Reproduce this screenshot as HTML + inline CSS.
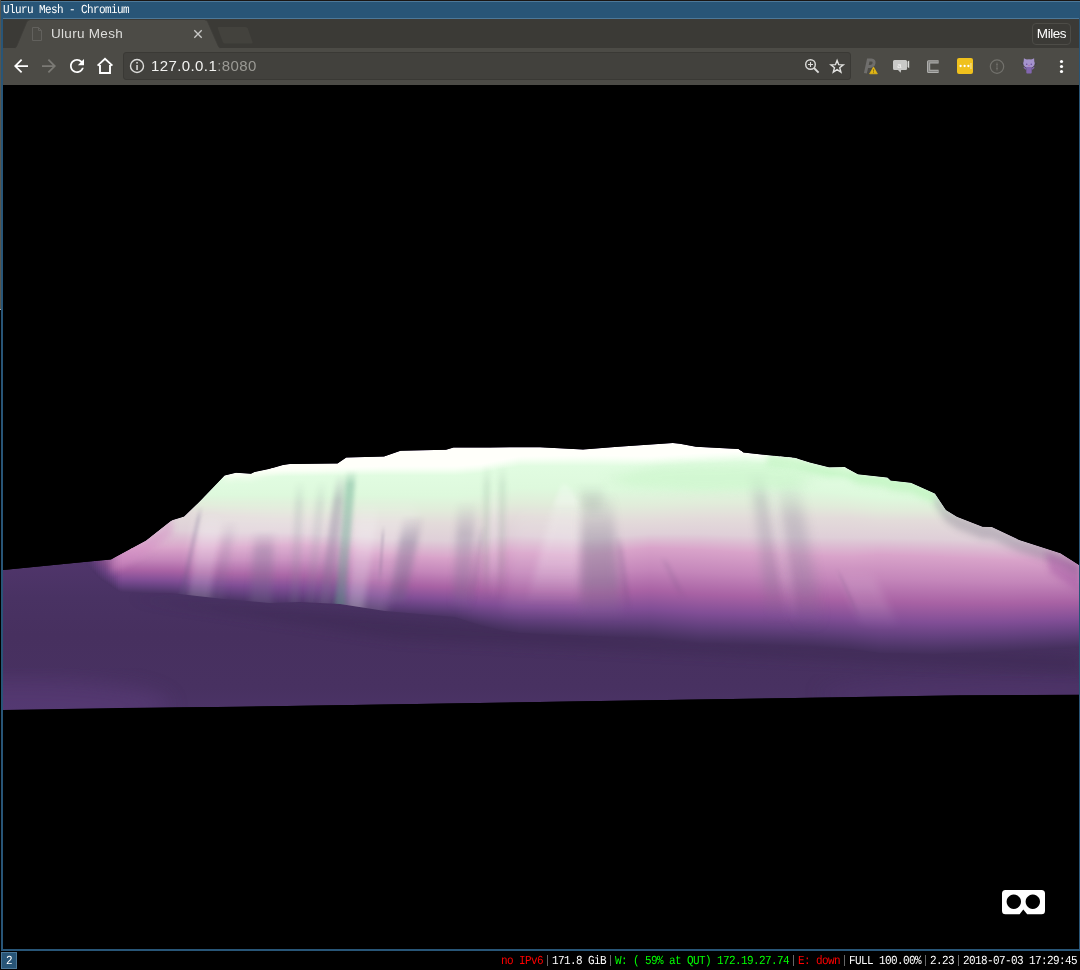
<!DOCTYPE html>
<html>
<head>
<meta charset="utf-8">
<title>Uluru Mesh - Chromium</title>
<style>
html,body{margin:0;padding:0;background:#000;}
body{width:1080px;height:970px;position:relative;overflow:hidden;font-family:"Liberation Sans",sans-serif;}
.abs{position:absolute;}
#tabtitle,#url,#miles{will-change:transform;}
.mono{font-family:"Liberation Mono",monospace;font-size:11px;letter-spacing:-0.601px;line-height:12px;white-space:pre;transform:scaleY(1.12) skewX(0.05deg);transform-origin:0 0;filter:brightness(1);}
#titlebar{left:1px;top:1px;width:1079px;height:18px;background:#285577;box-sizing:border-box;border-top:1px solid #4c7899;}
#titleline{left:3px;top:18px;width:1076px;height:1px;background:#4c7899;}
#titletext{left:3px;top:3px;color:#fff;}
#col0{left:0;top:0;width:1px;height:309px;background:#55554f;}
#col0b{left:0;top:309px;width:1px;height:1px;background:#a8a8a8;}
#row0{left:0;top:0;width:1080px;height:1px;background:#1a1614;}
#bl{left:1px;top:19px;width:2px;height:932px;background:#285577;}
#br{left:1079px;top:19px;width:1px;height:932px;background:#285577;}
#bb{left:1px;top:949px;width:1079px;height:2px;background:#285577;}
#tabstrip{left:3px;top:19px;width:1076px;height:29px;background:#3b3a36;}
#toolbar{left:3px;top:48px;width:1076px;height:37px;background:#4c4b46;}
#urlbox{left:123px;top:52px;width:728px;height:28px;background:#42413d;border-radius:3px;box-sizing:border-box;border:1px solid #3a3935;}
#tabtitle{left:51px;top:25px;font-size:13.5px;line-height:18px;color:#dededc;white-space:pre;letter-spacing:0.3px;}
#url{left:151px;top:56px;font-size:15px;line-height:20px;color:#f2f2f0;white-space:pre;letter-spacing:0.4px;}
#url span{color:#9a9994;}
#miles{left:1032px;top:23px;width:39px;height:22px;box-sizing:border-box;border:1px solid #4d4c47;border-radius:4px;color:#fff;font-size:13.5px;line-height:20px;text-align:center;letter-spacing:-0.45px;}
#content{left:3px;top:85px;width:1076px;height:864px;background:#000;overflow:hidden;}
#ws{left:1px;top:952px;width:16px;height:17px;box-sizing:border-box;background:#285577;border:1px solid #4c7899;}
#wstext{left:6px;top:954px;color:#fff;}
.st{top:954px;}
.sep{top:955px;width:1px;height:11px;background:#666;}
</style>
</head>
<body>
<div class="abs" id="row0"></div>
<div class="abs" id="col0"></div>
<div class="abs" id="col0b"></div>
<div class="abs" id="titlebar"></div>
<div class="abs" id="titleline"></div>
<div class="abs mono" id="titletext">Uluru Mesh - Chromium</div>
<div class="abs" id="bl"></div>
<div class="abs" id="br"></div>
<div class="abs" id="tabstrip"></div>
<div class="abs" id="toolbar"></div>
<svg class="abs" style="left:0;top:0" width="1080" height="86" viewBox="0 0 1080 86">
<path d="M218.5,27 L245.5,27 Q247.2,27 247.8,28.6 L252.6,42.2 Q253,43.6 251.4,43.6 L225,43.6 Q223.4,43.6 222.8,42 L217.8,28.4 Q217.4,27 218.5,27 Z" fill="#43423d"/>
<path d="M12,49 L15.0,48 Q16.2,47.4 16.8,46 L26.8,22 Q27.6,20 29.6,20 L204.9,20 Q206.9,20 207.7,22 L218.2,46 Q218.8,47.4 220,48 L223,49 Z" fill="#4c4b46"/>
<path d="M15.0,48 Q16.2,47.4 16.8,46 L26.8,22 Q27.6,20 29.6,20" fill="none" stroke="#3f3e3a" stroke-width="0.8"/>
<path d="M204.9,20 Q206.9,20 207.7,22 L218.2,46 Q218.8,47.4 220,48" fill="none" stroke="#3f3e3a" stroke-width="0.8"/>
<path d="M32.5,27.5 H38.5 L41.5,30.5 V40.5 H32.5 Z M38.5,27.5 V30.5 H41.5" fill="none" stroke="#62615d" stroke-width="1"/>
<path d="M194.3,30.3 L201.7,37.7 M201.7,30.3 L194.3,37.7" stroke="#c9c9c7" stroke-width="1.35" fill="none"/>
</svg>
<div class="abs" id="urlbox"></div>
<div class="abs" id="tabtitle">Uluru Mesh</div>
<div class="abs" id="url">127.0.0.1<span>:8080</span></div>
<div class="abs" id="miles">Miles</div>
<svg class="abs" style="left:0;top:0" width="1080" height="86" viewBox="0 0 1080 86">
<path transform="translate(10.5,55.5) scale(0.875)" d="M20 11H7.83l5.59-5.59L12 4l-8 8 8 8 1.41-1.41L7.83 13H20v-2z" fill="#ffffff"/>
<path transform="translate(38.5,55.5) scale(0.875)" d="M12 4l-1.41 1.41L16.17 11H4v2h12.17l-5.58 5.59L12 20l8-8z" fill="#7b7a75"/>
<path transform="translate(66.5,55.5) scale(0.875)" d="M17.65 6.35C16.2 4.9 14.21 4 12 4c-4.42 0-7.99 3.58-7.99 8s3.57 8 7.99 8c3.73 0 6.84-2.55 7.73-6h-2.08c-.82 2.33-3.04 4-5.65 4-3.31 0-6-2.69-6-6s2.69-6 6-6c1.66 0 3.14.69 4.22 1.78L13 11h7V4l-2.35 2.35z" fill="#ffffff"/>
<path d="M97.6,65.6 L105,58.9 L112.4,65.6 M100,65 V73 H110 V65" fill="none" stroke="#ffffff" stroke-width="1.9" stroke-linejoin="miter"/>
<circle cx="137" cy="66" r="6.5" fill="none" stroke="#dcdcda" stroke-width="1.4"/>
<rect x="136.3" y="65" width="1.5" height="5" fill="#dcdcda"/><rect x="136.3" y="62" width="1.5" height="1.6" fill="#dcdcda"/>
<circle cx="810.5" cy="64.5" r="4.8" fill="none" stroke="#dcdcda" stroke-width="1.4"/>
<path d="M814,68 L818.6,72.6" stroke="#dcdcda" stroke-width="1.9" fill="none"/>
<path d="M808,64.5 H813 M810.5,62 V67" stroke="#dcdcda" stroke-width="1.1" fill="none"/>
<polygon points="837.10,60.40 838.72,64.68 843.28,64.89 839.72,67.75 840.92,72.16 837.10,69.65 833.28,72.16 834.48,67.75 830.92,64.89 835.48,64.68" fill="none" stroke="#e2e2e0" stroke-width="1.4" stroke-linejoin="miter"/>
<path d="M865.4,73.3 L868.3,60.0 L871.4,60.0 Q874.5,60.2 874.0,63.3 Q873.3,66.5 870.2,66.5 L867.6,66.5" fill="none" stroke="#6f6e6c" stroke-width="3" stroke-linejoin="miter"/>
<polygon points="869.6,73.8 877.4,73.8 873.5,67.0" fill="#e2b714" stroke="#e2b714" stroke-width="0.7" stroke-linejoin="round"/>
<rect x="873.05" y="69.2" width="0.9" height="2.4" fill="#8a6d10"/><rect x="873.05" y="72.2" width="0.9" height="0.9" fill="#8a6d10"/>
<path d="M894.5,60 H905.6 Q907.1,60 907.1,61.5 V68.5 Q907.1,70 905.6,70 H901.2 L900.6,72.8 L898,70 H894.5 Q893,70 893,68.5 V61.5 Q893,60 894.5,60 Z" fill="#c9c9c7"/>
<path d="M907.6,61.6 L909.2,60.4 V68.2 L907.6,67 Z" fill="#dededc"/>
<text x="897.3" y="68.2" font-family="Liberation Sans" font-size="7.5" fill="#f4f4f2">a</text>
<path d="M938.6,61.8 H928.6 V71.4 H938.6" fill="none" stroke="#b0b0ae" stroke-width="3.2" stroke-linejoin="round"/>
<path d="M938.6,61.8 H928.6 V71.4 H938.6" fill="none" stroke="#858583" stroke-width="1.3"/>
<rect x="957" y="58" width="16" height="16" rx="2" fill="#f0c11d"/>
<circle cx="960.6" cy="66" r="1.15" fill="#fff"/>
<circle cx="964.6" cy="66" r="1.15" fill="#fff"/>
<circle cx="968.4" cy="66" r="1.15" fill="#fff"/>
<rect x="970.4" y="63" width="1.1" height="6" fill="#f8e39a"/>
<circle cx="997" cy="66.6" r="6.7" fill="none" stroke="#73726d" stroke-width="1.2"/>
<path d="M997,62.5 V70.5 M996,64.5 H998 M996,68.5 H998" stroke="#6a6964" stroke-width="1.1" fill="none"/>
<g>
<polygon points="1023.6,63 1023.9,58.2 1027.5,60" fill="#a593cd"/><polygon points="1034.4,63 1034.1,58.2 1030.5,60" fill="#a593cd"/>
<ellipse cx="1029" cy="63.6" rx="5.7" ry="4.3" fill="#a593cd"/>
<path d="M1026.3,67 H1031.7 V72.6 Q1031.7,73.6 1030.8,73.6 H1027.2 Q1026.3,73.6 1026.3,72.6 Z" fill="#8266b0"/>
<path d="M1023.8,67.2 L1026.2,69.2 M1034.2,67.2 L1031.8,69.2" stroke="#8266b0" stroke-width="1.3" fill="none"/>
<path d="M1021.4,63.5 L1023,64.5 M1036.6,63.5 L1035,64.5" stroke="#3d3a4a" stroke-width="1" fill="none"/>
<circle cx="1026.7" cy="64.2" r="0.8" fill="#6a4f9c"/><circle cx="1031.3" cy="64.2" r="0.8" fill="#6a4f9c"/>
<circle cx="1029" cy="65.6" r="0.7" fill="#b8689a"/>
</g>
<circle cx="1061.5" cy="61.5" r="1.6" fill="#ffffff"/>
<circle cx="1061.5" cy="66.5" r="1.6" fill="#ffffff"/>
<circle cx="1061.5" cy="71.5" r="1.6" fill="#ffffff"/>
</svg>
<div class="abs" id="content">
<svg class="abs" style="left:0;top:0" width="1076" height="864" viewBox="0 0 1076 864">
<defs>
<linearGradient id="pa" x1="0" y1="0" x2="0" y2="1"><stop offset="0.000" stop-color="#fffffb"/><stop offset="0.050" stop-color="#f8fff5"/><stop offset="0.170" stop-color="#e1fce1"/><stop offset="0.520" stop-color="#def9dd"/><stop offset="0.780" stop-color="#e1ecda"/><stop offset="1.000" stop-color="#e3dcda"/></linearGradient>
<linearGradient id="pb" x1="0" y1="0" x2="0" y2="1"><stop offset="0.000" stop-color="#e3dcda"/><stop offset="0.520" stop-color="#dfcfd8"/><stop offset="1.000" stop-color="#d9a4ca"/></linearGradient>
<linearGradient id="pc" x1="0" y1="0" x2="0" y2="1"><stop offset="0.000" stop-color="#d9a4ca"/><stop offset="0.250" stop-color="#c486ba"/><stop offset="0.480" stop-color="#a862a4"/><stop offset="0.680" stop-color="#814e96"/><stop offset="0.820" stop-color="#64417f"/><stop offset="0.930" stop-color="#4f3669"/><stop offset="1.000" stop-color="#442f5c"/></linearGradient>
<linearGradient id="gg" gradientUnits="userSpaceOnUse" x1="0" y1="475" x2="0" y2="625"><stop offset="0" stop-color="#50356b"/><stop offset="0.25" stop-color="#493263"/><stop offset="0.5" stop-color="#47305f"/><stop offset="0.85" stop-color="#483161"/><stop offset="1" stop-color="#4b3366"/></linearGradient>
<filter id="bl1_2" x="-50%" y="-20%" width="200%" height="140%"><feGaussianBlur stdDeviation="1.2 1.0"/></filter>
<filter id="bl1_5" x="-50%" y="-20%" width="200%" height="140%"><feGaussianBlur stdDeviation="1.5 1.0"/></filter>
<filter id="bl2_0" x="-50%" y="-20%" width="200%" height="140%"><feGaussianBlur stdDeviation="2.0 1.0"/></filter>
<filter id="bl2_5" x="-50%" y="-20%" width="200%" height="140%"><feGaussianBlur stdDeviation="2.5 1.0"/></filter>
<filter id="bl3_0" x="-50%" y="-20%" width="200%" height="140%"><feGaussianBlur stdDeviation="3.0 1.0"/></filter>
<filter id="bl3_5" x="-50%" y="-20%" width="200%" height="140%"><feGaussianBlur stdDeviation="3.5 1.0"/></filter>
<filter id="bl4_0" x="-50%" y="-20%" width="200%" height="140%"><feGaussianBlur stdDeviation="4.0 1.0"/></filter>
<filter id="bl5_0" x="-50%" y="-20%" width="200%" height="140%"><feGaussianBlur stdDeviation="5.0 1.0"/></filter>
<filter id="bl6_0" x="-50%" y="-20%" width="200%" height="140%"><feGaussianBlur stdDeviation="6.0 6.0"/></filter>
<filter id="bl10_0" x="-50%" y="-20%" width="200%" height="140%"><feGaussianBlur stdDeviation="10.0 10.0"/></filter>
<clipPath id="cs"><polygon points="0.0,485.0 81.0,477.0 108.0,474.5 112.0,472.2 143.0,455.4 167.4,436.3 169.6,435.0 181.0,431.5 194.0,419.0 199.0,414.0 221.5,390.5 233.0,387.8 248.0,388.8 251.5,387.0 267.0,383.7 280.0,380.0 287.0,379.0 334.5,378.6 343.2,372.4 381.0,371.6 397.5,365.7 443.0,364.7 450.5,362.6 487.0,362.4 537.0,362.2 580.0,364.6 615.0,361.7 669.8,358.0 677.0,358.7 693.0,361.7 735.5,364.0 740.5,367.6 763.6,370.0 791.7,372.7 807.0,377.6 826.0,382.3 841.6,382.0 855.0,389.3 884.5,392.5 887.6,395.6 908.0,397.7 932.0,408.4 943.0,425.0 954.0,431.8 979.6,441.7 989.0,442.0 1016.4,455.0 1057.5,468.3 1076.0,480.0 1076.0,609.8 957.0,610.3 807.0,612.8 597.0,616.0 397.0,619.2 237.0,621.7 117.0,622.9 0.0,625.0"/></clipPath>
<clipPath id="cr"><polygon points="81.0,477.0 108.0,474.5 112.0,472.2 143.0,455.4 167.4,436.3 169.6,435.0 181.0,431.5 194.0,419.0 199.0,414.0 221.5,390.5 233.0,387.8 248.0,388.8 251.5,387.0 267.0,383.7 280.0,380.0 287.0,379.0 334.5,378.6 343.2,372.4 381.0,371.6 397.5,365.7 443.0,364.7 450.5,362.6 487.0,362.4 537.0,362.2 580.0,364.6 615.0,361.7 669.8,358.0 677.0,358.7 693.0,361.7 735.5,364.0 740.5,367.6 763.6,370.0 791.7,372.7 807.0,377.6 826.0,382.3 841.6,382.0 855.0,389.3 884.5,392.5 887.6,395.6 908.0,397.7 932.0,408.4 943.0,425.0 954.0,431.8 979.6,441.7 989.0,442.0 1016.4,455.0 1057.5,468.3 1076.0,480.0 1076.0,563.0 997.0,567.0 932.0,569.0 877.0,568.0 847.0,564.0 807.0,561.0 742.0,559.0 697.0,558.0 647.0,553.0 587.0,551.0 517.0,548.0 497.0,545.0 477.0,540.0 452.0,532.0 382.0,526.0 337.0,519.0 297.0,517.0 267.0,518.0 221.0,514.0 167.0,508.0 141.0,508.0 117.0,507.0 97.0,494.0 81.0,478.0"/></clipPath>
</defs>
<g clip-path="url(#cs)">
<polygon points="0.0,485.0 81.0,477.0 108.0,474.5 112.0,472.2 143.0,455.4 167.4,436.3 169.6,435.0 181.0,431.5 194.0,419.0 199.0,414.0 221.5,390.5 233.0,387.8 248.0,388.8 251.5,387.0 267.0,383.7 280.0,380.0 287.0,379.0 334.5,378.6 343.2,372.4 381.0,371.6 397.5,365.7 443.0,364.7 450.5,362.6 487.0,362.4 537.0,362.2 580.0,364.6 615.0,361.7 669.8,358.0 677.0,358.7 693.0,361.7 735.5,364.0 740.5,367.6 763.6,370.0 791.7,372.7 807.0,377.6 826.0,382.3 841.6,382.0 855.0,389.3 884.5,392.5 887.6,395.6 908.0,397.7 932.0,408.4 943.0,425.0 954.0,431.8 979.6,441.7 989.0,442.0 1016.4,455.0 1057.5,468.3 1076.0,480.0 1076.0,609.8 957.0,610.3 807.0,612.8 597.0,616.0 397.0,619.2 237.0,621.7 117.0,622.9 0.0,625.0" fill="url(#gg)"/>
<path d="M127.0,513.0 L397.0,533.0 L697.0,557.0 L1076.0,570.0 L1076.0,587.0 L397.0,555.0 Z" fill="#37254d" opacity="0.38" filter="url(#bl6_0)"/>
<ellipse cx="17" cy="620" rx="150" ry="26" fill="#603f80" opacity="0.45" filter="url(#bl10_0)"/>
<ellipse cx="997" cy="609" rx="180" ry="14" fill="#5a3b78" opacity="0.35" filter="url(#bl10_0)"/>
</g>
<g clip-path="url(#cs)">
<g clip-path="url(#cr)"><g shape-rendering="crispEdges">
<g opacity="0.03">
<rect x="81" y="355.1" width="2" height="30.5" fill="#fffffa"/>
<rect x="81" y="385.1" width="2" height="38.4" fill="url(#pa)"/>
<rect x="81" y="423.0" width="2" height="32.8" fill="url(#pb)"/>
<rect x="81" y="455.3" width="2" height="23.8" fill="url(#pc)"/>
</g>
<g opacity="0.08">
<rect x="83" y="355.2" width="2" height="30.5" fill="#fffffa"/>
<rect x="83" y="385.2" width="2" height="38.3" fill="url(#pa)"/>
<rect x="83" y="423.0" width="2" height="33.4" fill="url(#pb)"/>
<rect x="83" y="455.9" width="2" height="25.2" fill="url(#pc)"/>
</g>
<g opacity="0.13">
<rect x="85" y="355.3" width="2" height="30.5" fill="#fffffa"/>
<rect x="85" y="385.3" width="2" height="38.2" fill="url(#pa)"/>
<rect x="85" y="423.0" width="2" height="34.1" fill="url(#pb)"/>
<rect x="85" y="456.6" width="2" height="26.8" fill="url(#pc)"/>
</g>
<g opacity="0.18">
<rect x="87" y="355.4" width="2" height="30.5" fill="#fffffa"/>
<rect x="87" y="385.4" width="2" height="38.1" fill="url(#pa)"/>
<rect x="87" y="423.0" width="2" height="34.7" fill="url(#pb)"/>
<rect x="87" y="457.2" width="2" height="28.2" fill="url(#pc)"/>
</g>
<g opacity="0.24">
<rect x="89" y="355.6" width="2" height="30.5" fill="#fffffa"/>
<rect x="89" y="385.6" width="2" height="37.9" fill="url(#pa)"/>
<rect x="89" y="423.0" width="2" height="35.3" fill="url(#pb)"/>
<rect x="89" y="457.8" width="2" height="29.8" fill="url(#pc)"/>
</g>
<g opacity="0.29">
<rect x="91" y="355.7" width="2" height="30.5" fill="#fffffa"/>
<rect x="91" y="385.7" width="2" height="37.8" fill="url(#pa)"/>
<rect x="91" y="423.0" width="2" height="35.9" fill="url(#pb)"/>
<rect x="91" y="458.4" width="2" height="31.2" fill="url(#pc)"/>
</g>
<g opacity="0.34">
<rect x="93" y="355.8" width="2" height="30.5" fill="#fffffa"/>
<rect x="93" y="385.8" width="2" height="37.7" fill="url(#pa)"/>
<rect x="93" y="423.0" width="2" height="36.6" fill="url(#pb)"/>
<rect x="93" y="459.1" width="2" height="32.8" fill="url(#pc)"/>
</g>
<g opacity="0.39">
<rect x="95" y="355.9" width="2" height="30.5" fill="#fffffa"/>
<rect x="95" y="385.9" width="2" height="37.6" fill="url(#pa)"/>
<rect x="95" y="423.0" width="2" height="37.2" fill="url(#pb)"/>
<rect x="95" y="459.7" width="2" height="34.2" fill="url(#pc)"/>
</g>
<g opacity="0.45">
<rect x="97" y="356.1" width="2" height="30.5" fill="#fffffa"/>
<rect x="97" y="386.1" width="2" height="37.5" fill="url(#pa)"/>
<rect x="97" y="423.1" width="2" height="37.6" fill="url(#pb)"/>
<rect x="97" y="460.1" width="2" height="35.6" fill="url(#pc)"/>
</g>
<g opacity="0.50">
<rect x="99" y="356.1" width="2" height="30.5" fill="#fffffa"/>
<rect x="99" y="386.1" width="2" height="37.5" fill="url(#pa)"/>
<rect x="99" y="423.1" width="2" height="37.8" fill="url(#pb)"/>
<rect x="99" y="460.5" width="2" height="36.6" fill="url(#pc)"/>
</g>
<g opacity="0.55">
<rect x="101" y="356.2" width="2" height="30.5" fill="#fffffa"/>
<rect x="101" y="386.2" width="2" height="37.5" fill="url(#pa)"/>
<rect x="101" y="423.2" width="2" height="38.0" fill="url(#pb)"/>
<rect x="101" y="460.8" width="2" height="37.8" fill="url(#pc)"/>
</g>
<g opacity="0.61">
<rect x="103" y="356.4" width="2" height="30.5" fill="#fffffa"/>
<rect x="103" y="386.4" width="2" height="37.5" fill="url(#pa)"/>
<rect x="103" y="423.4" width="2" height="38.2" fill="url(#pb)"/>
<rect x="103" y="461.0" width="2" height="38.9" fill="url(#pc)"/>
</g>
<g opacity="0.66">
<rect x="105" y="356.4" width="2" height="30.5" fill="#fffffa"/>
<rect x="105" y="386.4" width="2" height="37.5" fill="url(#pa)"/>
<rect x="105" y="423.4" width="2" height="38.4" fill="url(#pb)"/>
<rect x="105" y="461.4" width="2" height="39.9" fill="url(#pc)"/>
</g>
<g opacity="0.71">
<rect x="107" y="356.6" width="2" height="30.5" fill="#fffffa"/>
<rect x="107" y="386.6" width="2" height="37.5" fill="url(#pa)"/>
<rect x="107" y="423.6" width="2" height="38.6" fill="url(#pb)"/>
<rect x="107" y="461.6" width="2" height="41.1" fill="url(#pc)"/>
</g>
<g opacity="0.76">
<rect x="109" y="356.6" width="2" height="30.5" fill="#fffffa"/>
<rect x="109" y="386.6" width="2" height="37.5" fill="url(#pa)"/>
<rect x="109" y="423.6" width="2" height="38.8" fill="url(#pb)"/>
<rect x="109" y="462.0" width="2" height="42.1" fill="url(#pc)"/>
</g>
<g opacity="0.82">
<rect x="111" y="356.8" width="2" height="30.5" fill="#fffffa"/>
<rect x="111" y="386.8" width="2" height="37.5" fill="url(#pa)"/>
<rect x="111" y="423.8" width="2" height="39.0" fill="url(#pb)"/>
<rect x="111" y="462.2" width="2" height="43.2" fill="url(#pc)"/>
</g>
<g opacity="0.87">
<rect x="113" y="356.9" width="2" height="30.5" fill="#fffffa"/>
<rect x="113" y="386.9" width="2" height="37.5" fill="url(#pa)"/>
<rect x="113" y="423.9" width="2" height="39.2" fill="url(#pb)"/>
<rect x="113" y="462.5" width="2" height="44.4" fill="url(#pc)"/>
</g>
<g opacity="0.92">
<rect x="115" y="356.9" width="2" height="30.5" fill="#fffffa"/>
<rect x="115" y="386.9" width="2" height="37.5" fill="url(#pa)"/>
<rect x="115" y="423.9" width="2" height="39.4" fill="url(#pb)"/>
<rect x="115" y="462.9" width="2" height="45.4" fill="url(#pc)"/>
</g>
<g opacity="0.97">
<rect x="117" y="357.0" width="2" height="30.5" fill="#fffffa"/>
<rect x="117" y="387.0" width="2" height="37.5" fill="url(#pa)"/>
<rect x="117" y="424.0" width="2" height="39.5" fill="url(#pb)"/>
<rect x="117" y="463.0" width="2" height="46.0" fill="url(#pc)"/>
</g>
<g opacity="1.00">
<rect x="119" y="357.1" width="2" height="30.5" fill="#fffffa"/>
<rect x="119" y="387.1" width="2" height="37.5" fill="url(#pa)"/>
<rect x="119" y="424.1" width="2" height="39.4" fill="url(#pb)"/>
<rect x="119" y="463.0" width="2" height="46.1" fill="url(#pc)"/>
</g>
<g opacity="1.00">
<rect x="121" y="357.2" width="2" height="30.5" fill="#fffffa"/>
<rect x="121" y="387.2" width="2" height="37.5" fill="url(#pa)"/>
<rect x="121" y="424.2" width="2" height="39.3" fill="url(#pb)"/>
<rect x="121" y="463.0" width="2" height="46.2" fill="url(#pc)"/>
</g>
<g opacity="1.00">
<rect x="123" y="357.3" width="2" height="30.5" fill="#fffffa"/>
<rect x="123" y="387.3" width="2" height="37.5" fill="url(#pa)"/>
<rect x="123" y="424.3" width="2" height="39.2" fill="url(#pb)"/>
<rect x="123" y="463.0" width="2" height="46.3" fill="url(#pc)"/>
</g>
<rect x="125" y="357.4" width="2" height="30.5" fill="#fffffa"/>
<rect x="125" y="387.4" width="2" height="37.5" fill="url(#pa)"/>
<rect x="125" y="424.4" width="2" height="39.1" fill="url(#pb)"/>
<rect x="125" y="463.0" width="2" height="46.4" fill="url(#pc)"/>
<rect x="127" y="357.5" width="2" height="30.5" fill="#fffffa"/>
<rect x="127" y="387.5" width="2" height="37.5" fill="url(#pa)"/>
<rect x="127" y="424.5" width="2" height="39.0" fill="url(#pb)"/>
<rect x="127" y="463.0" width="2" height="46.5" fill="url(#pc)"/>
<rect x="129" y="357.5" width="2" height="30.5" fill="#fffffa"/>
<rect x="129" y="387.5" width="2" height="37.5" fill="url(#pa)"/>
<rect x="129" y="424.5" width="2" height="39.0" fill="url(#pb)"/>
<rect x="129" y="463.0" width="2" height="46.5" fill="url(#pc)"/>
<rect x="131" y="357.6" width="2" height="30.5" fill="#fffffa"/>
<rect x="131" y="387.6" width="2" height="37.5" fill="url(#pa)"/>
<rect x="131" y="424.6" width="2" height="38.9" fill="url(#pb)"/>
<rect x="131" y="463.0" width="2" height="46.6" fill="url(#pc)"/>
<rect x="133" y="357.7" width="2" height="30.5" fill="#fffffa"/>
<rect x="133" y="387.7" width="2" height="37.5" fill="url(#pa)"/>
<rect x="133" y="424.7" width="2" height="38.8" fill="url(#pb)"/>
<rect x="133" y="463.0" width="2" height="46.7" fill="url(#pc)"/>
<rect x="135" y="357.8" width="2" height="30.5" fill="#fffffa"/>
<rect x="135" y="387.8" width="2" height="37.5" fill="url(#pa)"/>
<rect x="135" y="424.8" width="2" height="38.7" fill="url(#pb)"/>
<rect x="135" y="463.0" width="2" height="46.8" fill="url(#pc)"/>
<rect x="137" y="357.9" width="2" height="30.5" fill="#fffffa"/>
<rect x="137" y="387.9" width="2" height="37.5" fill="url(#pa)"/>
<rect x="137" y="424.9" width="2" height="38.6" fill="url(#pb)"/>
<rect x="137" y="463.0" width="2" height="46.9" fill="url(#pc)"/>
<rect x="139" y="358.0" width="2" height="30.5" fill="#fffffa"/>
<rect x="139" y="388.0" width="2" height="37.5" fill="url(#pa)"/>
<rect x="139" y="425.0" width="2" height="38.5" fill="url(#pb)"/>
<rect x="139" y="463.0" width="2" height="47.0" fill="url(#pc)"/>
<rect x="141" y="358.0" width="2" height="30.5" fill="#fffffa"/>
<rect x="141" y="388.0" width="2" height="37.5" fill="url(#pa)"/>
<rect x="141" y="425.0" width="2" height="38.5" fill="url(#pb)"/>
<rect x="141" y="463.0" width="2" height="47.0" fill="url(#pc)"/>
<rect x="143" y="358.0" width="2" height="30.5" fill="#fffffa"/>
<rect x="143" y="388.0" width="2" height="37.5" fill="url(#pa)"/>
<rect x="143" y="425.0" width="2" height="38.5" fill="url(#pb)"/>
<rect x="143" y="463.0" width="2" height="47.1" fill="url(#pc)"/>
<rect x="145" y="358.0" width="2" height="30.5" fill="#fffffa"/>
<rect x="145" y="388.0" width="2" height="37.5" fill="url(#pa)"/>
<rect x="145" y="425.0" width="2" height="38.5" fill="url(#pb)"/>
<rect x="145" y="463.0" width="2" height="47.2" fill="url(#pc)"/>
<rect x="147" y="358.0" width="2" height="30.5" fill="#fffffa"/>
<rect x="147" y="388.0" width="2" height="37.5" fill="url(#pa)"/>
<rect x="147" y="425.0" width="2" height="38.5" fill="url(#pb)"/>
<rect x="147" y="463.0" width="2" height="47.3" fill="url(#pc)"/>
<rect x="149" y="358.0" width="2" height="30.5" fill="#fffffa"/>
<rect x="149" y="388.0" width="2" height="37.5" fill="url(#pa)"/>
<rect x="149" y="425.0" width="2" height="38.5" fill="url(#pb)"/>
<rect x="149" y="463.0" width="2" height="47.3" fill="url(#pc)"/>
<rect x="151" y="358.0" width="2" height="30.5" fill="#fffffa"/>
<rect x="151" y="388.0" width="2" height="37.5" fill="url(#pa)"/>
<rect x="151" y="425.0" width="2" height="38.5" fill="url(#pb)"/>
<rect x="151" y="463.0" width="2" height="47.4" fill="url(#pc)"/>
<rect x="153" y="358.0" width="2" height="30.5" fill="#fffffa"/>
<rect x="153" y="388.0" width="2" height="37.5" fill="url(#pa)"/>
<rect x="153" y="425.0" width="2" height="38.5" fill="url(#pb)"/>
<rect x="153" y="463.0" width="2" height="47.5" fill="url(#pc)"/>
<rect x="155" y="358.0" width="2" height="30.5" fill="#fffffa"/>
<rect x="155" y="388.0" width="2" height="37.5" fill="url(#pa)"/>
<rect x="155" y="425.0" width="2" height="38.5" fill="url(#pb)"/>
<rect x="155" y="463.0" width="2" height="47.6" fill="url(#pc)"/>
<rect x="157" y="358.0" width="2" height="30.5" fill="#fffffa"/>
<rect x="157" y="388.0" width="2" height="37.5" fill="url(#pa)"/>
<rect x="157" y="425.0" width="2" height="38.5" fill="url(#pb)"/>
<rect x="157" y="463.0" width="2" height="47.7" fill="url(#pc)"/>
<rect x="159" y="358.0" width="2" height="30.5" fill="#fffffa"/>
<rect x="159" y="388.0" width="2" height="37.5" fill="url(#pa)"/>
<rect x="159" y="425.0" width="2" height="38.5" fill="url(#pb)"/>
<rect x="159" y="463.0" width="2" height="47.7" fill="url(#pc)"/>
<rect x="161" y="358.0" width="2" height="30.5" fill="#fffffa"/>
<rect x="161" y="388.0" width="2" height="37.5" fill="url(#pa)"/>
<rect x="161" y="425.0" width="2" height="38.5" fill="url(#pb)"/>
<rect x="161" y="463.0" width="2" height="47.8" fill="url(#pc)"/>
<rect x="163" y="358.0" width="2" height="30.5" fill="#fffffa"/>
<rect x="163" y="388.0" width="2" height="37.5" fill="url(#pa)"/>
<rect x="163" y="425.0" width="2" height="38.5" fill="url(#pb)"/>
<rect x="163" y="463.0" width="2" height="47.9" fill="url(#pc)"/>
<rect x="165" y="358.0" width="2" height="30.5" fill="#fffffa"/>
<rect x="165" y="388.0" width="2" height="37.5" fill="url(#pa)"/>
<rect x="165" y="425.0" width="2" height="38.5" fill="url(#pb)"/>
<rect x="165" y="463.0" width="2" height="48.0" fill="url(#pc)"/>
<rect x="167" y="358.0" width="2" height="30.5" fill="#fffffa"/>
<rect x="167" y="388.0" width="2" height="37.6" fill="url(#pa)"/>
<rect x="167" y="425.1" width="2" height="38.4" fill="url(#pb)"/>
<rect x="167" y="463.0" width="2" height="48.1" fill="url(#pc)"/>
<rect x="169" y="357.9" width="2" height="30.5" fill="#fffffa"/>
<rect x="169" y="387.9" width="2" height="37.8" fill="url(#pa)"/>
<rect x="169" y="425.3" width="2" height="38.2" fill="url(#pb)"/>
<rect x="169" y="462.9" width="2" height="48.4" fill="url(#pc)"/>
<rect x="171" y="357.9" width="2" height="30.5" fill="#fffffa"/>
<rect x="171" y="387.9" width="2" height="38.1" fill="url(#pa)"/>
<rect x="171" y="425.5" width="2" height="37.9" fill="url(#pb)"/>
<rect x="171" y="462.9" width="2" height="48.6" fill="url(#pc)"/>
<rect x="173" y="357.9" width="2" height="30.5" fill="#fffffa"/>
<rect x="173" y="387.9" width="2" height="38.3" fill="url(#pa)"/>
<rect x="173" y="425.6" width="2" height="37.7" fill="url(#pb)"/>
<rect x="173" y="462.9" width="2" height="48.9" fill="url(#pc)"/>
<rect x="175" y="357.8" width="2" height="30.5" fill="#fffffa"/>
<rect x="175" y="387.8" width="2" height="38.5" fill="url(#pa)"/>
<rect x="175" y="425.8" width="2" height="37.5" fill="url(#pb)"/>
<rect x="175" y="462.8" width="2" height="49.2" fill="url(#pc)"/>
<rect x="177" y="357.8" width="2" height="30.5" fill="#fffffa"/>
<rect x="177" y="387.8" width="2" height="38.7" fill="url(#pa)"/>
<rect x="177" y="426.0" width="2" height="37.3" fill="url(#pb)"/>
<rect x="177" y="462.8" width="2" height="49.4" fill="url(#pc)"/>
<rect x="179" y="357.8" width="2" height="30.5" fill="#fffffa"/>
<rect x="179" y="387.8" width="2" height="38.9" fill="url(#pa)"/>
<rect x="179" y="426.2" width="2" height="37.1" fill="url(#pb)"/>
<rect x="179" y="462.8" width="2" height="49.7" fill="url(#pc)"/>
<rect x="181" y="357.7" width="2" height="30.5" fill="#fffffa"/>
<rect x="181" y="387.7" width="2" height="39.2" fill="url(#pa)"/>
<rect x="181" y="426.4" width="2" height="36.8" fill="url(#pb)"/>
<rect x="181" y="462.7" width="2" height="49.9" fill="url(#pc)"/>
<rect x="183" y="357.7" width="2" height="30.5" fill="#fffffa"/>
<rect x="183" y="387.7" width="2" height="39.4" fill="url(#pa)"/>
<rect x="183" y="426.6" width="2" height="36.6" fill="url(#pb)"/>
<rect x="183" y="462.7" width="2" height="50.2" fill="url(#pc)"/>
<rect x="185" y="357.6" width="2" height="30.5" fill="#fffffa"/>
<rect x="185" y="387.6" width="2" height="39.6" fill="url(#pa)"/>
<rect x="185" y="426.8" width="2" height="36.4" fill="url(#pb)"/>
<rect x="185" y="462.6" width="2" height="50.5" fill="url(#pc)"/>
<rect x="187" y="357.6" width="2" height="30.5" fill="#fffffa"/>
<rect x="187" y="387.6" width="2" height="39.8" fill="url(#pa)"/>
<rect x="187" y="426.9" width="2" height="36.2" fill="url(#pb)"/>
<rect x="187" y="462.6" width="2" height="50.7" fill="url(#pc)"/>
<rect x="189" y="357.6" width="2" height="30.5" fill="#fffffa"/>
<rect x="189" y="387.6" width="2" height="40.1" fill="url(#pa)"/>
<rect x="189" y="427.1" width="2" height="35.9" fill="url(#pb)"/>
<rect x="189" y="462.6" width="2" height="51.0" fill="url(#pc)"/>
<rect x="191" y="357.5" width="2" height="30.5" fill="#fffffa"/>
<rect x="191" y="387.5" width="2" height="40.3" fill="url(#pa)"/>
<rect x="191" y="427.3" width="2" height="35.7" fill="url(#pb)"/>
<rect x="191" y="462.5" width="2" height="51.2" fill="url(#pc)"/>
<rect x="193" y="357.5" width="2" height="30.5" fill="#fffffa"/>
<rect x="193" y="387.5" width="2" height="40.5" fill="url(#pa)"/>
<rect x="193" y="427.5" width="2" height="35.5" fill="url(#pb)"/>
<rect x="193" y="462.5" width="2" height="51.5" fill="url(#pc)"/>
<rect x="195" y="357.5" width="2" height="30.5" fill="#fffffa"/>
<rect x="195" y="387.5" width="2" height="40.7" fill="url(#pa)"/>
<rect x="195" y="427.7" width="2" height="35.3" fill="url(#pb)"/>
<rect x="195" y="462.5" width="2" height="51.8" fill="url(#pc)"/>
<rect x="197" y="357.4" width="2" height="30.5" fill="#fffffa"/>
<rect x="197" y="387.4" width="2" height="40.9" fill="url(#pa)"/>
<rect x="197" y="427.9" width="2" height="35.1" fill="url(#pb)"/>
<rect x="197" y="462.4" width="2" height="52.0" fill="url(#pc)"/>
<rect x="199" y="357.4" width="2" height="30.5" fill="#fffffa"/>
<rect x="199" y="387.4" width="2" height="41.2" fill="url(#pa)"/>
<rect x="199" y="428.1" width="2" height="34.8" fill="url(#pb)"/>
<rect x="199" y="462.4" width="2" height="52.3" fill="url(#pc)"/>
<rect x="201" y="357.4" width="2" height="30.5" fill="#fffffa"/>
<rect x="201" y="387.4" width="2" height="41.4" fill="url(#pa)"/>
<rect x="201" y="428.2" width="2" height="34.6" fill="url(#pb)"/>
<rect x="201" y="462.4" width="2" height="52.5" fill="url(#pc)"/>
<rect x="203" y="357.3" width="2" height="30.5" fill="#fffffa"/>
<rect x="203" y="387.3" width="2" height="41.6" fill="url(#pa)"/>
<rect x="203" y="428.4" width="2" height="34.4" fill="url(#pb)"/>
<rect x="203" y="462.3" width="2" height="52.8" fill="url(#pc)"/>
<rect x="205" y="357.3" width="2" height="30.5" fill="#fffffa"/>
<rect x="205" y="387.3" width="2" height="41.8" fill="url(#pa)"/>
<rect x="205" y="428.6" width="2" height="34.2" fill="url(#pb)"/>
<rect x="205" y="462.3" width="2" height="53.1" fill="url(#pc)"/>
<rect x="207" y="357.2" width="2" height="30.5" fill="#fffffa"/>
<rect x="207" y="387.2" width="2" height="42.1" fill="url(#pa)"/>
<rect x="207" y="428.8" width="2" height="33.9" fill="url(#pb)"/>
<rect x="207" y="462.2" width="2" height="53.3" fill="url(#pc)"/>
<rect x="209" y="357.2" width="2" height="30.5" fill="#fffffa"/>
<rect x="209" y="387.2" width="2" height="42.3" fill="url(#pa)"/>
<rect x="209" y="429.0" width="2" height="33.7" fill="url(#pb)"/>
<rect x="209" y="462.2" width="2" height="53.6" fill="url(#pc)"/>
<rect x="211" y="357.2" width="2" height="30.5" fill="#fffffa"/>
<rect x="211" y="387.2" width="2" height="42.5" fill="url(#pa)"/>
<rect x="211" y="429.2" width="2" height="33.5" fill="url(#pb)"/>
<rect x="211" y="462.2" width="2" height="53.8" fill="url(#pc)"/>
<rect x="213" y="357.1" width="2" height="30.5" fill="#fffffa"/>
<rect x="213" y="387.1" width="2" height="42.7" fill="url(#pa)"/>
<rect x="213" y="429.4" width="2" height="33.3" fill="url(#pb)"/>
<rect x="213" y="462.1" width="2" height="54.1" fill="url(#pc)"/>
<rect x="215" y="357.1" width="2" height="30.5" fill="#fffffa"/>
<rect x="215" y="387.1" width="2" height="42.9" fill="url(#pa)"/>
<rect x="215" y="429.5" width="2" height="33.1" fill="url(#pb)"/>
<rect x="215" y="462.1" width="2" height="54.4" fill="url(#pc)"/>
<rect x="217" y="357.1" width="2" height="30.5" fill="#fffffa"/>
<rect x="217" y="387.1" width="2" height="43.2" fill="url(#pa)"/>
<rect x="217" y="429.7" width="2" height="32.8" fill="url(#pb)"/>
<rect x="217" y="462.1" width="2" height="54.6" fill="url(#pc)"/>
<rect x="219" y="357.0" width="2" height="30.5" fill="#fffffa"/>
<rect x="219" y="387.0" width="2" height="43.4" fill="url(#pa)"/>
<rect x="219" y="429.9" width="2" height="32.6" fill="url(#pb)"/>
<rect x="219" y="462.0" width="2" height="54.9" fill="url(#pc)"/>
<rect x="221" y="356.9" width="2" height="30.5" fill="#fffffa"/>
<rect x="221" y="386.9" width="2" height="43.7" fill="url(#pa)"/>
<rect x="221" y="430.1" width="2" height="32.4" fill="url(#pb)"/>
<rect x="221" y="462.0" width="2" height="55.2" fill="url(#pc)"/>
<rect x="223" y="356.7" width="2" height="30.5" fill="#fffffa"/>
<rect x="223" y="386.7" width="2" height="44.0" fill="url(#pa)"/>
<rect x="223" y="430.2" width="2" height="32.2" fill="url(#pb)"/>
<rect x="223" y="461.9" width="2" height="55.5" fill="url(#pc)"/>
<rect x="225" y="356.6" width="2" height="30.5" fill="#fffffa"/>
<rect x="225" y="386.6" width="2" height="44.3" fill="url(#pa)"/>
<rect x="225" y="430.3" width="2" height="32.0" fill="url(#pb)"/>
<rect x="225" y="461.8" width="2" height="55.8" fill="url(#pc)"/>
<rect x="227" y="356.4" width="2" height="30.5" fill="#fffffa"/>
<rect x="227" y="386.4" width="2" height="44.6" fill="url(#pa)"/>
<rect x="227" y="430.5" width="2" height="31.7" fill="url(#pb)"/>
<rect x="227" y="461.7" width="2" height="56.1" fill="url(#pc)"/>
<rect x="229" y="356.2" width="2" height="30.5" fill="#fffffa"/>
<rect x="229" y="386.2" width="2" height="44.9" fill="url(#pa)"/>
<rect x="229" y="430.6" width="2" height="31.5" fill="url(#pb)"/>
<rect x="229" y="461.6" width="2" height="56.4" fill="url(#pc)"/>
<rect x="231" y="356.0" width="2" height="30.5" fill="#fffffa"/>
<rect x="231" y="386.0" width="2" height="45.2" fill="url(#pa)"/>
<rect x="231" y="430.7" width="2" height="31.3" fill="url(#pb)"/>
<rect x="231" y="461.5" width="2" height="56.7" fill="url(#pc)"/>
<rect x="233" y="355.9" width="2" height="30.5" fill="#fffffa"/>
<rect x="233" y="385.9" width="2" height="45.5" fill="url(#pa)"/>
<rect x="233" y="430.8" width="2" height="31.1" fill="url(#pb)"/>
<rect x="233" y="461.4" width="2" height="57.0" fill="url(#pc)"/>
<rect x="235" y="355.7" width="2" height="30.5" fill="#fffffa"/>
<rect x="235" y="385.7" width="2" height="45.8" fill="url(#pa)"/>
<rect x="235" y="431.0" width="2" height="30.9" fill="url(#pb)"/>
<rect x="235" y="461.3" width="2" height="57.3" fill="url(#pc)"/>
<rect x="237" y="355.5" width="2" height="30.5" fill="#fffffa"/>
<rect x="237" y="385.5" width="2" height="46.1" fill="url(#pa)"/>
<rect x="237" y="431.1" width="2" height="30.7" fill="url(#pb)"/>
<rect x="237" y="461.3" width="2" height="57.6" fill="url(#pc)"/>
<rect x="239" y="355.3" width="2" height="30.5" fill="#fffffa"/>
<rect x="239" y="385.3" width="2" height="46.4" fill="url(#pa)"/>
<rect x="239" y="431.2" width="2" height="30.4" fill="url(#pb)"/>
<rect x="239" y="461.2" width="2" height="57.9" fill="url(#pc)"/>
<rect x="241" y="355.2" width="2" height="30.5" fill="#fffffa"/>
<rect x="241" y="385.2" width="2" height="46.7" fill="url(#pa)"/>
<rect x="241" y="431.4" width="2" height="30.2" fill="url(#pb)"/>
<rect x="241" y="461.1" width="2" height="58.2" fill="url(#pc)"/>
<rect x="243" y="355.0" width="2" height="30.5" fill="#fffffa"/>
<rect x="243" y="385.0" width="2" height="47.0" fill="url(#pa)"/>
<rect x="243" y="431.5" width="2" height="30.0" fill="url(#pb)"/>
<rect x="243" y="461.0" width="2" height="58.5" fill="url(#pc)"/>
<rect x="245" y="354.8" width="2" height="30.5" fill="#fffffa"/>
<rect x="245" y="384.8" width="2" height="47.3" fill="url(#pa)"/>
<rect x="245" y="431.6" width="2" height="29.8" fill="url(#pb)"/>
<rect x="245" y="460.9" width="2" height="58.8" fill="url(#pc)"/>
<rect x="247" y="354.7" width="2" height="30.5" fill="#fffffa"/>
<rect x="247" y="384.7" width="2" height="47.6" fill="url(#pa)"/>
<rect x="247" y="431.8" width="2" height="29.6" fill="url(#pb)"/>
<rect x="247" y="460.8" width="2" height="59.1" fill="url(#pc)"/>
<rect x="249" y="354.5" width="2" height="30.5" fill="#fffffa"/>
<rect x="249" y="384.5" width="2" height="47.9" fill="url(#pa)"/>
<rect x="249" y="431.9" width="2" height="29.3" fill="url(#pb)"/>
<rect x="249" y="460.7" width="2" height="59.4" fill="url(#pc)"/>
<rect x="251" y="354.3" width="2" height="30.5" fill="#fffffa"/>
<rect x="251" y="384.3" width="2" height="48.2" fill="url(#pa)"/>
<rect x="251" y="432.0" width="2" height="29.1" fill="url(#pb)"/>
<rect x="251" y="460.7" width="2" height="59.7" fill="url(#pc)"/>
<rect x="253" y="354.1" width="2" height="30.5" fill="#fffffa"/>
<rect x="253" y="384.1" width="2" height="48.5" fill="url(#pa)"/>
<rect x="253" y="432.2" width="2" height="28.9" fill="url(#pb)"/>
<rect x="253" y="460.6" width="2" height="60.0" fill="url(#pc)"/>
<rect x="255" y="354.0" width="2" height="30.5" fill="#fffffa"/>
<rect x="255" y="384.0" width="2" height="48.8" fill="url(#pa)"/>
<rect x="255" y="432.3" width="2" height="28.7" fill="url(#pb)"/>
<rect x="255" y="460.5" width="2" height="60.3" fill="url(#pc)"/>
<rect x="257" y="353.8" width="2" height="30.5" fill="#fffffa"/>
<rect x="257" y="383.8" width="2" height="49.1" fill="url(#pa)"/>
<rect x="257" y="432.4" width="2" height="28.5" fill="url(#pb)"/>
<rect x="257" y="460.4" width="2" height="60.6" fill="url(#pc)"/>
<rect x="259" y="353.6" width="2" height="30.5" fill="#fffffa"/>
<rect x="259" y="383.6" width="2" height="49.4" fill="url(#pa)"/>
<rect x="259" y="432.5" width="2" height="28.3" fill="url(#pb)"/>
<rect x="259" y="460.3" width="2" height="60.9" fill="url(#pc)"/>
<rect x="261" y="353.4" width="2" height="30.5" fill="#fffffa"/>
<rect x="261" y="383.4" width="2" height="49.7" fill="url(#pa)"/>
<rect x="261" y="432.7" width="2" height="28.0" fill="url(#pb)"/>
<rect x="261" y="460.2" width="2" height="61.2" fill="url(#pc)"/>
<rect x="263" y="353.3" width="2" height="30.5" fill="#fffffa"/>
<rect x="263" y="383.3" width="2" height="50.0" fill="url(#pa)"/>
<rect x="263" y="432.8" width="2" height="27.8" fill="url(#pb)"/>
<rect x="263" y="460.1" width="2" height="61.5" fill="url(#pc)"/>
<rect x="265" y="353.1" width="2" height="30.5" fill="#fffffa"/>
<rect x="265" y="383.1" width="2" height="50.3" fill="url(#pa)"/>
<rect x="265" y="432.9" width="2" height="27.6" fill="url(#pb)"/>
<rect x="265" y="460.0" width="2" height="61.8" fill="url(#pc)"/>
<rect x="267" y="353.0" width="2" height="30.5" fill="#fffffa"/>
<rect x="267" y="383.0" width="2" height="50.5" fill="url(#pa)"/>
<rect x="267" y="433.0" width="2" height="27.4" fill="url(#pb)"/>
<rect x="267" y="460.0" width="2" height="62.1" fill="url(#pc)"/>
<rect x="269" y="353.0" width="2" height="30.5" fill="#fffffa"/>
<rect x="269" y="383.0" width="2" height="50.6" fill="url(#pa)"/>
<rect x="269" y="433.1" width="2" height="27.3" fill="url(#pb)"/>
<rect x="269" y="459.9" width="2" height="62.2" fill="url(#pc)"/>
<rect x="271" y="353.0" width="2" height="30.5" fill="#fffffa"/>
<rect x="271" y="383.0" width="2" height="50.7" fill="url(#pa)"/>
<rect x="271" y="433.2" width="2" height="27.2" fill="url(#pb)"/>
<rect x="271" y="459.8" width="2" height="62.3" fill="url(#pc)"/>
<rect x="273" y="353.0" width="2" height="30.5" fill="#fffffa"/>
<rect x="273" y="383.0" width="2" height="50.7" fill="url(#pa)"/>
<rect x="273" y="433.2" width="2" height="27.0" fill="url(#pb)"/>
<rect x="273" y="459.8" width="2" height="62.5" fill="url(#pc)"/>
<rect x="275" y="353.0" width="2" height="30.5" fill="#fffffa"/>
<rect x="275" y="383.0" width="2" height="50.8" fill="url(#pa)"/>
<rect x="275" y="433.3" width="2" height="26.9" fill="url(#pb)"/>
<rect x="275" y="459.7" width="2" height="62.6" fill="url(#pc)"/>
<rect x="277" y="353.0" width="2" height="30.5" fill="#fffffa"/>
<rect x="277" y="383.0" width="2" height="50.9" fill="url(#pa)"/>
<rect x="277" y="433.4" width="2" height="26.8" fill="url(#pb)"/>
<rect x="277" y="459.6" width="2" height="62.7" fill="url(#pc)"/>
<rect x="279" y="353.0" width="2" height="30.5" fill="#fffffa"/>
<rect x="279" y="383.0" width="2" height="50.9" fill="url(#pa)"/>
<rect x="279" y="433.4" width="2" height="26.6" fill="url(#pb)"/>
<rect x="279" y="459.6" width="2" height="62.9" fill="url(#pc)"/>
<rect x="281" y="353.0" width="2" height="30.5" fill="#fffffa"/>
<rect x="281" y="383.0" width="2" height="51.0" fill="url(#pa)"/>
<rect x="281" y="433.5" width="2" height="26.5" fill="url(#pb)"/>
<rect x="281" y="459.5" width="2" height="63.0" fill="url(#pc)"/>
<rect x="283" y="353.0" width="2" height="30.5" fill="#fffffa"/>
<rect x="283" y="383.0" width="2" height="51.1" fill="url(#pa)"/>
<rect x="283" y="433.6" width="2" height="26.4" fill="url(#pb)"/>
<rect x="283" y="459.4" width="2" height="63.1" fill="url(#pc)"/>
<rect x="285" y="353.0" width="2" height="30.5" fill="#fffffa"/>
<rect x="285" y="383.0" width="2" height="51.1" fill="url(#pa)"/>
<rect x="285" y="433.6" width="2" height="26.2" fill="url(#pb)"/>
<rect x="285" y="459.4" width="2" height="63.3" fill="url(#pc)"/>
<rect x="287" y="353.0" width="2" height="30.5" fill="#fffffa"/>
<rect x="287" y="383.0" width="2" height="51.2" fill="url(#pa)"/>
<rect x="287" y="433.7" width="2" height="26.1" fill="url(#pb)"/>
<rect x="287" y="459.3" width="2" height="63.4" fill="url(#pc)"/>
<rect x="289" y="353.0" width="2" height="30.5" fill="#fffffa"/>
<rect x="289" y="383.0" width="2" height="51.3" fill="url(#pa)"/>
<rect x="289" y="433.8" width="2" height="26.0" fill="url(#pb)"/>
<rect x="289" y="459.2" width="2" height="63.5" fill="url(#pc)"/>
<rect x="291" y="353.0" width="2" height="30.5" fill="#fffffa"/>
<rect x="291" y="383.0" width="2" height="51.3" fill="url(#pa)"/>
<rect x="291" y="433.8" width="2" height="25.8" fill="url(#pb)"/>
<rect x="291" y="459.2" width="2" height="63.7" fill="url(#pc)"/>
<rect x="293" y="353.0" width="2" height="30.5" fill="#fffffa"/>
<rect x="293" y="383.0" width="2" height="51.4" fill="url(#pa)"/>
<rect x="293" y="433.9" width="2" height="25.7" fill="url(#pb)"/>
<rect x="293" y="459.1" width="2" height="63.8" fill="url(#pc)"/>
<rect x="295" y="353.0" width="2" height="30.5" fill="#fffffa"/>
<rect x="295" y="383.0" width="2" height="51.5" fill="url(#pa)"/>
<rect x="295" y="434.0" width="2" height="25.6" fill="url(#pb)"/>
<rect x="295" y="459.0" width="2" height="63.9" fill="url(#pc)"/>
<rect x="297" y="353.0" width="2" height="30.5" fill="#fffffa"/>
<rect x="297" y="383.0" width="2" height="51.5" fill="url(#pa)"/>
<rect x="297" y="434.0" width="2" height="25.6" fill="url(#pb)"/>
<rect x="297" y="459.1" width="2" height="63.9" fill="url(#pc)"/>
<rect x="299" y="352.9" width="2" height="30.5" fill="#fffffa"/>
<rect x="299" y="382.9" width="2" height="51.7" fill="url(#pa)"/>
<rect x="299" y="434.1" width="2" height="25.7" fill="url(#pb)"/>
<rect x="299" y="459.3" width="2" height="63.9" fill="url(#pc)"/>
<rect x="301" y="352.9" width="2" height="30.5" fill="#fffffa"/>
<rect x="301" y="382.9" width="2" height="51.8" fill="url(#pa)"/>
<rect x="301" y="434.1" width="2" height="25.9" fill="url(#pb)"/>
<rect x="301" y="459.5" width="2" height="63.8" fill="url(#pc)"/>
<rect x="303" y="352.8" width="2" height="30.5" fill="#fffffa"/>
<rect x="303" y="382.8" width="2" height="51.8" fill="url(#pa)"/>
<rect x="303" y="434.2" width="2" height="26.0" fill="url(#pb)"/>
<rect x="303" y="459.7" width="2" height="63.6" fill="url(#pc)"/>
<rect x="305" y="352.8" width="2" height="30.5" fill="#fffffa"/>
<rect x="305" y="382.8" width="2" height="52.0" fill="url(#pa)"/>
<rect x="305" y="434.2" width="2" height="26.2" fill="url(#pb)"/>
<rect x="305" y="459.9" width="2" height="63.6" fill="url(#pc)"/>
<rect x="307" y="352.7" width="2" height="30.5" fill="#fffffa"/>
<rect x="307" y="382.7" width="2" height="52.0" fill="url(#pa)"/>
<rect x="307" y="434.3" width="2" height="26.3" fill="url(#pb)"/>
<rect x="307" y="460.1" width="2" height="63.4" fill="url(#pc)"/>
<rect x="309" y="352.7" width="2" height="30.5" fill="#fffffa"/>
<rect x="309" y="382.7" width="2" height="52.2" fill="url(#pa)"/>
<rect x="309" y="434.3" width="2" height="26.5" fill="url(#pb)"/>
<rect x="309" y="460.3" width="2" height="63.4" fill="url(#pc)"/>
<rect x="311" y="352.6" width="2" height="30.5" fill="#fffffa"/>
<rect x="311" y="382.6" width="2" height="52.2" fill="url(#pa)"/>
<rect x="311" y="434.4" width="2" height="26.6" fill="url(#pb)"/>
<rect x="311" y="460.5" width="2" height="63.2" fill="url(#pc)"/>
<rect x="313" y="352.6" width="2" height="30.5" fill="#fffffa"/>
<rect x="313" y="382.6" width="2" height="52.3" fill="url(#pa)"/>
<rect x="313" y="434.4" width="2" height="26.8" fill="url(#pb)"/>
<rect x="313" y="460.7" width="2" height="63.1" fill="url(#pc)"/>
<rect x="315" y="352.5" width="2" height="30.5" fill="#fffffa"/>
<rect x="315" y="382.5" width="2" height="52.5" fill="url(#pa)"/>
<rect x="315" y="434.5" width="2" height="26.9" fill="url(#pb)"/>
<rect x="315" y="460.9" width="2" height="63.1" fill="url(#pc)"/>
<rect x="317" y="352.5" width="2" height="30.5" fill="#fffffa"/>
<rect x="317" y="382.5" width="2" height="52.5" fill="url(#pa)"/>
<rect x="317" y="434.5" width="2" height="27.1" fill="url(#pb)"/>
<rect x="317" y="461.1" width="2" height="62.9" fill="url(#pc)"/>
<rect x="319" y="352.4" width="2" height="30.5" fill="#fffffa"/>
<rect x="319" y="382.4" width="2" height="52.7" fill="url(#pa)"/>
<rect x="319" y="434.6" width="2" height="27.2" fill="url(#pb)"/>
<rect x="319" y="461.3" width="2" height="62.9" fill="url(#pc)"/>
<rect x="321" y="352.4" width="2" height="30.5" fill="#fffffa"/>
<rect x="321" y="382.4" width="2" height="52.8" fill="url(#pa)"/>
<rect x="321" y="434.6" width="2" height="27.4" fill="url(#pb)"/>
<rect x="321" y="461.5" width="2" height="62.8" fill="url(#pc)"/>
<rect x="323" y="352.3" width="2" height="30.5" fill="#fffffa"/>
<rect x="323" y="382.3" width="2" height="52.8" fill="url(#pa)"/>
<rect x="323" y="434.7" width="2" height="27.5" fill="url(#pb)"/>
<rect x="323" y="461.7" width="2" height="62.6" fill="url(#pc)"/>
<rect x="325" y="352.3" width="2" height="30.5" fill="#fffffa"/>
<rect x="325" y="382.3" width="2" height="53.0" fill="url(#pa)"/>
<rect x="325" y="434.7" width="2" height="27.7" fill="url(#pb)"/>
<rect x="325" y="461.9" width="2" height="62.6" fill="url(#pc)"/>
<rect x="327" y="352.2" width="2" height="30.5" fill="#fffffa"/>
<rect x="327" y="382.2" width="2" height="53.0" fill="url(#pa)"/>
<rect x="327" y="434.8" width="2" height="27.8" fill="url(#pb)"/>
<rect x="327" y="462.1" width="2" height="62.4" fill="url(#pc)"/>
<rect x="329" y="352.2" width="2" height="30.5" fill="#fffffa"/>
<rect x="329" y="382.2" width="2" height="53.2" fill="url(#pa)"/>
<rect x="329" y="434.8" width="2" height="28.0" fill="url(#pb)"/>
<rect x="329" y="462.3" width="2" height="62.4" fill="url(#pc)"/>
<rect x="331" y="352.1" width="2" height="30.5" fill="#fffffa"/>
<rect x="331" y="382.1" width="2" height="53.2" fill="url(#pa)"/>
<rect x="331" y="434.9" width="2" height="28.1" fill="url(#pb)"/>
<rect x="331" y="462.5" width="2" height="62.2" fill="url(#pc)"/>
<rect x="333" y="352.1" width="2" height="30.5" fill="#fffffa"/>
<rect x="333" y="382.1" width="2" height="53.3" fill="url(#pa)"/>
<rect x="333" y="434.9" width="2" height="28.3" fill="url(#pb)"/>
<rect x="333" y="462.7" width="2" height="62.1" fill="url(#pc)"/>
<rect x="335" y="352.0" width="2" height="30.5" fill="#fffffa"/>
<rect x="335" y="382.0" width="2" height="53.5" fill="url(#pa)"/>
<rect x="335" y="435.0" width="2" height="28.4" fill="url(#pb)"/>
<rect x="335" y="462.9" width="2" height="62.1" fill="url(#pc)"/>
<rect x="337" y="352.0" width="2" height="30.5" fill="#fffffa"/>
<rect x="337" y="382.0" width="2" height="53.5" fill="url(#pa)"/>
<rect x="337" y="435.0" width="2" height="28.6" fill="url(#pb)"/>
<rect x="337" y="463.1" width="2" height="62.0" fill="url(#pc)"/>
<rect x="339" y="351.9" width="2" height="30.5" fill="#fffffa"/>
<rect x="339" y="381.9" width="2" height="53.6" fill="url(#pa)"/>
<rect x="339" y="435.1" width="2" height="28.8" fill="url(#pb)"/>
<rect x="339" y="463.4" width="2" height="62.0" fill="url(#pc)"/>
<rect x="341" y="351.9" width="2" height="30.5" fill="#fffffa"/>
<rect x="341" y="381.9" width="2" height="53.7" fill="url(#pa)"/>
<rect x="341" y="435.1" width="2" height="29.1" fill="url(#pb)"/>
<rect x="341" y="463.7" width="2" height="62.0" fill="url(#pc)"/>
<rect x="343" y="351.8" width="2" height="30.5" fill="#fffffa"/>
<rect x="343" y="381.8" width="2" height="53.8" fill="url(#pa)"/>
<rect x="343" y="435.2" width="2" height="29.3" fill="url(#pb)"/>
<rect x="343" y="463.9" width="2" height="62.0" fill="url(#pc)"/>
<rect x="345" y="351.8" width="2" height="30.5" fill="#fffffa"/>
<rect x="345" y="381.8" width="2" height="53.9" fill="url(#pa)"/>
<rect x="345" y="435.2" width="2" height="29.5" fill="url(#pb)"/>
<rect x="345" y="464.2" width="2" height="62.0" fill="url(#pc)"/>
<rect x="347" y="351.8" width="2" height="30.5" fill="#fffffa"/>
<rect x="347" y="381.8" width="2" height="54.0" fill="url(#pa)"/>
<rect x="347" y="435.2" width="2" height="29.7" fill="url(#pb)"/>
<rect x="347" y="464.5" width="2" height="62.0" fill="url(#pc)"/>
<rect x="349" y="351.7" width="2" height="30.5" fill="#fffffa"/>
<rect x="349" y="381.7" width="2" height="54.1" fill="url(#pa)"/>
<rect x="349" y="435.3" width="2" height="29.9" fill="url(#pb)"/>
<rect x="349" y="464.7" width="2" height="62.0" fill="url(#pc)"/>
<rect x="351" y="351.7" width="2" height="30.5" fill="#fffffa"/>
<rect x="351" y="381.7" width="2" height="54.2" fill="url(#pa)"/>
<rect x="351" y="435.3" width="2" height="30.2" fill="url(#pb)"/>
<rect x="351" y="465.0" width="2" height="62.0" fill="url(#pc)"/>
<rect x="353" y="351.6" width="2" height="30.5" fill="#fffffa"/>
<rect x="353" y="381.6" width="2" height="54.3" fill="url(#pa)"/>
<rect x="353" y="435.4" width="2" height="30.4" fill="url(#pb)"/>
<rect x="353" y="465.3" width="2" height="62.0" fill="url(#pc)"/>
<rect x="355" y="351.6" width="2" height="30.5" fill="#fffffa"/>
<rect x="355" y="381.6" width="2" height="54.3" fill="url(#pa)"/>
<rect x="355" y="435.4" width="2" height="30.6" fill="url(#pb)"/>
<rect x="355" y="465.5" width="2" height="62.0" fill="url(#pc)"/>
<rect x="357" y="351.5" width="2" height="30.5" fill="#fffffa"/>
<rect x="357" y="381.5" width="2" height="54.4" fill="url(#pa)"/>
<rect x="357" y="435.5" width="2" height="30.8" fill="url(#pb)"/>
<rect x="357" y="465.8" width="2" height="62.0" fill="url(#pc)"/>
<rect x="359" y="351.5" width="2" height="30.5" fill="#fffffa"/>
<rect x="359" y="381.5" width="2" height="54.5" fill="url(#pa)"/>
<rect x="359" y="435.5" width="2" height="31.1" fill="url(#pb)"/>
<rect x="359" y="466.1" width="2" height="62.0" fill="url(#pc)"/>
<rect x="361" y="351.4" width="2" height="30.5" fill="#fffffa"/>
<rect x="361" y="381.4" width="2" height="54.6" fill="url(#pa)"/>
<rect x="361" y="435.6" width="2" height="31.3" fill="url(#pb)"/>
<rect x="361" y="466.3" width="2" height="62.0" fill="url(#pc)"/>
<rect x="363" y="351.4" width="2" height="30.5" fill="#fffffa"/>
<rect x="363" y="381.4" width="2" height="54.7" fill="url(#pa)"/>
<rect x="363" y="435.6" width="2" height="31.5" fill="url(#pb)"/>
<rect x="363" y="466.6" width="2" height="62.0" fill="url(#pc)"/>
<rect x="365" y="351.4" width="2" height="30.5" fill="#fffffa"/>
<rect x="365" y="381.4" width="2" height="54.8" fill="url(#pa)"/>
<rect x="365" y="435.6" width="2" height="31.7" fill="url(#pb)"/>
<rect x="365" y="466.9" width="2" height="62.0" fill="url(#pc)"/>
<rect x="367" y="351.3" width="2" height="30.5" fill="#fffffa"/>
<rect x="367" y="381.3" width="2" height="54.9" fill="url(#pa)"/>
<rect x="367" y="435.7" width="2" height="31.9" fill="url(#pb)"/>
<rect x="367" y="467.1" width="2" height="62.0" fill="url(#pc)"/>
<rect x="369" y="351.3" width="2" height="30.5" fill="#fffffa"/>
<rect x="369" y="381.3" width="2" height="55.0" fill="url(#pa)"/>
<rect x="369" y="435.7" width="2" height="32.2" fill="url(#pb)"/>
<rect x="369" y="467.4" width="2" height="62.0" fill="url(#pc)"/>
<rect x="371" y="351.2" width="2" height="30.5" fill="#fffffa"/>
<rect x="371" y="381.2" width="2" height="55.1" fill="url(#pa)"/>
<rect x="371" y="435.8" width="2" height="32.4" fill="url(#pb)"/>
<rect x="371" y="467.7" width="2" height="62.0" fill="url(#pc)"/>
<rect x="373" y="351.2" width="2" height="30.5" fill="#fffffa"/>
<rect x="373" y="381.2" width="2" height="55.1" fill="url(#pa)"/>
<rect x="373" y="435.8" width="2" height="32.6" fill="url(#pb)"/>
<rect x="373" y="467.9" width="2" height="62.0" fill="url(#pc)"/>
<rect x="375" y="351.1" width="2" height="30.5" fill="#fffffa"/>
<rect x="375" y="381.1" width="2" height="55.2" fill="url(#pa)"/>
<rect x="375" y="435.9" width="2" height="32.8" fill="url(#pb)"/>
<rect x="375" y="468.2" width="2" height="62.0" fill="url(#pc)"/>
<rect x="377" y="351.1" width="2" height="30.5" fill="#fffffa"/>
<rect x="377" y="381.1" width="2" height="55.3" fill="url(#pa)"/>
<rect x="377" y="435.9" width="2" height="33.1" fill="url(#pb)"/>
<rect x="377" y="468.5" width="2" height="62.0" fill="url(#pc)"/>
<rect x="379" y="351.0" width="2" height="30.5" fill="#fffffa"/>
<rect x="379" y="381.0" width="2" height="55.4" fill="url(#pa)"/>
<rect x="379" y="436.0" width="2" height="33.3" fill="url(#pb)"/>
<rect x="379" y="468.7" width="2" height="62.0" fill="url(#pc)"/>
<rect x="381" y="351.0" width="2" height="30.5" fill="#fffffa"/>
<rect x="381" y="381.0" width="2" height="55.5" fill="url(#pa)"/>
<rect x="381" y="436.0" width="2" height="33.5" fill="url(#pb)"/>
<rect x="381" y="469.0" width="2" height="62.0" fill="url(#pc)"/>
<rect x="383" y="351.0" width="2" height="30.5" fill="#fffffa"/>
<rect x="383" y="381.0" width="2" height="55.5" fill="url(#pa)"/>
<rect x="383" y="436.0" width="2" height="33.6" fill="url(#pb)"/>
<rect x="383" y="469.1" width="2" height="62.0" fill="url(#pc)"/>
<rect x="385" y="351.0" width="2" height="30.5" fill="#fffffa"/>
<rect x="385" y="381.0" width="2" height="55.6" fill="url(#pa)"/>
<rect x="385" y="436.1" width="2" height="33.7" fill="url(#pb)"/>
<rect x="385" y="469.2" width="2" height="62.0" fill="url(#pc)"/>
<rect x="387" y="351.0" width="2" height="30.5" fill="#fffffa"/>
<rect x="387" y="381.0" width="2" height="55.6" fill="url(#pa)"/>
<rect x="387" y="436.1" width="2" height="33.8" fill="url(#pb)"/>
<rect x="387" y="469.3" width="2" height="62.0" fill="url(#pc)"/>
<rect x="389" y="351.0" width="2" height="30.5" fill="#fffffa"/>
<rect x="389" y="381.0" width="2" height="55.6" fill="url(#pa)"/>
<rect x="389" y="436.1" width="2" height="33.8" fill="url(#pb)"/>
<rect x="389" y="469.5" width="2" height="62.0" fill="url(#pc)"/>
<rect x="391" y="351.0" width="2" height="30.5" fill="#fffffa"/>
<rect x="391" y="381.0" width="2" height="55.6" fill="url(#pa)"/>
<rect x="391" y="436.1" width="2" height="33.9" fill="url(#pb)"/>
<rect x="391" y="469.6" width="2" height="62.0" fill="url(#pc)"/>
<rect x="393" y="351.0" width="2" height="30.5" fill="#fffffa"/>
<rect x="393" y="381.0" width="2" height="55.7" fill="url(#pa)"/>
<rect x="393" y="436.2" width="2" height="34.0" fill="url(#pb)"/>
<rect x="393" y="469.7" width="2" height="62.0" fill="url(#pc)"/>
<rect x="395" y="351.0" width="2" height="30.5" fill="#fffffa"/>
<rect x="395" y="381.0" width="2" height="55.7" fill="url(#pa)"/>
<rect x="395" y="436.2" width="2" height="34.1" fill="url(#pb)"/>
<rect x="395" y="469.8" width="2" height="62.0" fill="url(#pc)"/>
<rect x="397" y="351.0" width="2" height="30.5" fill="#fffffa"/>
<rect x="397" y="381.0" width="2" height="55.7" fill="url(#pa)"/>
<rect x="397" y="436.2" width="2" height="34.2" fill="url(#pb)"/>
<rect x="397" y="469.9" width="2" height="62.0" fill="url(#pc)"/>
<rect x="399" y="351.0" width="2" height="30.5" fill="#fffffa"/>
<rect x="399" y="381.0" width="2" height="55.8" fill="url(#pa)"/>
<rect x="399" y="436.3" width="2" height="34.3" fill="url(#pb)"/>
<rect x="399" y="470.0" width="2" height="62.0" fill="url(#pc)"/>
<rect x="401" y="351.0" width="2" height="30.5" fill="#fffffa"/>
<rect x="401" y="381.0" width="2" height="55.8" fill="url(#pa)"/>
<rect x="401" y="436.3" width="2" height="34.4" fill="url(#pb)"/>
<rect x="401" y="470.1" width="2" height="62.0" fill="url(#pc)"/>
<rect x="403" y="351.0" width="2" height="30.5" fill="#fffffa"/>
<rect x="403" y="381.0" width="2" height="55.8" fill="url(#pa)"/>
<rect x="403" y="436.3" width="2" height="34.4" fill="url(#pb)"/>
<rect x="403" y="470.3" width="2" height="62.0" fill="url(#pc)"/>
<rect x="405" y="351.0" width="2" height="30.5" fill="#fffffa"/>
<rect x="405" y="381.0" width="2" height="55.8" fill="url(#pa)"/>
<rect x="405" y="436.3" width="2" height="34.5" fill="url(#pb)"/>
<rect x="405" y="470.4" width="2" height="62.0" fill="url(#pc)"/>
<rect x="407" y="351.0" width="2" height="30.5" fill="#fffffa"/>
<rect x="407" y="381.0" width="2" height="55.9" fill="url(#pa)"/>
<rect x="407" y="436.4" width="2" height="34.6" fill="url(#pb)"/>
<rect x="407" y="470.5" width="2" height="62.0" fill="url(#pc)"/>
<rect x="409" y="351.0" width="2" height="30.5" fill="#fffffa"/>
<rect x="409" y="381.0" width="2" height="55.9" fill="url(#pa)"/>
<rect x="409" y="436.4" width="2" height="34.7" fill="url(#pb)"/>
<rect x="409" y="470.6" width="2" height="62.0" fill="url(#pc)"/>
<rect x="411" y="351.0" width="2" height="30.5" fill="#fffffa"/>
<rect x="411" y="381.0" width="2" height="55.9" fill="url(#pa)"/>
<rect x="411" y="436.4" width="2" height="34.8" fill="url(#pb)"/>
<rect x="411" y="470.7" width="2" height="62.0" fill="url(#pc)"/>
<rect x="413" y="351.0" width="2" height="30.5" fill="#fffffa"/>
<rect x="413" y="381.0" width="2" height="56.0" fill="url(#pa)"/>
<rect x="413" y="436.5" width="2" height="34.9" fill="url(#pb)"/>
<rect x="413" y="470.8" width="2" height="62.0" fill="url(#pc)"/>
<rect x="415" y="351.0" width="2" height="30.5" fill="#fffffa"/>
<rect x="415" y="381.0" width="2" height="56.0" fill="url(#pa)"/>
<rect x="415" y="436.5" width="2" height="35.0" fill="url(#pb)"/>
<rect x="415" y="470.9" width="2" height="62.0" fill="url(#pc)"/>
<rect x="417" y="351.0" width="2" height="30.5" fill="#fffffa"/>
<rect x="417" y="381.0" width="2" height="56.0" fill="url(#pa)"/>
<rect x="417" y="436.5" width="2" height="35.0" fill="url(#pb)"/>
<rect x="417" y="471.1" width="2" height="62.0" fill="url(#pc)"/>
<rect x="419" y="351.0" width="2" height="30.5" fill="#fffffa"/>
<rect x="419" y="381.0" width="2" height="56.0" fill="url(#pa)"/>
<rect x="419" y="436.5" width="2" height="35.1" fill="url(#pb)"/>
<rect x="419" y="471.2" width="2" height="62.0" fill="url(#pc)"/>
<rect x="421" y="351.0" width="2" height="30.5" fill="#fffffa"/>
<rect x="421" y="381.0" width="2" height="56.1" fill="url(#pa)"/>
<rect x="421" y="436.6" width="2" height="35.2" fill="url(#pb)"/>
<rect x="421" y="471.3" width="2" height="62.0" fill="url(#pc)"/>
<rect x="423" y="351.0" width="2" height="30.5" fill="#fffffa"/>
<rect x="423" y="381.0" width="2" height="56.1" fill="url(#pa)"/>
<rect x="423" y="436.6" width="2" height="35.3" fill="url(#pb)"/>
<rect x="423" y="471.4" width="2" height="62.0" fill="url(#pc)"/>
<rect x="425" y="351.0" width="2" height="30.5" fill="#fffffa"/>
<rect x="425" y="381.0" width="2" height="56.1" fill="url(#pa)"/>
<rect x="425" y="436.6" width="2" height="35.4" fill="url(#pb)"/>
<rect x="425" y="471.5" width="2" height="62.0" fill="url(#pc)"/>
<rect x="427" y="351.0" width="2" height="30.5" fill="#fffffa"/>
<rect x="427" y="381.0" width="2" height="56.2" fill="url(#pa)"/>
<rect x="427" y="436.7" width="2" height="35.5" fill="url(#pb)"/>
<rect x="427" y="471.6" width="2" height="62.0" fill="url(#pc)"/>
<rect x="429" y="351.0" width="2" height="30.5" fill="#fffffa"/>
<rect x="429" y="381.0" width="2" height="56.2" fill="url(#pa)"/>
<rect x="429" y="436.7" width="2" height="35.6" fill="url(#pb)"/>
<rect x="429" y="471.7" width="2" height="62.0" fill="url(#pc)"/>
<rect x="431" y="351.0" width="2" height="30.5" fill="#fffffa"/>
<rect x="431" y="381.0" width="2" height="56.2" fill="url(#pa)"/>
<rect x="431" y="436.7" width="2" height="35.6" fill="url(#pb)"/>
<rect x="431" y="471.9" width="2" height="62.0" fill="url(#pc)"/>
<rect x="433" y="351.0" width="2" height="30.5" fill="#fffffa"/>
<rect x="433" y="381.0" width="2" height="56.2" fill="url(#pa)"/>
<rect x="433" y="436.7" width="2" height="35.7" fill="url(#pb)"/>
<rect x="433" y="472.0" width="2" height="62.0" fill="url(#pc)"/>
<rect x="435" y="351.0" width="2" height="30.5" fill="#fffffa"/>
<rect x="435" y="381.0" width="2" height="56.3" fill="url(#pa)"/>
<rect x="435" y="436.8" width="2" height="35.8" fill="url(#pb)"/>
<rect x="435" y="472.1" width="2" height="62.0" fill="url(#pc)"/>
<rect x="437" y="351.0" width="2" height="30.5" fill="#fffffa"/>
<rect x="437" y="381.0" width="2" height="56.3" fill="url(#pa)"/>
<rect x="437" y="436.8" width="2" height="35.9" fill="url(#pb)"/>
<rect x="437" y="472.2" width="2" height="62.0" fill="url(#pc)"/>
<rect x="439" y="351.0" width="2" height="30.5" fill="#fffffa"/>
<rect x="439" y="381.0" width="2" height="56.3" fill="url(#pa)"/>
<rect x="439" y="436.8" width="2" height="36.0" fill="url(#pb)"/>
<rect x="439" y="472.3" width="2" height="62.0" fill="url(#pc)"/>
<rect x="441" y="351.0" width="2" height="30.5" fill="#fffffa"/>
<rect x="441" y="381.0" width="2" height="56.4" fill="url(#pa)"/>
<rect x="441" y="436.9" width="2" height="36.1" fill="url(#pb)"/>
<rect x="441" y="472.4" width="2" height="62.0" fill="url(#pc)"/>
<rect x="443" y="351.0" width="2" height="30.5" fill="#fffffa"/>
<rect x="443" y="381.0" width="2" height="56.4" fill="url(#pa)"/>
<rect x="443" y="436.9" width="2" height="36.2" fill="url(#pb)"/>
<rect x="443" y="472.5" width="2" height="62.0" fill="url(#pc)"/>
<rect x="445" y="351.0" width="2" height="30.5" fill="#fffffa"/>
<rect x="445" y="381.0" width="2" height="56.4" fill="url(#pa)"/>
<rect x="445" y="436.9" width="2" height="36.2" fill="url(#pb)"/>
<rect x="445" y="472.7" width="2" height="62.0" fill="url(#pc)"/>
<rect x="447" y="351.0" width="2" height="30.5" fill="#fffffa"/>
<rect x="447" y="381.0" width="2" height="56.4" fill="url(#pa)"/>
<rect x="447" y="436.9" width="2" height="36.3" fill="url(#pb)"/>
<rect x="447" y="472.8" width="2" height="62.0" fill="url(#pc)"/>
<rect x="449" y="351.0" width="2" height="30.5" fill="#fffffa"/>
<rect x="449" y="381.0" width="2" height="56.5" fill="url(#pa)"/>
<rect x="449" y="437.0" width="2" height="36.4" fill="url(#pb)"/>
<rect x="449" y="472.9" width="2" height="62.0" fill="url(#pc)"/>
<rect x="451" y="351.0" width="2" height="30.5" fill="#fffffa"/>
<rect x="451" y="381.0" width="2" height="56.5" fill="url(#pa)"/>
<rect x="451" y="437.0" width="2" height="36.5" fill="url(#pb)"/>
<rect x="451" y="473.0" width="2" height="62.0" fill="url(#pc)"/>
<rect x="453" y="350.8" width="2" height="30.5" fill="#fffffa"/>
<rect x="453" y="380.8" width="2" height="56.5" fill="url(#pa)"/>
<rect x="453" y="436.8" width="2" height="36.5" fill="url(#pb)"/>
<rect x="453" y="472.8" width="2" height="62.6" fill="url(#pc)"/>
<rect x="455" y="350.7" width="2" height="30.5" fill="#fffffa"/>
<rect x="455" y="380.7" width="2" height="56.5" fill="url(#pa)"/>
<rect x="455" y="436.7" width="2" height="36.5" fill="url(#pb)"/>
<rect x="455" y="472.7" width="2" height="63.3" fill="url(#pc)"/>
<rect x="457" y="350.5" width="2" height="30.5" fill="#fffffa"/>
<rect x="457" y="380.5" width="2" height="56.5" fill="url(#pa)"/>
<rect x="457" y="436.5" width="2" height="36.5" fill="url(#pb)"/>
<rect x="457" y="472.5" width="2" height="63.9" fill="url(#pc)"/>
<rect x="459" y="350.4" width="2" height="30.5" fill="#fffffa"/>
<rect x="459" y="380.4" width="2" height="56.5" fill="url(#pa)"/>
<rect x="459" y="436.4" width="2" height="36.5" fill="url(#pb)"/>
<rect x="459" y="472.4" width="2" height="64.6" fill="url(#pc)"/>
<rect x="461" y="350.2" width="2" height="30.5" fill="#fffffa"/>
<rect x="461" y="380.2" width="2" height="56.5" fill="url(#pa)"/>
<rect x="461" y="436.2" width="2" height="36.5" fill="url(#pb)"/>
<rect x="461" y="472.2" width="2" height="65.2" fill="url(#pc)"/>
<rect x="463" y="350.0" width="2" height="30.5" fill="#fffffa"/>
<rect x="463" y="380.0" width="2" height="56.5" fill="url(#pa)"/>
<rect x="463" y="436.0" width="2" height="36.5" fill="url(#pb)"/>
<rect x="463" y="472.0" width="2" height="65.8" fill="url(#pc)"/>
<rect x="465" y="349.9" width="2" height="30.5" fill="#fffffa"/>
<rect x="465" y="379.9" width="2" height="56.5" fill="url(#pa)"/>
<rect x="465" y="435.9" width="2" height="36.5" fill="url(#pb)"/>
<rect x="465" y="471.9" width="2" height="66.5" fill="url(#pc)"/>
<rect x="467" y="349.7" width="2" height="30.5" fill="#fffffa"/>
<rect x="467" y="379.7" width="2" height="56.5" fill="url(#pa)"/>
<rect x="467" y="435.7" width="2" height="36.5" fill="url(#pb)"/>
<rect x="467" y="471.7" width="2" height="67.1" fill="url(#pc)"/>
<rect x="469" y="349.6" width="2" height="30.5" fill="#fffffa"/>
<rect x="469" y="379.6" width="2" height="56.5" fill="url(#pa)"/>
<rect x="469" y="435.6" width="2" height="36.5" fill="url(#pb)"/>
<rect x="469" y="471.6" width="2" height="67.8" fill="url(#pc)"/>
<rect x="471" y="349.4" width="2" height="30.5" fill="#fffffa"/>
<rect x="471" y="379.4" width="2" height="56.5" fill="url(#pa)"/>
<rect x="471" y="435.4" width="2" height="36.5" fill="url(#pb)"/>
<rect x="471" y="471.4" width="2" height="68.4" fill="url(#pc)"/>
<rect x="473" y="349.2" width="2" height="30.5" fill="#fffffa"/>
<rect x="473" y="379.2" width="2" height="56.5" fill="url(#pa)"/>
<rect x="473" y="435.2" width="2" height="36.5" fill="url(#pb)"/>
<rect x="473" y="471.2" width="2" height="69.0" fill="url(#pc)"/>
<rect x="475" y="349.1" width="2" height="30.5" fill="#fffffa"/>
<rect x="475" y="379.1" width="2" height="56.5" fill="url(#pa)"/>
<rect x="475" y="435.1" width="2" height="36.5" fill="url(#pb)"/>
<rect x="475" y="471.1" width="2" height="69.7" fill="url(#pc)"/>
<rect x="477" y="348.8" width="2" height="30.5" fill="#fffffa"/>
<rect x="477" y="378.8" width="2" height="56.5" fill="url(#pa)"/>
<rect x="477" y="434.8" width="2" height="36.5" fill="url(#pb)"/>
<rect x="477" y="470.8" width="2" height="70.4" fill="url(#pc)"/>
<rect x="479" y="348.4" width="2" height="30.5" fill="#fffffa"/>
<rect x="479" y="378.4" width="2" height="56.5" fill="url(#pa)"/>
<rect x="479" y="434.4" width="2" height="36.5" fill="url(#pb)"/>
<rect x="479" y="470.4" width="2" height="71.2" fill="url(#pc)"/>
<rect x="481" y="348.0" width="2" height="30.5" fill="#fffffa"/>
<rect x="481" y="378.0" width="2" height="56.5" fill="url(#pa)"/>
<rect x="481" y="434.0" width="2" height="36.5" fill="url(#pb)"/>
<rect x="481" y="470.0" width="2" height="72.0" fill="url(#pc)"/>
<rect x="483" y="347.6" width="2" height="30.5" fill="#fffffa"/>
<rect x="483" y="377.6" width="2" height="56.5" fill="url(#pa)"/>
<rect x="483" y="433.6" width="2" height="36.5" fill="url(#pb)"/>
<rect x="483" y="469.6" width="2" height="72.8" fill="url(#pc)"/>
<rect x="485" y="347.2" width="2" height="30.5" fill="#fffffa"/>
<rect x="485" y="377.2" width="2" height="56.5" fill="url(#pa)"/>
<rect x="485" y="433.2" width="2" height="36.5" fill="url(#pb)"/>
<rect x="485" y="469.2" width="2" height="73.6" fill="url(#pc)"/>
<rect x="487" y="346.8" width="2" height="30.5" fill="#fffffa"/>
<rect x="487" y="376.8" width="2" height="56.5" fill="url(#pa)"/>
<rect x="487" y="432.8" width="2" height="36.5" fill="url(#pb)"/>
<rect x="487" y="468.8" width="2" height="74.4" fill="url(#pc)"/>
<rect x="489" y="346.4" width="2" height="30.5" fill="#fffffa"/>
<rect x="489" y="376.4" width="2" height="56.5" fill="url(#pa)"/>
<rect x="489" y="432.4" width="2" height="36.5" fill="url(#pb)"/>
<rect x="489" y="468.4" width="2" height="75.2" fill="url(#pc)"/>
<rect x="491" y="346.0" width="2" height="30.5" fill="#fffffa"/>
<rect x="491" y="376.0" width="2" height="56.5" fill="url(#pa)"/>
<rect x="491" y="432.0" width="2" height="36.5" fill="url(#pb)"/>
<rect x="491" y="468.0" width="2" height="76.0" fill="url(#pc)"/>
<rect x="493" y="345.6" width="2" height="30.5" fill="#fffffa"/>
<rect x="493" y="375.6" width="2" height="56.5" fill="url(#pa)"/>
<rect x="493" y="431.6" width="2" height="36.5" fill="url(#pb)"/>
<rect x="493" y="467.6" width="2" height="76.8" fill="url(#pc)"/>
<rect x="495" y="345.2" width="2" height="30.5" fill="#fffffa"/>
<rect x="495" y="375.2" width="2" height="56.5" fill="url(#pa)"/>
<rect x="495" y="431.2" width="2" height="36.5" fill="url(#pb)"/>
<rect x="495" y="467.2" width="2" height="77.6" fill="url(#pc)"/>
<rect x="497" y="344.8" width="2" height="30.5" fill="#fffffa"/>
<rect x="497" y="374.8" width="2" height="56.7" fill="url(#pa)"/>
<rect x="497" y="431.0" width="2" height="36.5" fill="url(#pb)"/>
<rect x="497" y="467.0" width="2" height="78.1" fill="url(#pc)"/>
<rect x="499" y="344.4" width="2" height="30.5" fill="#fffffa"/>
<rect x="499" y="374.4" width="2" height="57.1" fill="url(#pa)"/>
<rect x="499" y="431.0" width="2" height="36.5" fill="url(#pb)"/>
<rect x="499" y="467.0" width="2" height="78.5" fill="url(#pc)"/>
<rect x="501" y="344.0" width="2" height="30.5" fill="#fffffa"/>
<rect x="501" y="374.0" width="2" height="57.5" fill="url(#pa)"/>
<rect x="501" y="431.0" width="2" height="36.5" fill="url(#pb)"/>
<rect x="501" y="467.0" width="2" height="78.8" fill="url(#pc)"/>
<rect x="503" y="343.6" width="2" height="30.5" fill="#fffffa"/>
<rect x="503" y="373.6" width="2" height="57.9" fill="url(#pa)"/>
<rect x="503" y="431.0" width="2" height="36.5" fill="url(#pb)"/>
<rect x="503" y="467.0" width="2" height="79.0" fill="url(#pc)"/>
<rect x="505" y="343.2" width="2" height="30.5" fill="#fffffa"/>
<rect x="505" y="373.2" width="2" height="58.3" fill="url(#pa)"/>
<rect x="505" y="431.0" width="2" height="36.5" fill="url(#pb)"/>
<rect x="505" y="467.0" width="2" height="79.4" fill="url(#pc)"/>
<rect x="507" y="342.8" width="2" height="30.5" fill="#fffffa"/>
<rect x="507" y="372.8" width="2" height="58.7" fill="url(#pa)"/>
<rect x="507" y="431.0" width="2" height="36.5" fill="url(#pb)"/>
<rect x="507" y="467.0" width="2" height="79.6" fill="url(#pc)"/>
<rect x="509" y="342.4" width="2" height="30.5" fill="#fffffa"/>
<rect x="509" y="372.4" width="2" height="59.1" fill="url(#pa)"/>
<rect x="509" y="431.0" width="2" height="36.5" fill="url(#pb)"/>
<rect x="509" y="467.0" width="2" height="80.0" fill="url(#pc)"/>
<rect x="511" y="342.0" width="2" height="30.5" fill="#fffffa"/>
<rect x="511" y="372.0" width="2" height="59.5" fill="url(#pa)"/>
<rect x="511" y="431.0" width="2" height="36.5" fill="url(#pb)"/>
<rect x="511" y="467.0" width="2" height="80.2" fill="url(#pc)"/>
<rect x="513" y="341.6" width="2" height="30.5" fill="#fffffa"/>
<rect x="513" y="371.6" width="2" height="59.9" fill="url(#pa)"/>
<rect x="513" y="431.0" width="2" height="36.5" fill="url(#pb)"/>
<rect x="513" y="467.0" width="2" height="80.5" fill="url(#pc)"/>
<rect x="515" y="341.2" width="2" height="30.5" fill="#fffffa"/>
<rect x="515" y="371.2" width="2" height="60.3" fill="url(#pa)"/>
<rect x="515" y="431.0" width="2" height="36.5" fill="url(#pb)"/>
<rect x="515" y="467.0" width="2" height="80.9" fill="url(#pc)"/>
<rect x="517" y="341.0" width="2" height="30.5" fill="#fffffa"/>
<rect x="517" y="371.0" width="2" height="60.6" fill="url(#pa)"/>
<rect x="517" y="431.1" width="2" height="36.5" fill="url(#pb)"/>
<rect x="517" y="467.0" width="2" height="81.0" fill="url(#pc)"/>
<rect x="519" y="341.0" width="2" height="30.5" fill="#fffffa"/>
<rect x="519" y="371.0" width="2" height="60.7" fill="url(#pa)"/>
<rect x="519" y="431.2" width="2" height="36.5" fill="url(#pb)"/>
<rect x="519" y="467.1" width="2" height="81.0" fill="url(#pc)"/>
<rect x="521" y="340.9" width="2" height="30.5" fill="#fffffa"/>
<rect x="521" y="370.9" width="2" height="60.9" fill="url(#pa)"/>
<rect x="521" y="431.3" width="2" height="36.4" fill="url(#pb)"/>
<rect x="521" y="467.2" width="2" height="81.0" fill="url(#pc)"/>
<rect x="523" y="340.9" width="2" height="30.5" fill="#fffffa"/>
<rect x="523" y="370.9" width="2" height="61.0" fill="url(#pa)"/>
<rect x="523" y="431.4" width="2" height="36.4" fill="url(#pb)"/>
<rect x="523" y="467.3" width="2" height="81.0" fill="url(#pc)"/>
<rect x="525" y="340.9" width="2" height="30.5" fill="#fffffa"/>
<rect x="525" y="370.9" width="2" height="61.1" fill="url(#pa)"/>
<rect x="525" y="431.5" width="2" height="36.4" fill="url(#pb)"/>
<rect x="525" y="467.4" width="2" height="81.0" fill="url(#pc)"/>
<rect x="527" y="340.8" width="2" height="30.5" fill="#fffffa"/>
<rect x="527" y="370.8" width="2" height="61.3" fill="url(#pa)"/>
<rect x="527" y="431.6" width="2" height="36.3" fill="url(#pb)"/>
<rect x="527" y="467.5" width="2" height="81.0" fill="url(#pc)"/>
<rect x="529" y="340.8" width="2" height="30.5" fill="#fffffa"/>
<rect x="529" y="370.8" width="2" height="61.4" fill="url(#pa)"/>
<rect x="529" y="431.7" width="2" height="36.3" fill="url(#pb)"/>
<rect x="529" y="467.6" width="2" height="81.0" fill="url(#pc)"/>
<rect x="531" y="340.8" width="2" height="30.5" fill="#fffffa"/>
<rect x="531" y="370.8" width="2" height="61.6" fill="url(#pa)"/>
<rect x="531" y="431.9" width="2" height="36.3" fill="url(#pb)"/>
<rect x="531" y="467.6" width="2" height="81.0" fill="url(#pc)"/>
<rect x="533" y="340.8" width="2" height="30.5" fill="#fffffa"/>
<rect x="533" y="370.8" width="2" height="61.7" fill="url(#pa)"/>
<rect x="533" y="432.0" width="2" height="36.3" fill="url(#pb)"/>
<rect x="533" y="467.7" width="2" height="81.0" fill="url(#pc)"/>
<rect x="535" y="340.7" width="2" height="30.5" fill="#fffffa"/>
<rect x="535" y="370.7" width="2" height="61.9" fill="url(#pa)"/>
<rect x="535" y="432.1" width="2" height="36.2" fill="url(#pb)"/>
<rect x="535" y="467.8" width="2" height="81.0" fill="url(#pc)"/>
<rect x="537" y="340.7" width="2" height="30.5" fill="#fffffa"/>
<rect x="537" y="370.7" width="2" height="62.0" fill="url(#pa)"/>
<rect x="537" y="432.2" width="2" height="36.2" fill="url(#pb)"/>
<rect x="537" y="467.9" width="2" height="81.0" fill="url(#pc)"/>
<rect x="539" y="340.7" width="2" height="30.5" fill="#fffffa"/>
<rect x="539" y="370.7" width="2" height="62.1" fill="url(#pa)"/>
<rect x="539" y="432.3" width="2" height="36.2" fill="url(#pb)"/>
<rect x="539" y="468.0" width="2" height="81.0" fill="url(#pc)"/>
<rect x="541" y="340.6" width="2" height="30.5" fill="#fffffa"/>
<rect x="541" y="370.6" width="2" height="62.3" fill="url(#pa)"/>
<rect x="541" y="432.4" width="2" height="36.1" fill="url(#pb)"/>
<rect x="541" y="468.1" width="2" height="81.0" fill="url(#pc)"/>
<rect x="543" y="340.6" width="2" height="30.5" fill="#fffffa"/>
<rect x="543" y="370.6" width="2" height="62.4" fill="url(#pa)"/>
<rect x="543" y="432.5" width="2" height="36.1" fill="url(#pb)"/>
<rect x="543" y="468.2" width="2" height="81.0" fill="url(#pc)"/>
<rect x="545" y="340.6" width="2" height="30.5" fill="#fffffa"/>
<rect x="545" y="370.6" width="2" height="62.6" fill="url(#pa)"/>
<rect x="545" y="432.7" width="2" height="36.1" fill="url(#pb)"/>
<rect x="545" y="468.2" width="2" height="81.0" fill="url(#pc)"/>
<rect x="547" y="340.6" width="2" height="30.5" fill="#fffffa"/>
<rect x="547" y="370.6" width="2" height="62.7" fill="url(#pa)"/>
<rect x="547" y="432.8" width="2" height="36.1" fill="url(#pb)"/>
<rect x="547" y="468.3" width="2" height="81.0" fill="url(#pc)"/>
<rect x="549" y="340.5" width="2" height="30.5" fill="#fffffa"/>
<rect x="549" y="370.5" width="2" height="62.9" fill="url(#pa)"/>
<rect x="549" y="432.9" width="2" height="36.0" fill="url(#pb)"/>
<rect x="549" y="468.4" width="2" height="81.0" fill="url(#pc)"/>
<rect x="551" y="340.5" width="2" height="30.5" fill="#fffffa"/>
<rect x="551" y="370.5" width="2" height="63.0" fill="url(#pa)"/>
<rect x="551" y="433.0" width="2" height="36.0" fill="url(#pb)"/>
<rect x="551" y="468.5" width="2" height="81.0" fill="url(#pc)"/>
<rect x="553" y="340.5" width="2" height="30.5" fill="#fffffa"/>
<rect x="553" y="370.5" width="2" height="63.1" fill="url(#pa)"/>
<rect x="553" y="433.1" width="2" height="36.0" fill="url(#pb)"/>
<rect x="553" y="468.6" width="2" height="81.0" fill="url(#pc)"/>
<rect x="555" y="340.4" width="2" height="30.5" fill="#fffffa"/>
<rect x="555" y="370.4" width="2" height="63.3" fill="url(#pa)"/>
<rect x="555" y="433.2" width="2" height="35.9" fill="url(#pb)"/>
<rect x="555" y="468.7" width="2" height="81.0" fill="url(#pc)"/>
<rect x="557" y="340.4" width="2" height="30.5" fill="#fffffa"/>
<rect x="557" y="370.4" width="2" height="63.4" fill="url(#pa)"/>
<rect x="557" y="433.3" width="2" height="35.9" fill="url(#pb)"/>
<rect x="557" y="468.8" width="2" height="81.0" fill="url(#pc)"/>
<rect x="559" y="340.4" width="2" height="30.5" fill="#fffffa"/>
<rect x="559" y="370.4" width="2" height="63.6" fill="url(#pa)"/>
<rect x="559" y="433.5" width="2" height="35.9" fill="url(#pb)"/>
<rect x="559" y="468.8" width="2" height="81.0" fill="url(#pc)"/>
<rect x="561" y="340.4" width="2" height="30.5" fill="#fffffa"/>
<rect x="561" y="370.4" width="2" height="63.7" fill="url(#pa)"/>
<rect x="561" y="433.6" width="2" height="35.9" fill="url(#pb)"/>
<rect x="561" y="468.9" width="2" height="81.0" fill="url(#pc)"/>
<rect x="563" y="340.3" width="2" height="30.5" fill="#fffffa"/>
<rect x="563" y="370.3" width="2" height="63.9" fill="url(#pa)"/>
<rect x="563" y="433.7" width="2" height="35.8" fill="url(#pb)"/>
<rect x="563" y="469.0" width="2" height="81.0" fill="url(#pc)"/>
<rect x="565" y="340.3" width="2" height="30.5" fill="#fffffa"/>
<rect x="565" y="370.3" width="2" height="64.0" fill="url(#pa)"/>
<rect x="565" y="433.8" width="2" height="35.8" fill="url(#pb)"/>
<rect x="565" y="469.1" width="2" height="81.0" fill="url(#pc)"/>
<rect x="567" y="340.3" width="2" height="30.5" fill="#fffffa"/>
<rect x="567" y="370.3" width="2" height="64.1" fill="url(#pa)"/>
<rect x="567" y="433.9" width="2" height="35.8" fill="url(#pb)"/>
<rect x="567" y="469.2" width="2" height="81.0" fill="url(#pc)"/>
<rect x="569" y="340.2" width="2" height="30.5" fill="#fffffa"/>
<rect x="569" y="370.2" width="2" height="64.3" fill="url(#pa)"/>
<rect x="569" y="434.0" width="2" height="35.7" fill="url(#pb)"/>
<rect x="569" y="469.3" width="2" height="81.0" fill="url(#pc)"/>
<rect x="571" y="340.2" width="2" height="30.5" fill="#fffffa"/>
<rect x="571" y="370.2" width="2" height="64.4" fill="url(#pa)"/>
<rect x="571" y="434.1" width="2" height="35.7" fill="url(#pb)"/>
<rect x="571" y="469.4" width="2" height="81.0" fill="url(#pc)"/>
<rect x="573" y="340.2" width="2" height="30.5" fill="#fffffa"/>
<rect x="573" y="370.2" width="2" height="64.6" fill="url(#pa)"/>
<rect x="573" y="434.3" width="2" height="35.7" fill="url(#pb)"/>
<rect x="573" y="469.4" width="2" height="81.0" fill="url(#pc)"/>
<rect x="575" y="340.2" width="2" height="30.5" fill="#fffffa"/>
<rect x="575" y="370.2" width="2" height="64.7" fill="url(#pa)"/>
<rect x="575" y="434.4" width="2" height="35.7" fill="url(#pb)"/>
<rect x="575" y="469.5" width="2" height="81.0" fill="url(#pc)"/>
<rect x="577" y="340.1" width="2" height="30.5" fill="#fffffa"/>
<rect x="577" y="370.1" width="2" height="64.9" fill="url(#pa)"/>
<rect x="577" y="434.5" width="2" height="35.6" fill="url(#pb)"/>
<rect x="577" y="469.6" width="2" height="81.0" fill="url(#pc)"/>
<rect x="579" y="340.1" width="2" height="30.5" fill="#fffffa"/>
<rect x="579" y="370.1" width="2" height="65.0" fill="url(#pa)"/>
<rect x="579" y="434.6" width="2" height="35.6" fill="url(#pb)"/>
<rect x="579" y="469.7" width="2" height="81.0" fill="url(#pc)"/>
<rect x="581" y="340.1" width="2" height="30.5" fill="#fffffa"/>
<rect x="581" y="370.1" width="2" height="65.1" fill="url(#pa)"/>
<rect x="581" y="434.7" width="2" height="35.6" fill="url(#pb)"/>
<rect x="581" y="469.8" width="2" height="81.0" fill="url(#pc)"/>
<rect x="583" y="340.0" width="2" height="30.5" fill="#fffffa"/>
<rect x="583" y="370.0" width="2" height="65.3" fill="url(#pa)"/>
<rect x="583" y="434.8" width="2" height="35.5" fill="url(#pb)"/>
<rect x="583" y="469.9" width="2" height="81.0" fill="url(#pc)"/>
<rect x="585" y="340.0" width="2" height="30.5" fill="#fffffa"/>
<rect x="585" y="370.0" width="2" height="65.4" fill="url(#pa)"/>
<rect x="585" y="434.9" width="2" height="35.5" fill="url(#pb)"/>
<rect x="585" y="470.0" width="2" height="81.0" fill="url(#pc)"/>
<rect x="587" y="340.0" width="2" height="30.5" fill="#fffffa"/>
<rect x="587" y="370.0" width="2" height="65.5" fill="url(#pa)"/>
<rect x="587" y="435.0" width="2" height="35.4" fill="url(#pb)"/>
<rect x="587" y="469.9" width="2" height="81.2" fill="url(#pc)"/>
<rect x="589" y="340.1" width="2" height="30.5" fill="#fffffa"/>
<rect x="589" y="370.1" width="2" height="65.4" fill="url(#pa)"/>
<rect x="589" y="435.0" width="2" height="35.1" fill="url(#pb)"/>
<rect x="589" y="469.6" width="2" height="81.5" fill="url(#pc)"/>
<rect x="591" y="340.1" width="2" height="30.5" fill="#fffffa"/>
<rect x="591" y="370.1" width="2" height="65.3" fill="url(#pa)"/>
<rect x="591" y="434.9" width="2" height="34.9" fill="url(#pb)"/>
<rect x="591" y="469.3" width="2" height="81.8" fill="url(#pc)"/>
<rect x="593" y="340.1" width="2" height="30.5" fill="#fffffa"/>
<rect x="593" y="370.1" width="2" height="65.3" fill="url(#pa)"/>
<rect x="593" y="434.9" width="2" height="34.7" fill="url(#pb)"/>
<rect x="593" y="469.1" width="2" height="82.2" fill="url(#pc)"/>
<rect x="595" y="340.1" width="2" height="30.5" fill="#fffffa"/>
<rect x="595" y="370.1" width="2" height="65.2" fill="url(#pa)"/>
<rect x="595" y="434.9" width="2" height="34.4" fill="url(#pb)"/>
<rect x="595" y="468.8" width="2" height="82.5" fill="url(#pc)"/>
<rect x="597" y="340.2" width="2" height="30.5" fill="#fffffa"/>
<rect x="597" y="370.2" width="2" height="65.1" fill="url(#pa)"/>
<rect x="597" y="434.8" width="2" height="34.2" fill="url(#pb)"/>
<rect x="597" y="468.5" width="2" height="82.8" fill="url(#pc)"/>
<rect x="599" y="340.2" width="2" height="30.5" fill="#fffffa"/>
<rect x="599" y="370.2" width="2" height="65.1" fill="url(#pa)"/>
<rect x="599" y="434.8" width="2" height="34.0" fill="url(#pb)"/>
<rect x="599" y="468.3" width="2" height="83.2" fill="url(#pc)"/>
<rect x="601" y="340.2" width="2" height="30.5" fill="#fffffa"/>
<rect x="601" y="370.2" width="2" height="65.0" fill="url(#pa)"/>
<rect x="601" y="434.8" width="2" height="33.8" fill="url(#pb)"/>
<rect x="601" y="468.0" width="2" height="83.5" fill="url(#pc)"/>
<rect x="603" y="340.3" width="2" height="30.5" fill="#fffffa"/>
<rect x="603" y="370.3" width="2" height="64.9" fill="url(#pa)"/>
<rect x="603" y="434.7" width="2" height="33.5" fill="url(#pb)"/>
<rect x="603" y="467.7" width="2" height="83.8" fill="url(#pc)"/>
<rect x="605" y="340.3" width="2" height="30.5" fill="#fffffa"/>
<rect x="605" y="370.3" width="2" height="64.9" fill="url(#pa)"/>
<rect x="605" y="434.7" width="2" height="33.3" fill="url(#pb)"/>
<rect x="605" y="467.5" width="2" height="84.2" fill="url(#pc)"/>
<rect x="607" y="340.4" width="2" height="30.5" fill="#fffffa"/>
<rect x="607" y="370.4" width="2" height="64.8" fill="url(#pa)"/>
<rect x="607" y="434.6" width="2" height="33.1" fill="url(#pb)"/>
<rect x="607" y="467.2" width="2" height="84.5" fill="url(#pc)"/>
<rect x="609" y="340.4" width="2" height="30.5" fill="#fffffa"/>
<rect x="609" y="370.4" width="2" height="64.7" fill="url(#pa)"/>
<rect x="609" y="434.6" width="2" height="32.8" fill="url(#pb)"/>
<rect x="609" y="466.9" width="2" height="84.8" fill="url(#pc)"/>
<rect x="611" y="340.4" width="2" height="30.5" fill="#fffffa"/>
<rect x="611" y="370.4" width="2" height="64.7" fill="url(#pa)"/>
<rect x="611" y="434.6" width="2" height="32.6" fill="url(#pb)"/>
<rect x="611" y="466.7" width="2" height="85.2" fill="url(#pc)"/>
<rect x="613" y="340.4" width="2" height="30.5" fill="#fffffa"/>
<rect x="613" y="370.4" width="2" height="64.6" fill="url(#pa)"/>
<rect x="613" y="434.5" width="2" height="32.4" fill="url(#pb)"/>
<rect x="613" y="466.4" width="2" height="85.5" fill="url(#pc)"/>
<rect x="615" y="340.5" width="2" height="30.5" fill="#fffffa"/>
<rect x="615" y="370.5" width="2" height="64.5" fill="url(#pa)"/>
<rect x="615" y="434.5" width="2" height="32.1" fill="url(#pb)"/>
<rect x="615" y="466.1" width="2" height="85.8" fill="url(#pc)"/>
<rect x="617" y="340.5" width="2" height="30.5" fill="#fffffa"/>
<rect x="617" y="370.5" width="2" height="64.5" fill="url(#pa)"/>
<rect x="617" y="434.5" width="2" height="31.9" fill="url(#pb)"/>
<rect x="617" y="465.9" width="2" height="86.2" fill="url(#pc)"/>
<rect x="619" y="340.6" width="2" height="30.5" fill="#fffffa"/>
<rect x="619" y="370.6" width="2" height="64.4" fill="url(#pa)"/>
<rect x="619" y="434.5" width="2" height="31.6" fill="url(#pb)"/>
<rect x="619" y="465.6" width="2" height="86.5" fill="url(#pc)"/>
<rect x="621" y="340.6" width="2" height="30.5" fill="#fffffa"/>
<rect x="621" y="370.6" width="2" height="64.3" fill="url(#pa)"/>
<rect x="621" y="434.4" width="2" height="31.4" fill="url(#pb)"/>
<rect x="621" y="465.3" width="2" height="86.8" fill="url(#pc)"/>
<rect x="623" y="340.6" width="2" height="30.5" fill="#fffffa"/>
<rect x="623" y="370.6" width="2" height="64.3" fill="url(#pa)"/>
<rect x="623" y="434.4" width="2" height="31.2" fill="url(#pb)"/>
<rect x="623" y="465.1" width="2" height="87.2" fill="url(#pc)"/>
<rect x="625" y="340.6" width="2" height="30.5" fill="#fffffa"/>
<rect x="625" y="370.6" width="2" height="64.2" fill="url(#pa)"/>
<rect x="625" y="434.4" width="2" height="30.9" fill="url(#pb)"/>
<rect x="625" y="464.8" width="2" height="87.5" fill="url(#pc)"/>
<rect x="627" y="340.7" width="2" height="30.5" fill="#fffffa"/>
<rect x="627" y="370.7" width="2" height="64.1" fill="url(#pa)"/>
<rect x="627" y="434.3" width="2" height="30.7" fill="url(#pb)"/>
<rect x="627" y="464.5" width="2" height="87.8" fill="url(#pc)"/>
<rect x="629" y="340.7" width="2" height="30.5" fill="#fffffa"/>
<rect x="629" y="370.7" width="2" height="64.1" fill="url(#pa)"/>
<rect x="629" y="434.3" width="2" height="30.5" fill="url(#pb)"/>
<rect x="629" y="464.3" width="2" height="88.2" fill="url(#pc)"/>
<rect x="631" y="340.8" width="2" height="30.5" fill="#fffffa"/>
<rect x="631" y="370.8" width="2" height="64.0" fill="url(#pa)"/>
<rect x="631" y="434.2" width="2" height="30.2" fill="url(#pb)"/>
<rect x="631" y="464.0" width="2" height="88.5" fill="url(#pc)"/>
<rect x="633" y="340.8" width="2" height="30.5" fill="#fffffa"/>
<rect x="633" y="370.8" width="2" height="63.9" fill="url(#pa)"/>
<rect x="633" y="434.2" width="2" height="30.0" fill="url(#pb)"/>
<rect x="633" y="463.7" width="2" height="88.8" fill="url(#pc)"/>
<rect x="635" y="340.8" width="2" height="30.5" fill="#fffffa"/>
<rect x="635" y="370.8" width="2" height="63.9" fill="url(#pa)"/>
<rect x="635" y="434.2" width="2" height="29.8" fill="url(#pb)"/>
<rect x="635" y="463.5" width="2" height="89.2" fill="url(#pc)"/>
<rect x="637" y="340.9" width="2" height="30.5" fill="#fffffa"/>
<rect x="637" y="370.9" width="2" height="63.8" fill="url(#pa)"/>
<rect x="637" y="434.1" width="2" height="29.6" fill="url(#pb)"/>
<rect x="637" y="463.2" width="2" height="89.5" fill="url(#pc)"/>
<rect x="639" y="340.9" width="2" height="30.5" fill="#fffffa"/>
<rect x="639" y="370.9" width="2" height="63.7" fill="url(#pa)"/>
<rect x="639" y="434.1" width="2" height="29.3" fill="url(#pb)"/>
<rect x="639" y="462.9" width="2" height="89.8" fill="url(#pc)"/>
<rect x="641" y="340.9" width="2" height="30.5" fill="#fffffa"/>
<rect x="641" y="370.9" width="2" height="63.7" fill="url(#pa)"/>
<rect x="641" y="434.1" width="2" height="29.1" fill="url(#pb)"/>
<rect x="641" y="462.7" width="2" height="90.2" fill="url(#pc)"/>
<rect x="643" y="340.9" width="2" height="30.5" fill="#fffffa"/>
<rect x="643" y="370.9" width="2" height="63.6" fill="url(#pa)"/>
<rect x="643" y="434.0" width="2" height="28.9" fill="url(#pb)"/>
<rect x="643" y="462.4" width="2" height="90.5" fill="url(#pc)"/>
<rect x="645" y="341.0" width="2" height="30.5" fill="#fffffa"/>
<rect x="645" y="371.0" width="2" height="63.5" fill="url(#pa)"/>
<rect x="645" y="434.0" width="2" height="28.6" fill="url(#pb)"/>
<rect x="645" y="462.1" width="2" height="90.8" fill="url(#pc)"/>
<rect x="647" y="340.9" width="2" height="30.5" fill="#fffffa"/>
<rect x="647" y="370.9" width="2" height="63.5" fill="url(#pa)"/>
<rect x="647" y="434.0" width="2" height="28.6" fill="url(#pb)"/>
<rect x="647" y="462.0" width="2" height="91.1" fill="url(#pc)"/>
<rect x="649" y="340.8" width="2" height="30.5" fill="#fffffa"/>
<rect x="649" y="370.8" width="2" height="63.6" fill="url(#pa)"/>
<rect x="649" y="433.9" width="2" height="28.7" fill="url(#pb)"/>
<rect x="649" y="462.1" width="2" height="91.2" fill="url(#pc)"/>
<rect x="651" y="340.7" width="2" height="30.5" fill="#fffffa"/>
<rect x="651" y="370.7" width="2" height="63.6" fill="url(#pa)"/>
<rect x="651" y="433.8" width="2" height="28.9" fill="url(#pb)"/>
<rect x="651" y="462.2" width="2" height="91.3" fill="url(#pc)"/>
<rect x="653" y="340.6" width="2" height="30.5" fill="#fffffa"/>
<rect x="653" y="370.6" width="2" height="63.6" fill="url(#pa)"/>
<rect x="653" y="433.7" width="2" height="29.1" fill="url(#pb)"/>
<rect x="653" y="462.3" width="2" height="91.4" fill="url(#pc)"/>
<rect x="655" y="340.5" width="2" height="30.5" fill="#fffffa"/>
<rect x="655" y="370.5" width="2" height="63.7" fill="url(#pa)"/>
<rect x="655" y="433.6" width="2" height="29.2" fill="url(#pb)"/>
<rect x="655" y="462.4" width="2" height="91.5" fill="url(#pc)"/>
<rect x="657" y="340.3" width="2" height="30.5" fill="#fffffa"/>
<rect x="657" y="370.3" width="2" height="63.7" fill="url(#pa)"/>
<rect x="657" y="433.6" width="2" height="29.4" fill="url(#pb)"/>
<rect x="657" y="462.4" width="2" height="91.7" fill="url(#pc)"/>
<rect x="659" y="340.2" width="2" height="30.5" fill="#fffffa"/>
<rect x="659" y="370.2" width="2" height="63.8" fill="url(#pa)"/>
<rect x="659" y="433.5" width="2" height="29.5" fill="url(#pb)"/>
<rect x="659" y="462.5" width="2" height="91.8" fill="url(#pc)"/>
<rect x="661" y="340.1" width="2" height="30.5" fill="#fffffa"/>
<rect x="661" y="370.1" width="2" height="63.8" fill="url(#pa)"/>
<rect x="661" y="433.4" width="2" height="29.7" fill="url(#pb)"/>
<rect x="661" y="462.6" width="2" height="91.9" fill="url(#pc)"/>
<rect x="663" y="340.0" width="2" height="30.5" fill="#fffffa"/>
<rect x="663" y="370.0" width="2" height="63.8" fill="url(#pa)"/>
<rect x="663" y="433.3" width="2" height="29.9" fill="url(#pb)"/>
<rect x="663" y="462.7" width="2" height="92.0" fill="url(#pc)"/>
<rect x="665" y="339.9" width="2" height="30.5" fill="#fffffa"/>
<rect x="665" y="369.9" width="2" height="63.9" fill="url(#pa)"/>
<rect x="665" y="433.2" width="2" height="30.0" fill="url(#pb)"/>
<rect x="665" y="462.8" width="2" height="92.1" fill="url(#pc)"/>
<rect x="667" y="339.7" width="2" height="30.5" fill="#fffffa"/>
<rect x="667" y="369.7" width="2" height="63.9" fill="url(#pa)"/>
<rect x="667" y="433.2" width="2" height="30.2" fill="url(#pb)"/>
<rect x="667" y="462.8" width="2" height="92.3" fill="url(#pc)"/>
<rect x="669" y="339.6" width="2" height="30.5" fill="#fffffa"/>
<rect x="669" y="369.6" width="2" height="64.0" fill="url(#pa)"/>
<rect x="669" y="433.1" width="2" height="30.3" fill="url(#pb)"/>
<rect x="669" y="462.9" width="2" height="92.4" fill="url(#pc)"/>
<rect x="671" y="339.5" width="2" height="30.5" fill="#fffffa"/>
<rect x="671" y="369.5" width="2" height="64.0" fill="url(#pa)"/>
<rect x="671" y="433.0" width="2" height="30.5" fill="url(#pb)"/>
<rect x="671" y="463.0" width="2" height="92.5" fill="url(#pc)"/>
<rect x="673" y="339.4" width="2" height="30.5" fill="#fffffa"/>
<rect x="673" y="369.4" width="2" height="64.0" fill="url(#pa)"/>
<rect x="673" y="432.9" width="2" height="30.7" fill="url(#pb)"/>
<rect x="673" y="463.1" width="2" height="92.6" fill="url(#pc)"/>
<rect x="675" y="339.3" width="2" height="30.5" fill="#fffffa"/>
<rect x="675" y="369.3" width="2" height="64.1" fill="url(#pa)"/>
<rect x="675" y="432.8" width="2" height="30.8" fill="url(#pb)"/>
<rect x="675" y="463.2" width="2" height="92.7" fill="url(#pc)"/>
<rect x="677" y="339.1" width="2" height="30.5" fill="#fffffa"/>
<rect x="677" y="369.1" width="2" height="64.1" fill="url(#pa)"/>
<rect x="677" y="432.8" width="2" height="31.0" fill="url(#pb)"/>
<rect x="677" y="463.2" width="2" height="92.9" fill="url(#pc)"/>
<rect x="679" y="339.0" width="2" height="30.5" fill="#fffffa"/>
<rect x="679" y="369.0" width="2" height="64.2" fill="url(#pa)"/>
<rect x="679" y="432.7" width="2" height="31.1" fill="url(#pb)"/>
<rect x="679" y="463.3" width="2" height="93.0" fill="url(#pc)"/>
<rect x="681" y="338.9" width="2" height="30.5" fill="#fffffa"/>
<rect x="681" y="368.9" width="2" height="64.2" fill="url(#pa)"/>
<rect x="681" y="432.6" width="2" height="31.3" fill="url(#pb)"/>
<rect x="681" y="463.4" width="2" height="93.1" fill="url(#pc)"/>
<rect x="683" y="338.8" width="2" height="30.5" fill="#fffffa"/>
<rect x="683" y="368.8" width="2" height="64.2" fill="url(#pa)"/>
<rect x="683" y="432.5" width="2" height="31.5" fill="url(#pb)"/>
<rect x="683" y="463.5" width="2" height="93.2" fill="url(#pc)"/>
<rect x="685" y="338.7" width="2" height="30.5" fill="#fffffa"/>
<rect x="685" y="368.7" width="2" height="64.3" fill="url(#pa)"/>
<rect x="685" y="432.4" width="2" height="31.6" fill="url(#pb)"/>
<rect x="685" y="463.6" width="2" height="93.3" fill="url(#pc)"/>
<rect x="687" y="338.5" width="2" height="30.5" fill="#fffffa"/>
<rect x="687" y="368.5" width="2" height="64.3" fill="url(#pa)"/>
<rect x="687" y="432.4" width="2" height="31.8" fill="url(#pb)"/>
<rect x="687" y="463.6" width="2" height="93.5" fill="url(#pc)"/>
<rect x="689" y="338.4" width="2" height="30.5" fill="#fffffa"/>
<rect x="689" y="368.4" width="2" height="64.4" fill="url(#pa)"/>
<rect x="689" y="432.3" width="2" height="31.9" fill="url(#pb)"/>
<rect x="689" y="463.7" width="2" height="93.6" fill="url(#pc)"/>
<rect x="691" y="338.3" width="2" height="30.5" fill="#fffffa"/>
<rect x="691" y="368.3" width="2" height="64.4" fill="url(#pa)"/>
<rect x="691" y="432.2" width="2" height="32.1" fill="url(#pb)"/>
<rect x="691" y="463.8" width="2" height="93.7" fill="url(#pc)"/>
<rect x="693" y="338.2" width="2" height="30.5" fill="#fffffa"/>
<rect x="693" y="368.2" width="2" height="64.4" fill="url(#pa)"/>
<rect x="693" y="432.1" width="2" height="32.3" fill="url(#pb)"/>
<rect x="693" y="463.9" width="2" height="93.8" fill="url(#pc)"/>
<rect x="695" y="338.1" width="2" height="30.5" fill="#fffffa"/>
<rect x="695" y="368.1" width="2" height="64.5" fill="url(#pa)"/>
<rect x="695" y="432.0" width="2" height="32.4" fill="url(#pb)"/>
<rect x="695" y="464.0" width="2" height="93.9" fill="url(#pc)"/>
<rect x="697" y="338.0" width="2" height="30.5" fill="#fffffa"/>
<rect x="697" y="368.0" width="2" height="64.5" fill="url(#pa)"/>
<rect x="697" y="432.0" width="2" height="32.6" fill="url(#pb)"/>
<rect x="697" y="464.1" width="2" height="94.0" fill="url(#pc)"/>
<rect x="699" y="337.9" width="2" height="30.5" fill="#fffffa"/>
<rect x="699" y="367.9" width="2" height="64.6" fill="url(#pa)"/>
<rect x="699" y="432.0" width="2" height="32.7" fill="url(#pb)"/>
<rect x="699" y="464.2" width="2" height="93.9" fill="url(#pc)"/>
<rect x="701" y="337.8" width="2" height="30.5" fill="#fffffa"/>
<rect x="701" y="367.8" width="2" height="64.7" fill="url(#pa)"/>
<rect x="701" y="432.0" width="2" height="32.8" fill="url(#pb)"/>
<rect x="701" y="464.3" width="2" height="93.8" fill="url(#pc)"/>
<rect x="703" y="337.7" width="2" height="30.5" fill="#fffffa"/>
<rect x="703" y="367.7" width="2" height="64.8" fill="url(#pa)"/>
<rect x="703" y="432.0" width="2" height="33.0" fill="url(#pb)"/>
<rect x="703" y="464.5" width="2" height="93.7" fill="url(#pc)"/>
<rect x="705" y="337.6" width="2" height="30.5" fill="#fffffa"/>
<rect x="705" y="367.6" width="2" height="64.9" fill="url(#pa)"/>
<rect x="705" y="432.0" width="2" height="33.1" fill="url(#pb)"/>
<rect x="705" y="464.6" width="2" height="93.6" fill="url(#pc)"/>
<rect x="707" y="337.5" width="2" height="30.5" fill="#fffffa"/>
<rect x="707" y="367.5" width="2" height="65.0" fill="url(#pa)"/>
<rect x="707" y="432.0" width="2" height="33.2" fill="url(#pb)"/>
<rect x="707" y="464.7" width="2" height="93.5" fill="url(#pc)"/>
<rect x="709" y="337.4" width="2" height="30.5" fill="#fffffa"/>
<rect x="709" y="367.4" width="2" height="65.1" fill="url(#pa)"/>
<rect x="709" y="432.0" width="2" height="33.4" fill="url(#pb)"/>
<rect x="709" y="464.9" width="2" height="93.4" fill="url(#pc)"/>
<rect x="711" y="337.3" width="2" height="30.5" fill="#fffffa"/>
<rect x="711" y="367.3" width="2" height="65.2" fill="url(#pa)"/>
<rect x="711" y="432.0" width="2" height="33.5" fill="url(#pb)"/>
<rect x="711" y="465.0" width="2" height="93.3" fill="url(#pc)"/>
<rect x="713" y="337.2" width="2" height="30.5" fill="#fffffa"/>
<rect x="713" y="367.2" width="2" height="65.3" fill="url(#pa)"/>
<rect x="713" y="432.0" width="2" height="33.6" fill="url(#pb)"/>
<rect x="713" y="465.1" width="2" height="93.2" fill="url(#pc)"/>
<rect x="715" y="337.2" width="2" height="30.5" fill="#fffffa"/>
<rect x="715" y="367.2" width="2" height="65.3" fill="url(#pa)"/>
<rect x="715" y="432.0" width="2" height="33.8" fill="url(#pb)"/>
<rect x="715" y="465.3" width="2" height="93.2" fill="url(#pc)"/>
<rect x="717" y="337.1" width="2" height="30.5" fill="#fffffa"/>
<rect x="717" y="367.1" width="2" height="65.4" fill="url(#pa)"/>
<rect x="717" y="432.0" width="2" height="33.9" fill="url(#pb)"/>
<rect x="717" y="465.4" width="2" height="93.1" fill="url(#pc)"/>
<rect x="719" y="337.0" width="2" height="30.5" fill="#fffffa"/>
<rect x="719" y="367.0" width="2" height="65.5" fill="url(#pa)"/>
<rect x="719" y="432.0" width="2" height="34.0" fill="url(#pb)"/>
<rect x="719" y="465.5" width="2" height="93.0" fill="url(#pc)"/>
<rect x="721" y="336.9" width="2" height="30.5" fill="#fffffa"/>
<rect x="721" y="366.9" width="2" height="65.6" fill="url(#pa)"/>
<rect x="721" y="432.0" width="2" height="34.2" fill="url(#pb)"/>
<rect x="721" y="465.7" width="2" height="92.9" fill="url(#pc)"/>
<rect x="723" y="336.8" width="2" height="30.5" fill="#fffffa"/>
<rect x="723" y="366.8" width="2" height="65.7" fill="url(#pa)"/>
<rect x="723" y="432.0" width="2" height="34.3" fill="url(#pb)"/>
<rect x="723" y="465.8" width="2" height="92.8" fill="url(#pc)"/>
<rect x="725" y="336.7" width="2" height="30.5" fill="#fffffa"/>
<rect x="725" y="366.7" width="2" height="65.8" fill="url(#pa)"/>
<rect x="725" y="432.0" width="2" height="34.4" fill="url(#pb)"/>
<rect x="725" y="465.9" width="2" height="92.7" fill="url(#pc)"/>
<rect x="727" y="336.6" width="2" height="30.5" fill="#fffffa"/>
<rect x="727" y="366.6" width="2" height="65.9" fill="url(#pa)"/>
<rect x="727" y="432.0" width="2" height="34.6" fill="url(#pb)"/>
<rect x="727" y="466.1" width="2" height="92.6" fill="url(#pc)"/>
<rect x="729" y="336.5" width="2" height="30.5" fill="#fffffa"/>
<rect x="729" y="366.5" width="2" height="66.0" fill="url(#pa)"/>
<rect x="729" y="432.0" width="2" height="34.7" fill="url(#pb)"/>
<rect x="729" y="466.2" width="2" height="92.5" fill="url(#pc)"/>
<rect x="731" y="336.4" width="2" height="30.5" fill="#fffffa"/>
<rect x="731" y="366.4" width="2" height="66.1" fill="url(#pa)"/>
<rect x="731" y="432.0" width="2" height="34.8" fill="url(#pb)"/>
<rect x="731" y="466.3" width="2" height="92.4" fill="url(#pc)"/>
<rect x="733" y="336.4" width="2" height="30.5" fill="#fffffa"/>
<rect x="733" y="366.4" width="2" height="66.1" fill="url(#pa)"/>
<rect x="733" y="432.0" width="2" height="35.0" fill="url(#pb)"/>
<rect x="733" y="466.5" width="2" height="92.4" fill="url(#pc)"/>
<rect x="735" y="336.3" width="2" height="30.5" fill="#fffffa"/>
<rect x="735" y="366.3" width="2" height="66.2" fill="url(#pa)"/>
<rect x="735" y="432.0" width="2" height="35.1" fill="url(#pb)"/>
<rect x="735" y="466.6" width="2" height="92.3" fill="url(#pc)"/>
<rect x="737" y="336.2" width="2" height="30.5" fill="#fffffa"/>
<rect x="737" y="366.2" width="2" height="66.3" fill="url(#pa)"/>
<rect x="737" y="432.0" width="2" height="35.2" fill="url(#pb)"/>
<rect x="737" y="466.7" width="2" height="92.2" fill="url(#pc)"/>
<rect x="739" y="336.1" width="2" height="30.5" fill="#fffffa"/>
<rect x="739" y="366.1" width="2" height="66.4" fill="url(#pa)"/>
<rect x="739" y="432.0" width="2" height="35.4" fill="url(#pb)"/>
<rect x="739" y="466.9" width="2" height="92.1" fill="url(#pc)"/>
<rect x="741" y="336.0" width="2" height="30.5" fill="#fffffa"/>
<rect x="741" y="366.0" width="2" height="66.5" fill="url(#pa)"/>
<rect x="741" y="432.0" width="2" height="35.5" fill="url(#pb)"/>
<rect x="741" y="467.0" width="2" height="92.0" fill="url(#pc)"/>
<rect x="743" y="336.3" width="2" height="30.5" fill="#fffffa"/>
<rect x="743" y="366.3" width="2" height="66.2" fill="url(#pa)"/>
<rect x="743" y="432.0" width="2" height="35.6" fill="url(#pb)"/>
<rect x="743" y="467.1" width="2" height="92.0" fill="url(#pc)"/>
<rect x="745" y="336.6" width="2" height="30.5" fill="#fffffa"/>
<rect x="745" y="366.6" width="2" height="65.9" fill="url(#pa)"/>
<rect x="745" y="432.0" width="2" height="35.7" fill="url(#pb)"/>
<rect x="745" y="467.2" width="2" height="91.9" fill="url(#pc)"/>
<rect x="747" y="336.8" width="2" height="30.5" fill="#fffffa"/>
<rect x="747" y="366.8" width="2" height="65.7" fill="url(#pa)"/>
<rect x="747" y="432.0" width="2" height="35.8" fill="url(#pb)"/>
<rect x="747" y="467.3" width="2" height="91.9" fill="url(#pc)"/>
<rect x="749" y="337.1" width="2" height="30.5" fill="#fffffa"/>
<rect x="749" y="367.1" width="2" height="65.4" fill="url(#pa)"/>
<rect x="749" y="432.0" width="2" height="35.9" fill="url(#pb)"/>
<rect x="749" y="467.4" width="2" height="91.9" fill="url(#pc)"/>
<rect x="751" y="337.4" width="2" height="30.5" fill="#fffffa"/>
<rect x="751" y="367.4" width="2" height="65.1" fill="url(#pa)"/>
<rect x="751" y="432.0" width="2" height="36.0" fill="url(#pb)"/>
<rect x="751" y="467.5" width="2" height="91.8" fill="url(#pc)"/>
<rect x="753" y="337.7" width="2" height="30.5" fill="#fffffa"/>
<rect x="753" y="367.7" width="2" height="64.8" fill="url(#pa)"/>
<rect x="753" y="432.0" width="2" height="36.1" fill="url(#pb)"/>
<rect x="753" y="467.6" width="2" height="91.8" fill="url(#pc)"/>
<rect x="755" y="337.9" width="2" height="30.5" fill="#fffffa"/>
<rect x="755" y="367.9" width="2" height="64.6" fill="url(#pa)"/>
<rect x="755" y="432.0" width="2" height="36.1" fill="url(#pb)"/>
<rect x="755" y="467.6" width="2" height="91.8" fill="url(#pc)"/>
<rect x="757" y="338.2" width="2" height="30.5" fill="#fffffa"/>
<rect x="757" y="368.2" width="2" height="64.3" fill="url(#pa)"/>
<rect x="757" y="432.0" width="2" height="36.2" fill="url(#pb)"/>
<rect x="757" y="467.7" width="2" height="91.8" fill="url(#pc)"/>
<rect x="759" y="338.5" width="2" height="30.5" fill="#fffffa"/>
<rect x="759" y="368.5" width="2" height="64.0" fill="url(#pa)"/>
<rect x="759" y="432.0" width="2" height="36.3" fill="url(#pb)"/>
<rect x="759" y="467.8" width="2" height="91.7" fill="url(#pc)"/>
<rect x="761" y="338.8" width="2" height="30.5" fill="#fffffa"/>
<rect x="761" y="368.8" width="2" height="63.7" fill="url(#pa)"/>
<rect x="761" y="432.0" width="2" height="36.4" fill="url(#pb)"/>
<rect x="761" y="467.9" width="2" height="91.7" fill="url(#pc)"/>
<rect x="763" y="339.0" width="2" height="30.5" fill="#fffffa"/>
<rect x="763" y="369.0" width="2" height="63.5" fill="url(#pa)"/>
<rect x="763" y="432.0" width="2" height="36.5" fill="url(#pb)"/>
<rect x="763" y="468.0" width="2" height="91.7" fill="url(#pc)"/>
<rect x="765" y="339.3" width="2" height="30.5" fill="#fffffa"/>
<rect x="765" y="369.3" width="2" height="63.2" fill="url(#pa)"/>
<rect x="765" y="432.0" width="2" height="36.6" fill="url(#pb)"/>
<rect x="765" y="468.1" width="2" height="91.6" fill="url(#pc)"/>
<rect x="767" y="339.6" width="2" height="30.5" fill="#fffffa"/>
<rect x="767" y="369.6" width="2" height="62.9" fill="url(#pa)"/>
<rect x="767" y="432.0" width="2" height="36.7" fill="url(#pb)"/>
<rect x="767" y="468.2" width="2" height="91.6" fill="url(#pc)"/>
<rect x="769" y="339.9" width="2" height="30.5" fill="#fffffa"/>
<rect x="769" y="369.9" width="2" height="62.6" fill="url(#pa)"/>
<rect x="769" y="432.0" width="2" height="36.8" fill="url(#pb)"/>
<rect x="769" y="468.3" width="2" height="91.6" fill="url(#pc)"/>
<rect x="771" y="340.2" width="2" height="30.5" fill="#fffffa"/>
<rect x="771" y="370.2" width="2" height="62.3" fill="url(#pa)"/>
<rect x="771" y="432.0" width="2" height="36.9" fill="url(#pb)"/>
<rect x="771" y="468.4" width="2" height="91.5" fill="url(#pc)"/>
<rect x="773" y="340.4" width="2" height="30.5" fill="#fffffa"/>
<rect x="773" y="370.4" width="2" height="62.1" fill="url(#pa)"/>
<rect x="773" y="432.0" width="2" height="37.0" fill="url(#pb)"/>
<rect x="773" y="468.5" width="2" height="91.5" fill="url(#pc)"/>
<rect x="775" y="340.7" width="2" height="30.5" fill="#fffffa"/>
<rect x="775" y="370.7" width="2" height="61.8" fill="url(#pa)"/>
<rect x="775" y="432.0" width="2" height="37.1" fill="url(#pb)"/>
<rect x="775" y="468.6" width="2" height="91.5" fill="url(#pc)"/>
<rect x="777" y="341.0" width="2" height="30.5" fill="#fffffa"/>
<rect x="777" y="371.0" width="2" height="61.5" fill="url(#pa)"/>
<rect x="777" y="432.0" width="2" height="37.2" fill="url(#pb)"/>
<rect x="777" y="468.7" width="2" height="91.4" fill="url(#pc)"/>
<rect x="779" y="341.3" width="2" height="30.5" fill="#fffffa"/>
<rect x="779" y="371.3" width="2" height="61.2" fill="url(#pa)"/>
<rect x="779" y="432.0" width="2" height="37.3" fill="url(#pb)"/>
<rect x="779" y="468.8" width="2" height="91.4" fill="url(#pc)"/>
<rect x="781" y="341.5" width="2" height="30.5" fill="#fffffa"/>
<rect x="781" y="371.5" width="2" height="61.0" fill="url(#pa)"/>
<rect x="781" y="432.0" width="2" height="37.3" fill="url(#pb)"/>
<rect x="781" y="468.8" width="2" height="91.4" fill="url(#pc)"/>
<rect x="783" y="341.8" width="2" height="30.5" fill="#fffffa"/>
<rect x="783" y="371.8" width="2" height="60.7" fill="url(#pa)"/>
<rect x="783" y="432.0" width="2" height="37.4" fill="url(#pb)"/>
<rect x="783" y="468.9" width="2" height="91.4" fill="url(#pc)"/>
<rect x="785" y="342.1" width="2" height="30.5" fill="#fffffa"/>
<rect x="785" y="372.1" width="2" height="60.4" fill="url(#pa)"/>
<rect x="785" y="432.0" width="2" height="37.5" fill="url(#pb)"/>
<rect x="785" y="469.0" width="2" height="91.3" fill="url(#pc)"/>
<rect x="787" y="342.4" width="2" height="30.5" fill="#fffffa"/>
<rect x="787" y="372.4" width="2" height="60.1" fill="url(#pa)"/>
<rect x="787" y="432.0" width="2" height="37.6" fill="url(#pb)"/>
<rect x="787" y="469.1" width="2" height="91.3" fill="url(#pc)"/>
<rect x="789" y="342.6" width="2" height="30.5" fill="#fffffa"/>
<rect x="789" y="372.6" width="2" height="59.9" fill="url(#pa)"/>
<rect x="789" y="432.0" width="2" height="37.7" fill="url(#pb)"/>
<rect x="789" y="469.2" width="2" height="91.3" fill="url(#pc)"/>
<rect x="791" y="342.9" width="2" height="30.5" fill="#fffffa"/>
<rect x="791" y="372.9" width="2" height="59.6" fill="url(#pa)"/>
<rect x="791" y="432.0" width="2" height="37.8" fill="url(#pb)"/>
<rect x="791" y="469.3" width="2" height="91.2" fill="url(#pc)"/>
<rect x="793" y="343.2" width="2" height="30.5" fill="#fffffa"/>
<rect x="793" y="373.2" width="2" height="59.3" fill="url(#pa)"/>
<rect x="793" y="432.0" width="2" height="37.9" fill="url(#pb)"/>
<rect x="793" y="469.4" width="2" height="91.2" fill="url(#pc)"/>
<rect x="795" y="343.5" width="2" height="30.5" fill="#fffffa"/>
<rect x="795" y="373.5" width="2" height="59.0" fill="url(#pa)"/>
<rect x="795" y="432.0" width="2" height="38.0" fill="url(#pb)"/>
<rect x="795" y="469.5" width="2" height="91.2" fill="url(#pc)"/>
<rect x="797" y="343.8" width="2" height="30.5" fill="#fffffa"/>
<rect x="797" y="373.8" width="2" height="58.7" fill="url(#pa)"/>
<rect x="797" y="432.0" width="2" height="38.1" fill="url(#pb)"/>
<rect x="797" y="469.6" width="2" height="91.1" fill="url(#pc)"/>
<rect x="799" y="344.0" width="2" height="30.5" fill="#fffffa"/>
<rect x="799" y="374.0" width="2" height="58.5" fill="url(#pa)"/>
<rect x="799" y="432.0" width="2" height="38.2" fill="url(#pb)"/>
<rect x="799" y="469.7" width="2" height="91.1" fill="url(#pc)"/>
<rect x="801" y="344.3" width="2" height="30.5" fill="#fffffa"/>
<rect x="801" y="374.3" width="2" height="58.2" fill="url(#pa)"/>
<rect x="801" y="432.0" width="2" height="38.3" fill="url(#pb)"/>
<rect x="801" y="469.8" width="2" height="91.1" fill="url(#pc)"/>
<rect x="803" y="344.6" width="2" height="30.5" fill="#fffffa"/>
<rect x="803" y="374.6" width="2" height="57.9" fill="url(#pa)"/>
<rect x="803" y="432.0" width="2" height="38.4" fill="url(#pb)"/>
<rect x="803" y="469.9" width="2" height="91.0" fill="url(#pc)"/>
<rect x="805" y="344.9" width="2" height="30.5" fill="#fffffa"/>
<rect x="805" y="374.9" width="2" height="57.6" fill="url(#pa)"/>
<rect x="805" y="432.0" width="2" height="38.5" fill="url(#pb)"/>
<rect x="805" y="470.0" width="2" height="91.0" fill="url(#pc)"/>
<rect x="807" y="345.2" width="2" height="30.5" fill="#fffffa"/>
<rect x="807" y="375.2" width="2" height="57.3" fill="url(#pa)"/>
<rect x="807" y="432.0" width="2" height="38.5" fill="url(#pb)"/>
<rect x="807" y="470.0" width="2" height="91.1" fill="url(#pc)"/>
<rect x="809" y="345.6" width="2" height="30.5" fill="#fffffa"/>
<rect x="809" y="375.6" width="2" height="56.9" fill="url(#pa)"/>
<rect x="809" y="432.0" width="2" height="38.6" fill="url(#pb)"/>
<rect x="809" y="470.1" width="2" height="91.1" fill="url(#pc)"/>
<rect x="811" y="346.0" width="2" height="30.5" fill="#fffffa"/>
<rect x="811" y="376.0" width="2" height="56.5" fill="url(#pa)"/>
<rect x="811" y="432.0" width="2" height="38.6" fill="url(#pb)"/>
<rect x="811" y="470.1" width="2" height="91.2" fill="url(#pc)"/>
<rect x="813" y="346.4" width="2" height="30.5" fill="#fffffa"/>
<rect x="813" y="376.4" width="2" height="56.1" fill="url(#pa)"/>
<rect x="813" y="432.0" width="2" height="38.7" fill="url(#pb)"/>
<rect x="813" y="470.2" width="2" height="91.4" fill="url(#pc)"/>
<rect x="815" y="346.8" width="2" height="30.5" fill="#fffffa"/>
<rect x="815" y="376.8" width="2" height="55.7" fill="url(#pa)"/>
<rect x="815" y="432.0" width="2" height="38.7" fill="url(#pb)"/>
<rect x="815" y="470.2" width="2" height="91.4" fill="url(#pc)"/>
<rect x="817" y="347.2" width="2" height="30.5" fill="#fffffa"/>
<rect x="817" y="377.2" width="2" height="55.3" fill="url(#pa)"/>
<rect x="817" y="432.0" width="2" height="38.8" fill="url(#pb)"/>
<rect x="817" y="470.3" width="2" height="91.6" fill="url(#pc)"/>
<rect x="819" y="347.6" width="2" height="30.5" fill="#fffffa"/>
<rect x="819" y="377.6" width="2" height="54.9" fill="url(#pa)"/>
<rect x="819" y="432.0" width="2" height="38.8" fill="url(#pb)"/>
<rect x="819" y="470.3" width="2" height="91.6" fill="url(#pc)"/>
<rect x="821" y="348.0" width="2" height="30.5" fill="#fffffa"/>
<rect x="821" y="378.0" width="2" height="54.5" fill="url(#pa)"/>
<rect x="821" y="432.0" width="2" height="38.9" fill="url(#pb)"/>
<rect x="821" y="470.4" width="2" height="91.8" fill="url(#pc)"/>
<rect x="823" y="348.4" width="2" height="30.5" fill="#fffffa"/>
<rect x="823" y="378.4" width="2" height="54.1" fill="url(#pa)"/>
<rect x="823" y="432.0" width="2" height="38.9" fill="url(#pb)"/>
<rect x="823" y="470.4" width="2" height="91.9" fill="url(#pc)"/>
<rect x="825" y="348.8" width="2" height="30.5" fill="#fffffa"/>
<rect x="825" y="378.8" width="2" height="53.7" fill="url(#pa)"/>
<rect x="825" y="432.0" width="2" height="39.0" fill="url(#pb)"/>
<rect x="825" y="470.5" width="2" height="91.9" fill="url(#pc)"/>
<rect x="827" y="349.2" width="2" height="30.5" fill="#fffffa"/>
<rect x="827" y="379.2" width="2" height="53.3" fill="url(#pa)"/>
<rect x="827" y="432.0" width="2" height="39.0" fill="url(#pb)"/>
<rect x="827" y="470.5" width="2" height="92.1" fill="url(#pc)"/>
<rect x="829" y="349.6" width="2" height="30.5" fill="#fffffa"/>
<rect x="829" y="379.6" width="2" height="52.9" fill="url(#pa)"/>
<rect x="829" y="432.0" width="2" height="39.1" fill="url(#pb)"/>
<rect x="829" y="470.6" width="2" height="92.1" fill="url(#pc)"/>
<rect x="831" y="350.0" width="2" height="30.5" fill="#fffffa"/>
<rect x="831" y="380.0" width="2" height="52.5" fill="url(#pa)"/>
<rect x="831" y="432.0" width="2" height="39.1" fill="url(#pb)"/>
<rect x="831" y="470.6" width="2" height="92.2" fill="url(#pc)"/>
<rect x="833" y="350.4" width="2" height="30.5" fill="#fffffa"/>
<rect x="833" y="380.4" width="2" height="52.1" fill="url(#pa)"/>
<rect x="833" y="432.0" width="2" height="39.2" fill="url(#pb)"/>
<rect x="833" y="470.7" width="2" height="92.4" fill="url(#pc)"/>
<rect x="835" y="350.8" width="2" height="30.5" fill="#fffffa"/>
<rect x="835" y="380.8" width="2" height="51.7" fill="url(#pa)"/>
<rect x="835" y="432.0" width="2" height="39.2" fill="url(#pb)"/>
<rect x="835" y="470.7" width="2" height="92.4" fill="url(#pc)"/>
<rect x="837" y="351.2" width="2" height="30.5" fill="#fffffa"/>
<rect x="837" y="381.2" width="2" height="51.3" fill="url(#pa)"/>
<rect x="837" y="432.0" width="2" height="39.3" fill="url(#pb)"/>
<rect x="837" y="470.8" width="2" height="92.6" fill="url(#pc)"/>
<rect x="839" y="351.6" width="2" height="30.5" fill="#fffffa"/>
<rect x="839" y="381.6" width="2" height="50.9" fill="url(#pa)"/>
<rect x="839" y="432.0" width="2" height="39.3" fill="url(#pb)"/>
<rect x="839" y="470.8" width="2" height="92.6" fill="url(#pc)"/>
<rect x="841" y="352.0" width="2" height="30.5" fill="#fffffa"/>
<rect x="841" y="382.0" width="2" height="50.5" fill="url(#pa)"/>
<rect x="841" y="432.0" width="2" height="39.4" fill="url(#pb)"/>
<rect x="841" y="470.9" width="2" height="92.8" fill="url(#pc)"/>
<rect x="843" y="352.4" width="2" height="30.5" fill="#fffffa"/>
<rect x="843" y="382.4" width="2" height="50.1" fill="url(#pa)"/>
<rect x="843" y="432.0" width="2" height="39.4" fill="url(#pb)"/>
<rect x="843" y="470.9" width="2" height="92.9" fill="url(#pc)"/>
<rect x="845" y="352.8" width="2" height="30.5" fill="#fffffa"/>
<rect x="845" y="382.8" width="2" height="49.7" fill="url(#pa)"/>
<rect x="845" y="432.0" width="2" height="39.5" fill="url(#pb)"/>
<rect x="845" y="471.0" width="2" height="92.9" fill="url(#pc)"/>
<rect x="847" y="353.1" width="2" height="30.5" fill="#fffffa"/>
<rect x="847" y="383.1" width="2" height="49.5" fill="url(#pa)"/>
<rect x="847" y="432.1" width="2" height="39.3" fill="url(#pb)"/>
<rect x="847" y="470.9" width="2" height="93.2" fill="url(#pc)"/>
<rect x="849" y="353.4" width="2" height="30.5" fill="#fffffa"/>
<rect x="849" y="383.4" width="2" height="49.4" fill="url(#pa)"/>
<rect x="849" y="432.3" width="2" height="39.0" fill="url(#pb)"/>
<rect x="849" y="470.8" width="2" height="93.6" fill="url(#pc)"/>
<rect x="851" y="353.7" width="2" height="30.5" fill="#fffffa"/>
<rect x="851" y="383.7" width="2" height="49.3" fill="url(#pa)"/>
<rect x="851" y="432.5" width="2" height="38.7" fill="url(#pb)"/>
<rect x="851" y="470.7" width="2" height="94.0" fill="url(#pc)"/>
<rect x="853" y="353.9" width="2" height="30.5" fill="#fffffa"/>
<rect x="853" y="383.9" width="2" height="49.3" fill="url(#pa)"/>
<rect x="853" y="432.7" width="2" height="38.3" fill="url(#pb)"/>
<rect x="853" y="470.5" width="2" height="94.4" fill="url(#pc)"/>
<rect x="855" y="354.2" width="2" height="30.5" fill="#fffffa"/>
<rect x="855" y="384.2" width="2" height="49.2" fill="url(#pa)"/>
<rect x="855" y="432.9" width="2" height="38.0" fill="url(#pb)"/>
<rect x="855" y="470.4" width="2" height="94.8" fill="url(#pc)"/>
<rect x="857" y="354.5" width="2" height="30.5" fill="#fffffa"/>
<rect x="857" y="384.5" width="2" height="49.1" fill="url(#pa)"/>
<rect x="857" y="433.1" width="2" height="37.7" fill="url(#pb)"/>
<rect x="857" y="470.3" width="2" height="95.2" fill="url(#pc)"/>
<rect x="859" y="354.7" width="2" height="30.5" fill="#fffffa"/>
<rect x="859" y="384.7" width="2" height="49.1" fill="url(#pa)"/>
<rect x="859" y="433.3" width="2" height="37.3" fill="url(#pb)"/>
<rect x="859" y="470.1" width="2" height="95.6" fill="url(#pc)"/>
<rect x="861" y="355.0" width="2" height="30.5" fill="#fffffa"/>
<rect x="861" y="385.0" width="2" height="49.0" fill="url(#pa)"/>
<rect x="861" y="433.5" width="2" height="37.0" fill="url(#pb)"/>
<rect x="861" y="470.0" width="2" height="96.0" fill="url(#pc)"/>
<rect x="863" y="355.3" width="2" height="30.5" fill="#fffffa"/>
<rect x="863" y="385.3" width="2" height="48.9" fill="url(#pa)"/>
<rect x="863" y="433.7" width="2" height="36.7" fill="url(#pb)"/>
<rect x="863" y="469.9" width="2" height="96.4" fill="url(#pc)"/>
<rect x="865" y="355.5" width="2" height="30.5" fill="#fffffa"/>
<rect x="865" y="385.5" width="2" height="48.9" fill="url(#pa)"/>
<rect x="865" y="433.9" width="2" height="36.3" fill="url(#pb)"/>
<rect x="865" y="469.7" width="2" height="96.8" fill="url(#pc)"/>
<rect x="867" y="355.8" width="2" height="30.5" fill="#fffffa"/>
<rect x="867" y="385.8" width="2" height="48.8" fill="url(#pa)"/>
<rect x="867" y="434.1" width="2" height="36.0" fill="url(#pb)"/>
<rect x="867" y="469.6" width="2" height="97.2" fill="url(#pc)"/>
<rect x="869" y="356.1" width="2" height="30.5" fill="#fffffa"/>
<rect x="869" y="386.1" width="2" height="48.7" fill="url(#pa)"/>
<rect x="869" y="434.3" width="2" height="35.7" fill="url(#pb)"/>
<rect x="869" y="469.5" width="2" height="97.6" fill="url(#pc)"/>
<rect x="871" y="356.3" width="2" height="30.5" fill="#fffffa"/>
<rect x="871" y="386.3" width="2" height="48.7" fill="url(#pa)"/>
<rect x="871" y="434.5" width="2" height="35.3" fill="url(#pb)"/>
<rect x="871" y="469.3" width="2" height="98.0" fill="url(#pc)"/>
<rect x="873" y="356.6" width="2" height="30.5" fill="#fffffa"/>
<rect x="873" y="386.6" width="2" height="48.6" fill="url(#pa)"/>
<rect x="873" y="434.7" width="2" height="35.0" fill="url(#pb)"/>
<rect x="873" y="469.2" width="2" height="98.4" fill="url(#pc)"/>
<rect x="875" y="356.9" width="2" height="30.5" fill="#fffffa"/>
<rect x="875" y="386.9" width="2" height="48.5" fill="url(#pa)"/>
<rect x="875" y="434.9" width="2" height="34.7" fill="url(#pb)"/>
<rect x="875" y="469.1" width="2" height="98.8" fill="url(#pc)"/>
<rect x="877" y="357.1" width="2" height="30.5" fill="#fffffa"/>
<rect x="877" y="387.1" width="2" height="48.4" fill="url(#pa)"/>
<rect x="877" y="435.0" width="2" height="34.5" fill="url(#pb)"/>
<rect x="877" y="469.0" width="2" height="99.0" fill="url(#pc)"/>
<rect x="879" y="357.2" width="2" height="30.5" fill="#fffffa"/>
<rect x="879" y="387.2" width="2" height="48.3" fill="url(#pa)"/>
<rect x="879" y="435.0" width="2" height="34.6" fill="url(#pb)"/>
<rect x="879" y="469.1" width="2" height="98.9" fill="url(#pc)"/>
<rect x="881" y="357.3" width="2" height="30.5" fill="#fffffa"/>
<rect x="881" y="387.3" width="2" height="48.2" fill="url(#pa)"/>
<rect x="881" y="435.0" width="2" height="34.7" fill="url(#pb)"/>
<rect x="881" y="469.2" width="2" height="98.9" fill="url(#pc)"/>
<rect x="883" y="357.4" width="2" height="30.5" fill="#fffffa"/>
<rect x="883" y="387.4" width="2" height="48.1" fill="url(#pa)"/>
<rect x="883" y="435.0" width="2" height="34.8" fill="url(#pb)"/>
<rect x="883" y="469.3" width="2" height="98.9" fill="url(#pc)"/>
<rect x="885" y="357.5" width="2" height="30.5" fill="#fffffa"/>
<rect x="885" y="387.5" width="2" height="48.0" fill="url(#pa)"/>
<rect x="885" y="435.0" width="2" height="34.8" fill="url(#pb)"/>
<rect x="885" y="469.3" width="2" height="98.8" fill="url(#pc)"/>
<rect x="887" y="357.6" width="2" height="30.5" fill="#fffffa"/>
<rect x="887" y="387.6" width="2" height="47.9" fill="url(#pa)"/>
<rect x="887" y="435.0" width="2" height="34.9" fill="url(#pb)"/>
<rect x="887" y="469.4" width="2" height="98.8" fill="url(#pc)"/>
<rect x="889" y="357.7" width="2" height="30.5" fill="#fffffa"/>
<rect x="889" y="387.7" width="2" height="47.8" fill="url(#pa)"/>
<rect x="889" y="435.0" width="2" height="35.0" fill="url(#pb)"/>
<rect x="889" y="469.5" width="2" height="98.8" fill="url(#pc)"/>
<rect x="891" y="357.8" width="2" height="30.5" fill="#fffffa"/>
<rect x="891" y="387.8" width="2" height="47.7" fill="url(#pa)"/>
<rect x="891" y="435.0" width="2" height="35.0" fill="url(#pb)"/>
<rect x="891" y="469.5" width="2" height="98.7" fill="url(#pc)"/>
<rect x="893" y="357.9" width="2" height="30.5" fill="#fffffa"/>
<rect x="893" y="387.9" width="2" height="47.6" fill="url(#pa)"/>
<rect x="893" y="435.0" width="2" height="35.1" fill="url(#pb)"/>
<rect x="893" y="469.6" width="2" height="98.7" fill="url(#pc)"/>
<rect x="895" y="358.0" width="2" height="30.5" fill="#fffffa"/>
<rect x="895" y="388.0" width="2" height="47.5" fill="url(#pa)"/>
<rect x="895" y="435.0" width="2" height="35.2" fill="url(#pb)"/>
<rect x="895" y="469.7" width="2" height="98.7" fill="url(#pc)"/>
<rect x="897" y="358.1" width="2" height="30.5" fill="#fffffa"/>
<rect x="897" y="388.1" width="2" height="47.4" fill="url(#pa)"/>
<rect x="897" y="435.0" width="2" height="35.3" fill="url(#pb)"/>
<rect x="897" y="469.8" width="2" height="98.6" fill="url(#pc)"/>
<rect x="899" y="358.3" width="2" height="30.5" fill="#fffffa"/>
<rect x="899" y="388.3" width="2" height="47.2" fill="url(#pa)"/>
<rect x="899" y="435.0" width="2" height="35.3" fill="url(#pb)"/>
<rect x="899" y="469.8" width="2" height="98.6" fill="url(#pc)"/>
<rect x="901" y="358.4" width="2" height="30.5" fill="#fffffa"/>
<rect x="901" y="388.4" width="2" height="47.1" fill="url(#pa)"/>
<rect x="901" y="435.0" width="2" height="35.4" fill="url(#pb)"/>
<rect x="901" y="469.9" width="2" height="98.5" fill="url(#pc)"/>
<rect x="903" y="358.5" width="2" height="30.5" fill="#fffffa"/>
<rect x="903" y="388.5" width="2" height="47.0" fill="url(#pa)"/>
<rect x="903" y="435.0" width="2" height="35.5" fill="url(#pb)"/>
<rect x="903" y="470.0" width="2" height="98.5" fill="url(#pc)"/>
<rect x="905" y="358.6" width="2" height="30.5" fill="#fffffa"/>
<rect x="905" y="388.6" width="2" height="46.9" fill="url(#pa)"/>
<rect x="905" y="435.0" width="2" height="35.6" fill="url(#pb)"/>
<rect x="905" y="470.1" width="2" height="98.5" fill="url(#pc)"/>
<rect x="907" y="358.7" width="2" height="30.5" fill="#fffffa"/>
<rect x="907" y="388.7" width="2" height="46.8" fill="url(#pa)"/>
<rect x="907" y="435.0" width="2" height="35.6" fill="url(#pb)"/>
<rect x="907" y="470.1" width="2" height="98.4" fill="url(#pc)"/>
<rect x="909" y="358.8" width="2" height="30.5" fill="#fffffa"/>
<rect x="909" y="388.8" width="2" height="46.7" fill="url(#pa)"/>
<rect x="909" y="435.0" width="2" height="35.7" fill="url(#pb)"/>
<rect x="909" y="470.2" width="2" height="98.4" fill="url(#pc)"/>
<rect x="911" y="358.9" width="2" height="30.5" fill="#fffffa"/>
<rect x="911" y="388.9" width="2" height="46.6" fill="url(#pa)"/>
<rect x="911" y="435.0" width="2" height="35.8" fill="url(#pb)"/>
<rect x="911" y="470.3" width="2" height="98.4" fill="url(#pc)"/>
<rect x="913" y="359.0" width="2" height="30.5" fill="#fffffa"/>
<rect x="913" y="389.0" width="2" height="46.5" fill="url(#pa)"/>
<rect x="913" y="435.0" width="2" height="35.8" fill="url(#pb)"/>
<rect x="913" y="470.3" width="2" height="98.3" fill="url(#pc)"/>
<rect x="915" y="359.1" width="2" height="30.5" fill="#fffffa"/>
<rect x="915" y="389.1" width="2" height="46.4" fill="url(#pa)"/>
<rect x="915" y="435.0" width="2" height="35.9" fill="url(#pb)"/>
<rect x="915" y="470.4" width="2" height="98.3" fill="url(#pc)"/>
<rect x="917" y="359.2" width="2" height="30.5" fill="#fffffa"/>
<rect x="917" y="389.2" width="2" height="46.3" fill="url(#pa)"/>
<rect x="917" y="435.0" width="2" height="36.0" fill="url(#pb)"/>
<rect x="917" y="470.5" width="2" height="98.3" fill="url(#pc)"/>
<rect x="919" y="359.3" width="2" height="30.5" fill="#fffffa"/>
<rect x="919" y="389.3" width="2" height="46.2" fill="url(#pa)"/>
<rect x="919" y="435.0" width="2" height="36.1" fill="url(#pb)"/>
<rect x="919" y="470.6" width="2" height="98.2" fill="url(#pc)"/>
<rect x="921" y="359.5" width="2" height="30.5" fill="#fffffa"/>
<rect x="921" y="389.5" width="2" height="46.0" fill="url(#pa)"/>
<rect x="921" y="435.0" width="2" height="36.1" fill="url(#pb)"/>
<rect x="921" y="470.6" width="2" height="98.2" fill="url(#pc)"/>
<rect x="923" y="359.6" width="2" height="30.5" fill="#fffffa"/>
<rect x="923" y="389.6" width="2" height="45.9" fill="url(#pa)"/>
<rect x="923" y="435.0" width="2" height="36.2" fill="url(#pb)"/>
<rect x="923" y="470.7" width="2" height="98.1" fill="url(#pc)"/>
<rect x="925" y="359.7" width="2" height="30.5" fill="#fffffa"/>
<rect x="925" y="389.7" width="2" height="45.8" fill="url(#pa)"/>
<rect x="925" y="435.0" width="2" height="36.3" fill="url(#pb)"/>
<rect x="925" y="470.8" width="2" height="98.1" fill="url(#pc)"/>
<rect x="927" y="359.8" width="2" height="30.5" fill="#fffffa"/>
<rect x="927" y="389.8" width="2" height="45.7" fill="url(#pa)"/>
<rect x="927" y="435.0" width="2" height="36.4" fill="url(#pb)"/>
<rect x="927" y="470.9" width="2" height="98.1" fill="url(#pc)"/>
<rect x="929" y="359.9" width="2" height="30.5" fill="#fffffa"/>
<rect x="929" y="389.9" width="2" height="45.6" fill="url(#pa)"/>
<rect x="929" y="435.0" width="2" height="36.4" fill="url(#pb)"/>
<rect x="929" y="470.9" width="2" height="98.0" fill="url(#pc)"/>
<rect x="931" y="360.0" width="2" height="30.5" fill="#fffffa"/>
<rect x="931" y="390.0" width="2" height="45.5" fill="url(#pa)"/>
<rect x="931" y="435.0" width="2" height="36.5" fill="url(#pb)"/>
<rect x="931" y="471.0" width="2" height="98.0" fill="url(#pc)"/>
<rect x="933" y="360.0" width="2" height="30.5" fill="#fffffa"/>
<rect x="933" y="390.0" width="2" height="45.5" fill="url(#pa)"/>
<rect x="933" y="435.0" width="2" height="36.6" fill="url(#pb)"/>
<rect x="933" y="471.1" width="2" height="97.8" fill="url(#pc)"/>
<rect x="935" y="360.1" width="2" height="30.5" fill="#fffffa"/>
<rect x="935" y="390.1" width="2" height="45.5" fill="url(#pa)"/>
<rect x="935" y="435.1" width="2" height="36.6" fill="url(#pb)"/>
<rect x="935" y="471.2" width="2" height="97.7" fill="url(#pc)"/>
<rect x="937" y="360.1" width="2" height="30.5" fill="#fffffa"/>
<rect x="937" y="390.1" width="2" height="45.5" fill="url(#pa)"/>
<rect x="937" y="435.1" width="2" height="36.7" fill="url(#pb)"/>
<rect x="937" y="471.3" width="2" height="97.5" fill="url(#pc)"/>
<rect x="939" y="360.1" width="2" height="30.5" fill="#fffffa"/>
<rect x="939" y="390.1" width="2" height="45.5" fill="url(#pa)"/>
<rect x="939" y="435.1" width="2" height="36.7" fill="url(#pb)"/>
<rect x="939" y="471.4" width="2" height="97.4" fill="url(#pc)"/>
<rect x="941" y="360.2" width="2" height="30.5" fill="#fffffa"/>
<rect x="941" y="390.2" width="2" height="45.5" fill="url(#pa)"/>
<rect x="941" y="435.2" width="2" height="36.8" fill="url(#pb)"/>
<rect x="941" y="471.5" width="2" height="97.2" fill="url(#pc)"/>
<rect x="943" y="360.2" width="2" height="30.5" fill="#fffffa"/>
<rect x="943" y="390.2" width="2" height="45.5" fill="url(#pa)"/>
<rect x="943" y="435.2" width="2" height="36.9" fill="url(#pb)"/>
<rect x="943" y="471.6" width="2" height="97.1" fill="url(#pc)"/>
<rect x="945" y="360.2" width="2" height="30.5" fill="#fffffa"/>
<rect x="945" y="390.2" width="2" height="45.5" fill="url(#pa)"/>
<rect x="945" y="435.2" width="2" height="36.9" fill="url(#pb)"/>
<rect x="945" y="471.6" width="2" height="96.9" fill="url(#pc)"/>
<rect x="947" y="360.2" width="2" height="30.5" fill="#fffffa"/>
<rect x="947" y="390.2" width="2" height="45.5" fill="url(#pa)"/>
<rect x="947" y="435.2" width="2" height="37.0" fill="url(#pb)"/>
<rect x="947" y="471.7" width="2" height="96.8" fill="url(#pc)"/>
<rect x="949" y="360.3" width="2" height="30.5" fill="#fffffa"/>
<rect x="949" y="390.3" width="2" height="45.5" fill="url(#pa)"/>
<rect x="949" y="435.3" width="2" height="37.1" fill="url(#pb)"/>
<rect x="949" y="471.8" width="2" height="96.6" fill="url(#pc)"/>
<rect x="951" y="360.3" width="2" height="30.5" fill="#fffffa"/>
<rect x="951" y="390.3" width="2" height="45.5" fill="url(#pa)"/>
<rect x="951" y="435.3" width="2" height="37.1" fill="url(#pb)"/>
<rect x="951" y="471.9" width="2" height="96.5" fill="url(#pc)"/>
<rect x="953" y="360.3" width="2" height="30.5" fill="#fffffa"/>
<rect x="953" y="390.3" width="2" height="45.5" fill="url(#pa)"/>
<rect x="953" y="435.3" width="2" height="37.2" fill="url(#pb)"/>
<rect x="953" y="472.0" width="2" height="96.3" fill="url(#pc)"/>
<rect x="955" y="360.4" width="2" height="30.5" fill="#fffffa"/>
<rect x="955" y="390.4" width="2" height="45.5" fill="url(#pa)"/>
<rect x="955" y="435.4" width="2" height="37.2" fill="url(#pb)"/>
<rect x="955" y="472.1" width="2" height="96.2" fill="url(#pc)"/>
<rect x="957" y="360.4" width="2" height="30.5" fill="#fffffa"/>
<rect x="957" y="390.4" width="2" height="45.5" fill="url(#pa)"/>
<rect x="957" y="435.4" width="2" height="37.3" fill="url(#pb)"/>
<rect x="957" y="472.2" width="2" height="96.0" fill="url(#pc)"/>
<rect x="959" y="360.4" width="2" height="30.5" fill="#fffffa"/>
<rect x="959" y="390.4" width="2" height="45.5" fill="url(#pa)"/>
<rect x="959" y="435.4" width="2" height="37.4" fill="url(#pb)"/>
<rect x="959" y="472.3" width="2" height="95.8" fill="url(#pc)"/>
<rect x="961" y="360.5" width="2" height="30.5" fill="#fffffa"/>
<rect x="961" y="390.5" width="2" height="45.5" fill="url(#pa)"/>
<rect x="961" y="435.5" width="2" height="37.4" fill="url(#pb)"/>
<rect x="961" y="472.4" width="2" height="95.7" fill="url(#pc)"/>
<rect x="963" y="360.5" width="2" height="30.5" fill="#fffffa"/>
<rect x="963" y="390.5" width="2" height="45.5" fill="url(#pa)"/>
<rect x="963" y="435.5" width="2" height="37.5" fill="url(#pb)"/>
<rect x="963" y="472.5" width="2" height="95.5" fill="url(#pc)"/>
<rect x="965" y="360.5" width="2" height="30.5" fill="#fffffa"/>
<rect x="965" y="390.5" width="2" height="45.5" fill="url(#pa)"/>
<rect x="965" y="435.5" width="2" height="37.5" fill="url(#pb)"/>
<rect x="965" y="472.6" width="2" height="95.4" fill="url(#pc)"/>
<rect x="967" y="360.6" width="2" height="30.5" fill="#fffffa"/>
<rect x="967" y="390.6" width="2" height="45.5" fill="url(#pa)"/>
<rect x="967" y="435.6" width="2" height="37.6" fill="url(#pb)"/>
<rect x="967" y="472.7" width="2" height="95.2" fill="url(#pc)"/>
<rect x="969" y="360.6" width="2" height="30.5" fill="#fffffa"/>
<rect x="969" y="390.6" width="2" height="45.5" fill="url(#pa)"/>
<rect x="969" y="435.6" width="2" height="37.7" fill="url(#pb)"/>
<rect x="969" y="472.8" width="2" height="95.1" fill="url(#pc)"/>
<rect x="971" y="360.6" width="2" height="30.5" fill="#fffffa"/>
<rect x="971" y="390.6" width="2" height="45.5" fill="url(#pa)"/>
<rect x="971" y="435.6" width="2" height="37.7" fill="url(#pb)"/>
<rect x="971" y="472.8" width="2" height="94.9" fill="url(#pc)"/>
<rect x="973" y="360.6" width="2" height="30.5" fill="#fffffa"/>
<rect x="973" y="390.6" width="2" height="45.5" fill="url(#pa)"/>
<rect x="973" y="435.6" width="2" height="37.8" fill="url(#pb)"/>
<rect x="973" y="472.9" width="2" height="94.8" fill="url(#pc)"/>
<rect x="975" y="360.7" width="2" height="30.5" fill="#fffffa"/>
<rect x="975" y="390.7" width="2" height="45.5" fill="url(#pa)"/>
<rect x="975" y="435.7" width="2" height="37.9" fill="url(#pb)"/>
<rect x="975" y="473.0" width="2" height="94.6" fill="url(#pc)"/>
<rect x="977" y="360.7" width="2" height="30.5" fill="#fffffa"/>
<rect x="977" y="390.7" width="2" height="45.5" fill="url(#pa)"/>
<rect x="977" y="435.7" width="2" height="37.9" fill="url(#pb)"/>
<rect x="977" y="473.1" width="2" height="94.5" fill="url(#pc)"/>
<rect x="979" y="360.7" width="2" height="30.5" fill="#fffffa"/>
<rect x="979" y="390.7" width="2" height="45.5" fill="url(#pa)"/>
<rect x="979" y="435.7" width="2" height="38.0" fill="url(#pb)"/>
<rect x="979" y="473.2" width="2" height="94.3" fill="url(#pc)"/>
<rect x="981" y="360.8" width="2" height="30.5" fill="#fffffa"/>
<rect x="981" y="390.8" width="2" height="45.5" fill="url(#pa)"/>
<rect x="981" y="435.8" width="2" height="38.0" fill="url(#pb)"/>
<rect x="981" y="473.3" width="2" height="94.2" fill="url(#pc)"/>
<rect x="983" y="360.8" width="2" height="30.5" fill="#fffffa"/>
<rect x="983" y="390.8" width="2" height="45.5" fill="url(#pa)"/>
<rect x="983" y="435.8" width="2" height="38.1" fill="url(#pb)"/>
<rect x="983" y="473.4" width="2" height="94.0" fill="url(#pc)"/>
<rect x="985" y="360.8" width="2" height="30.5" fill="#fffffa"/>
<rect x="985" y="390.8" width="2" height="45.5" fill="url(#pa)"/>
<rect x="985" y="435.8" width="2" height="38.2" fill="url(#pb)"/>
<rect x="985" y="473.5" width="2" height="93.8" fill="url(#pc)"/>
<rect x="987" y="360.9" width="2" height="30.5" fill="#fffffa"/>
<rect x="987" y="390.9" width="2" height="45.5" fill="url(#pa)"/>
<rect x="987" y="435.9" width="2" height="38.2" fill="url(#pb)"/>
<rect x="987" y="473.6" width="2" height="93.7" fill="url(#pc)"/>
<rect x="989" y="360.9" width="2" height="30.5" fill="#fffffa"/>
<rect x="989" y="390.9" width="2" height="45.5" fill="url(#pa)"/>
<rect x="989" y="435.9" width="2" height="38.3" fill="url(#pb)"/>
<rect x="989" y="473.7" width="2" height="93.5" fill="url(#pc)"/>
<rect x="991" y="360.9" width="2" height="30.5" fill="#fffffa"/>
<rect x="991" y="390.9" width="2" height="45.5" fill="url(#pa)"/>
<rect x="991" y="435.9" width="2" height="38.3" fill="url(#pb)"/>
<rect x="991" y="473.8" width="2" height="93.4" fill="url(#pc)"/>
<rect x="993" y="361.0" width="2" height="30.5" fill="#fffffa"/>
<rect x="993" y="391.0" width="2" height="45.5" fill="url(#pa)"/>
<rect x="993" y="436.0" width="2" height="38.4" fill="url(#pb)"/>
<rect x="993" y="473.9" width="2" height="93.2" fill="url(#pc)"/>
<rect x="995" y="361.0" width="2" height="30.5" fill="#fffffa"/>
<rect x="995" y="391.0" width="2" height="45.5" fill="url(#pa)"/>
<rect x="995" y="436.0" width="2" height="38.5" fill="url(#pb)"/>
<rect x="995" y="474.0" width="2" height="93.1" fill="url(#pc)"/>
<rect x="997" y="361.0" width="2" height="30.5" fill="#fffffa"/>
<rect x="997" y="391.0" width="2" height="45.5" fill="url(#pa)"/>
<rect x="997" y="436.0" width="2" height="38.5" fill="url(#pb)"/>
<rect x="997" y="474.0" width="2" height="92.9" fill="url(#pc)"/>
<rect x="999" y="361.1" width="2" height="30.5" fill="#fffffa"/>
<rect x="999" y="391.1" width="2" height="45.5" fill="url(#pa)"/>
<rect x="999" y="436.0" width="2" height="38.5" fill="url(#pb)"/>
<rect x="999" y="474.0" width="2" height="92.8" fill="url(#pc)"/>
<rect x="1001" y="361.1" width="2" height="30.5" fill="#fffffa"/>
<rect x="1001" y="391.1" width="2" height="45.4" fill="url(#pa)"/>
<rect x="1001" y="436.1" width="2" height="38.5" fill="url(#pb)"/>
<rect x="1001" y="474.1" width="2" height="92.7" fill="url(#pc)"/>
<rect x="1003" y="361.2" width="2" height="30.5" fill="#fffffa"/>
<rect x="1003" y="391.2" width="2" height="45.4" fill="url(#pa)"/>
<rect x="1003" y="436.1" width="2" height="38.5" fill="url(#pb)"/>
<rect x="1003" y="474.1" width="2" height="92.6" fill="url(#pc)"/>
<rect x="1005" y="361.2" width="2" height="30.5" fill="#fffffa"/>
<rect x="1005" y="391.2" width="2" height="45.4" fill="url(#pa)"/>
<rect x="1005" y="436.1" width="2" height="38.5" fill="url(#pb)"/>
<rect x="1005" y="474.1" width="2" height="92.4" fill="url(#pc)"/>
<rect x="1007" y="361.3" width="2" height="30.5" fill="#fffffa"/>
<rect x="1007" y="391.3" width="2" height="45.4" fill="url(#pa)"/>
<rect x="1007" y="436.1" width="2" height="38.5" fill="url(#pb)"/>
<rect x="1007" y="474.1" width="2" height="92.3" fill="url(#pc)"/>
<rect x="1009" y="361.3" width="2" height="30.5" fill="#fffffa"/>
<rect x="1009" y="391.3" width="2" height="45.3" fill="url(#pa)"/>
<rect x="1009" y="436.2" width="2" height="38.5" fill="url(#pb)"/>
<rect x="1009" y="474.2" width="2" height="92.2" fill="url(#pc)"/>
<rect x="1011" y="361.4" width="2" height="30.5" fill="#fffffa"/>
<rect x="1011" y="391.4" width="2" height="45.3" fill="url(#pa)"/>
<rect x="1011" y="436.2" width="2" height="38.5" fill="url(#pb)"/>
<rect x="1011" y="474.2" width="2" height="92.1" fill="url(#pc)"/>
<rect x="1013" y="361.4" width="2" height="30.5" fill="#fffffa"/>
<rect x="1013" y="391.4" width="2" height="45.3" fill="url(#pa)"/>
<rect x="1013" y="436.2" width="2" height="38.5" fill="url(#pb)"/>
<rect x="1013" y="474.2" width="2" height="91.9" fill="url(#pc)"/>
<rect x="1015" y="361.5" width="2" height="30.5" fill="#fffffa"/>
<rect x="1015" y="391.5" width="2" height="45.3" fill="url(#pa)"/>
<rect x="1015" y="436.2" width="2" height="38.5" fill="url(#pb)"/>
<rect x="1015" y="474.2" width="2" height="91.8" fill="url(#pc)"/>
<rect x="1017" y="361.5" width="2" height="30.5" fill="#fffffa"/>
<rect x="1017" y="391.5" width="2" height="45.2" fill="url(#pa)"/>
<rect x="1017" y="436.3" width="2" height="38.5" fill="url(#pb)"/>
<rect x="1017" y="474.3" width="2" height="91.7" fill="url(#pc)"/>
<rect x="1019" y="361.6" width="2" height="30.5" fill="#fffffa"/>
<rect x="1019" y="391.6" width="2" height="45.2" fill="url(#pa)"/>
<rect x="1019" y="436.3" width="2" height="38.5" fill="url(#pb)"/>
<rect x="1019" y="474.3" width="2" height="91.5" fill="url(#pc)"/>
<rect x="1021" y="361.6" width="2" height="30.5" fill="#fffffa"/>
<rect x="1021" y="391.6" width="2" height="45.2" fill="url(#pa)"/>
<rect x="1021" y="436.3" width="2" height="38.5" fill="url(#pb)"/>
<rect x="1021" y="474.3" width="2" height="91.4" fill="url(#pc)"/>
<rect x="1023" y="361.7" width="2" height="30.5" fill="#fffffa"/>
<rect x="1023" y="391.7" width="2" height="45.2" fill="url(#pa)"/>
<rect x="1023" y="436.3" width="2" height="38.5" fill="url(#pb)"/>
<rect x="1023" y="474.3" width="2" height="91.3" fill="url(#pc)"/>
<rect x="1025" y="361.7" width="2" height="30.5" fill="#fffffa"/>
<rect x="1025" y="391.7" width="2" height="45.1" fill="url(#pa)"/>
<rect x="1025" y="436.4" width="2" height="38.5" fill="url(#pb)"/>
<rect x="1025" y="474.4" width="2" height="91.2" fill="url(#pc)"/>
<rect x="1027" y="361.8" width="2" height="30.5" fill="#fffffa"/>
<rect x="1027" y="391.8" width="2" height="45.1" fill="url(#pa)"/>
<rect x="1027" y="436.4" width="2" height="38.5" fill="url(#pb)"/>
<rect x="1027" y="474.4" width="2" height="91.0" fill="url(#pc)"/>
<rect x="1029" y="361.8" width="2" height="30.5" fill="#fffffa"/>
<rect x="1029" y="391.8" width="2" height="45.1" fill="url(#pa)"/>
<rect x="1029" y="436.4" width="2" height="38.5" fill="url(#pb)"/>
<rect x="1029" y="474.4" width="2" height="90.9" fill="url(#pc)"/>
<rect x="1031" y="361.9" width="2" height="30.5" fill="#fffffa"/>
<rect x="1031" y="391.9" width="2" height="45.1" fill="url(#pa)"/>
<rect x="1031" y="436.4" width="2" height="38.5" fill="url(#pb)"/>
<rect x="1031" y="474.4" width="2" height="90.8" fill="url(#pc)"/>
<rect x="1033" y="361.9" width="2" height="30.5" fill="#fffffa"/>
<rect x="1033" y="391.9" width="2" height="45.0" fill="url(#pa)"/>
<rect x="1033" y="436.5" width="2" height="38.5" fill="url(#pb)"/>
<rect x="1033" y="474.5" width="2" height="90.7" fill="url(#pc)"/>
<rect x="1035" y="362.0" width="2" height="30.5" fill="#fffffa"/>
<rect x="1035" y="392.0" width="2" height="45.0" fill="url(#pa)"/>
<rect x="1035" y="436.5" width="2" height="38.5" fill="url(#pb)"/>
<rect x="1035" y="474.5" width="2" height="90.5" fill="url(#pc)"/>
<rect x="1037" y="362.0" width="2" height="30.5" fill="#fffffa"/>
<rect x="1037" y="392.0" width="2" height="45.0" fill="url(#pa)"/>
<rect x="1037" y="436.5" width="2" height="38.5" fill="url(#pb)"/>
<rect x="1037" y="474.5" width="2" height="90.4" fill="url(#pc)"/>
<rect x="1039" y="362.1" width="2" height="30.5" fill="#fffffa"/>
<rect x="1039" y="392.1" width="2" height="45.0" fill="url(#pa)"/>
<rect x="1039" y="436.5" width="2" height="38.5" fill="url(#pb)"/>
<rect x="1039" y="474.5" width="2" height="90.3" fill="url(#pc)"/>
<rect x="1041" y="362.1" width="2" height="30.5" fill="#fffffa"/>
<rect x="1041" y="392.1" width="2" height="44.9" fill="url(#pa)"/>
<rect x="1041" y="436.6" width="2" height="38.5" fill="url(#pb)"/>
<rect x="1041" y="474.6" width="2" height="90.2" fill="url(#pc)"/>
<rect x="1043" y="362.2" width="2" height="30.5" fill="#fffffa"/>
<rect x="1043" y="392.2" width="2" height="44.9" fill="url(#pa)"/>
<rect x="1043" y="436.6" width="2" height="38.5" fill="url(#pb)"/>
<rect x="1043" y="474.6" width="2" height="90.0" fill="url(#pc)"/>
<rect x="1045" y="362.2" width="2" height="30.5" fill="#fffffa"/>
<rect x="1045" y="392.2" width="2" height="44.9" fill="url(#pa)"/>
<rect x="1045" y="436.6" width="2" height="38.5" fill="url(#pb)"/>
<rect x="1045" y="474.6" width="2" height="89.9" fill="url(#pc)"/>
<rect x="1047" y="362.3" width="2" height="30.5" fill="#fffffa"/>
<rect x="1047" y="392.3" width="2" height="44.9" fill="url(#pa)"/>
<rect x="1047" y="436.6" width="2" height="38.5" fill="url(#pb)"/>
<rect x="1047" y="474.6" width="2" height="89.8" fill="url(#pc)"/>
<rect x="1049" y="362.3" width="2" height="30.5" fill="#fffffa"/>
<rect x="1049" y="392.3" width="2" height="44.8" fill="url(#pa)"/>
<rect x="1049" y="436.7" width="2" height="38.5" fill="url(#pb)"/>
<rect x="1049" y="474.7" width="2" height="89.6" fill="url(#pc)"/>
<rect x="1051" y="362.4" width="2" height="30.5" fill="#fffffa"/>
<rect x="1051" y="392.4" width="2" height="44.8" fill="url(#pa)"/>
<rect x="1051" y="436.7" width="2" height="38.5" fill="url(#pb)"/>
<rect x="1051" y="474.7" width="2" height="89.5" fill="url(#pc)"/>
<rect x="1053" y="362.4" width="2" height="30.5" fill="#fffffa"/>
<rect x="1053" y="392.4" width="2" height="44.8" fill="url(#pa)"/>
<rect x="1053" y="436.7" width="2" height="38.5" fill="url(#pb)"/>
<rect x="1053" y="474.7" width="2" height="89.4" fill="url(#pc)"/>
<rect x="1055" y="362.5" width="2" height="30.5" fill="#fffffa"/>
<rect x="1055" y="392.5" width="2" height="44.8" fill="url(#pa)"/>
<rect x="1055" y="436.7" width="2" height="38.5" fill="url(#pb)"/>
<rect x="1055" y="474.7" width="2" height="89.3" fill="url(#pc)"/>
<rect x="1057" y="362.5" width="2" height="30.5" fill="#fffffa"/>
<rect x="1057" y="392.5" width="2" height="44.7" fill="url(#pa)"/>
<rect x="1057" y="436.8" width="2" height="38.5" fill="url(#pb)"/>
<rect x="1057" y="474.8" width="2" height="89.1" fill="url(#pc)"/>
<rect x="1059" y="362.6" width="2" height="30.5" fill="#fffffa"/>
<rect x="1059" y="392.6" width="2" height="44.7" fill="url(#pa)"/>
<rect x="1059" y="436.8" width="2" height="38.5" fill="url(#pb)"/>
<rect x="1059" y="474.8" width="2" height="89.0" fill="url(#pc)"/>
<rect x="1061" y="362.6" width="2" height="30.5" fill="#fffffa"/>
<rect x="1061" y="392.6" width="2" height="44.7" fill="url(#pa)"/>
<rect x="1061" y="436.8" width="2" height="38.5" fill="url(#pb)"/>
<rect x="1061" y="474.8" width="2" height="88.9" fill="url(#pc)"/>
<rect x="1063" y="362.7" width="2" height="30.5" fill="#fffffa"/>
<rect x="1063" y="392.7" width="2" height="44.7" fill="url(#pa)"/>
<rect x="1063" y="436.8" width="2" height="38.5" fill="url(#pb)"/>
<rect x="1063" y="474.8" width="2" height="88.8" fill="url(#pc)"/>
<rect x="1065" y="362.7" width="2" height="30.5" fill="#fffffa"/>
<rect x="1065" y="392.7" width="2" height="44.6" fill="url(#pa)"/>
<rect x="1065" y="436.9" width="2" height="38.5" fill="url(#pb)"/>
<rect x="1065" y="474.9" width="2" height="88.6" fill="url(#pc)"/>
<rect x="1067" y="362.8" width="2" height="30.5" fill="#fffffa"/>
<rect x="1067" y="392.8" width="2" height="44.6" fill="url(#pa)"/>
<rect x="1067" y="436.9" width="2" height="38.5" fill="url(#pb)"/>
<rect x="1067" y="474.9" width="2" height="88.5" fill="url(#pc)"/>
<rect x="1069" y="362.8" width="2" height="30.5" fill="#fffffa"/>
<rect x="1069" y="392.8" width="2" height="44.6" fill="url(#pa)"/>
<rect x="1069" y="436.9" width="2" height="38.5" fill="url(#pb)"/>
<rect x="1069" y="474.9" width="2" height="88.4" fill="url(#pc)"/>
<rect x="1071" y="362.9" width="2" height="30.5" fill="#fffffa"/>
<rect x="1071" y="392.9" width="2" height="44.6" fill="url(#pa)"/>
<rect x="1071" y="436.9" width="2" height="38.5" fill="url(#pb)"/>
<rect x="1071" y="474.9" width="2" height="88.3" fill="url(#pc)"/>
<rect x="1073" y="362.9" width="2" height="30.5" fill="#fffffa"/>
<rect x="1073" y="392.9" width="2" height="44.5" fill="url(#pa)"/>
<rect x="1073" y="437.0" width="2" height="38.5" fill="url(#pb)"/>
<rect x="1073" y="475.0" width="2" height="88.1" fill="url(#pc)"/>
<rect x="1075" y="363.0" width="2" height="30.5" fill="#fffffa"/>
<rect x="1075" y="393.0" width="2" height="44.5" fill="url(#pa)"/>
<rect x="1075" y="437.0" width="2" height="38.5" fill="url(#pb)"/>
<rect x="1075" y="475.0" width="2" height="88.0" fill="url(#pc)"/>
</g></g>
<g clip-path="url(#cr)">
<linearGradient id="sg0" x1="0" y1="0" x2="0" y2="1"><stop offset="0" stop-color="#ffffff" stop-opacity="0"/><stop offset="0.30" stop-color="#ffffff" stop-opacity="1"/><stop offset="0.45" stop-color="#ffffff" stop-opacity="1"/><stop offset="1" stop-color="#ffffff" stop-opacity="0"/></linearGradient>
<polygon points="197.0,411.0 417.0,411.0 401.0,500.0 181.0,500.0" fill="url(#sg0)" opacity="0.20" filter="url(#bl6_0)"/>
<linearGradient id="sg1" x1="0" y1="0" x2="0" y2="1"><stop offset="0" stop-color="#ffffff" stop-opacity="0"/><stop offset="0.21" stop-color="#ffffff" stop-opacity="1"/><stop offset="1.00" stop-color="#ffffff" stop-opacity="1"/><stop offset="1" stop-color="#ffffff" stop-opacity="1"/></linearGradient>
<polygon points="347.0,475.0 401.0,475.0 371.1,561.0 324.6,561.0" fill="url(#sg1)" opacity="0.12" filter="url(#bl5_0)"/>
<linearGradient id="sg2" x1="0" y1="0" x2="0" y2="1"><stop offset="0" stop-color="#ffffff" stop-opacity="0"/><stop offset="0.25" stop-color="#ffffff" stop-opacity="1"/><stop offset="0.70" stop-color="#ffffff" stop-opacity="1"/><stop offset="1" stop-color="#ffffff" stop-opacity="0"/></linearGradient>
<polygon points="517.0,415.0 577.0,415.0 582.0,535.0 497.0,535.0" fill="url(#sg2)" opacity="0.10" filter="url(#bl6_0)"/>
<linearGradient id="sg3" x1="0" y1="0" x2="0" y2="1"><stop offset="0" stop-color="#62a48c" stop-opacity="0"/><stop offset="0.08" stop-color="#62a48c" stop-opacity="1"/><stop offset="1.00" stop-color="#62a48c" stop-opacity="1"/><stop offset="1" stop-color="#62a48c" stop-opacity="1"/></linearGradient>
<polygon points="344.0,385.0 353.0,385.0 338.8,561.0 327.2,561.0" fill="url(#sg3)" opacity="0.42" filter="url(#bl2_0)"/>
<linearGradient id="sg4" x1="0" y1="0" x2="0" y2="1"><stop offset="0" stop-color="#77708c" stop-opacity="0"/><stop offset="0.15" stop-color="#77708c" stop-opacity="1"/><stop offset="1.00" stop-color="#77708c" stop-opacity="1"/><stop offset="1" stop-color="#77708c" stop-opacity="1"/></linearGradient>
<polygon points="334.0,389.0 343.0,389.0 323.5,561.0 309.2,561.0" fill="url(#sg4)" opacity="0.34" filter="url(#bl2_5)"/>
<linearGradient id="sg5" x1="0" y1="0" x2="0" y2="1"><stop offset="0" stop-color="#ffffff" stop-opacity="0"/><stop offset="0.22" stop-color="#ffffff" stop-opacity="1"/><stop offset="1.00" stop-color="#ffffff" stop-opacity="1"/><stop offset="1" stop-color="#ffffff" stop-opacity="1"/></linearGradient>
<polygon points="356.0,415.0 377.0,415.0 355.0,561.0 339.5,561.0" fill="url(#sg5)" opacity="0.22" filter="url(#bl3_0)"/>
<linearGradient id="sg6" x1="0" y1="0" x2="0" y2="1"><stop offset="0" stop-color="#6f6685" stop-opacity="0"/><stop offset="0.20" stop-color="#6f6685" stop-opacity="1"/><stop offset="0.70" stop-color="#6f6685" stop-opacity="1"/><stop offset="1" stop-color="#6f6685" stop-opacity="0"/></linearGradient>
<polygon points="379.0,440.0 382.0,440.0 378.0,500.0 375.0,500.0" fill="url(#sg6)" opacity="0.22" filter="url(#bl1_2)"/>
<linearGradient id="sg7" x1="0" y1="0" x2="0" y2="1"><stop offset="0" stop-color="#6c6484" stop-opacity="0"/><stop offset="0.30" stop-color="#6c6484" stop-opacity="1"/><stop offset="0.90" stop-color="#6c6484" stop-opacity="1"/><stop offset="1" stop-color="#6c6484" stop-opacity="0"/></linearGradient>
<polygon points="401.0,430.0 420.0,430.0 401.0,521.0 385.0,521.0" fill="url(#sg7)" opacity="0.36" filter="url(#bl3_0)"/>
<linearGradient id="sg8" x1="0" y1="0" x2="0" y2="1"><stop offset="0" stop-color="#6e6a86" stop-opacity="0"/><stop offset="0.30" stop-color="#6e6a86" stop-opacity="1"/><stop offset="0.80" stop-color="#6e6a86" stop-opacity="1"/><stop offset="1" stop-color="#6e6a86" stop-opacity="0"/></linearGradient>
<polygon points="455.0,415.0 473.0,415.0 467.0,527.0 449.0,527.0" fill="url(#sg8)" opacity="0.26" filter="url(#bl3_5)"/>
<linearGradient id="sg9" x1="0" y1="0" x2="0" y2="1"><stop offset="0" stop-color="#5e5a78" stop-opacity="0"/><stop offset="0.20" stop-color="#5e5a78" stop-opacity="1"/><stop offset="0.70" stop-color="#5e5a78" stop-opacity="1"/><stop offset="1" stop-color="#5e5a78" stop-opacity="0"/></linearGradient>
<polygon points="477.0,440.0 482.0,440.0 471.0,521.0 466.0,521.0" fill="url(#sg9)" opacity="0.16" filter="url(#bl2_0)"/>
<linearGradient id="sg10" x1="0" y1="0" x2="0" y2="1"><stop offset="0" stop-color="#7a9c88" stop-opacity="0"/><stop offset="0.15" stop-color="#7a9c88" stop-opacity="1"/><stop offset="0.70" stop-color="#7a9c88" stop-opacity="1"/><stop offset="1" stop-color="#7a9c88" stop-opacity="0"/></linearGradient>
<polygon points="481.0,380.0 487.0,380.0 486.0,515.0 479.0,515.0" fill="url(#sg10)" opacity="0.18" filter="url(#bl2_5)"/>
<linearGradient id="sg11" x1="0" y1="0" x2="0" y2="1"><stop offset="0" stop-color="#7a9c88" stop-opacity="0"/><stop offset="0.15" stop-color="#7a9c88" stop-opacity="1"/><stop offset="0.70" stop-color="#7a9c88" stop-opacity="1"/><stop offset="1" stop-color="#7a9c88" stop-opacity="0"/></linearGradient>
<polygon points="496.0,380.0 503.0,380.0 502.0,515.0 494.0,515.0" fill="url(#sg11)" opacity="0.16" filter="url(#bl2_5)"/>
<linearGradient id="sg12" x1="0" y1="0" x2="0" y2="1"><stop offset="0" stop-color="#ffffff" stop-opacity="0"/><stop offset="0.20" stop-color="#ffffff" stop-opacity="1"/><stop offset="0.70" stop-color="#ffffff" stop-opacity="1"/><stop offset="1" stop-color="#ffffff" stop-opacity="0"/></linearGradient>
<polygon points="487.0,395.0 496.0,395.0 495.0,515.0 486.0,515.0" fill="url(#sg12)" opacity="0.14" filter="url(#bl2_0)"/>
<linearGradient id="sg13" x1="0" y1="0" x2="0" y2="1"><stop offset="0" stop-color="#6a6288" stop-opacity="0"/><stop offset="0.10" stop-color="#6a6288" stop-opacity="1"/><stop offset="1.00" stop-color="#6a6288" stop-opacity="1"/><stop offset="1" stop-color="#6a6288" stop-opacity="1"/></linearGradient>
<polygon points="196.0,421.0 200.0,421.0 174.9,545.0 168.0,545.0" fill="url(#sg13)" opacity="0.22" filter="url(#bl1_5)"/>
<linearGradient id="sg14" x1="0" y1="0" x2="0" y2="1"><stop offset="0" stop-color="#ffffff" stop-opacity="0"/><stop offset="0.20" stop-color="#ffffff" stop-opacity="1"/><stop offset="1.00" stop-color="#ffffff" stop-opacity="1"/><stop offset="1" stop-color="#ffffff" stop-opacity="1"/></linearGradient>
<polygon points="201.0,425.0 219.0,425.0 204.1,547.0 177.2,547.0" fill="url(#sg14)" opacity="0.18" filter="url(#bl3_0)"/>
<linearGradient id="sg15" x1="0" y1="0" x2="0" y2="1"><stop offset="0" stop-color="#746c8c" stop-opacity="0"/><stop offset="0.19" stop-color="#746c8c" stop-opacity="1"/><stop offset="1.00" stop-color="#746c8c" stop-opacity="1"/><stop offset="1" stop-color="#746c8c" stop-opacity="1"/></linearGradient>
<polygon points="252.0,445.0 271.0,445.0 267.8,551.0 244.0,551.0" fill="url(#sg15)" opacity="0.30" filter="url(#bl3_5)"/>
<linearGradient id="sg16" x1="0" y1="0" x2="0" y2="1"><stop offset="0" stop-color="#7a6c90" stop-opacity="0"/><stop offset="0.20" stop-color="#7a6c90" stop-opacity="1"/><stop offset="1.00" stop-color="#7a6c90" stop-opacity="1"/><stop offset="1" stop-color="#7a6c90" stop-opacity="1"/></linearGradient>
<polygon points="223.0,435.0 233.0,435.0 214.7,551.0 201.6,551.0" fill="url(#sg16)" opacity="0.18" filter="url(#bl3_0)"/>
<linearGradient id="sg17" x1="0" y1="0" x2="0" y2="1"><stop offset="0" stop-color="#7a8890" stop-opacity="0"/><stop offset="0.15" stop-color="#7a8890" stop-opacity="1"/><stop offset="1.00" stop-color="#7a8890" stop-opacity="1"/><stop offset="1" stop-color="#7a8890" stop-opacity="1"/></linearGradient>
<polygon points="293.0,395.0 301.0,395.0 294.3,555.0 285.0,555.0" fill="url(#sg17)" opacity="0.16" filter="url(#bl2_5)"/>
<linearGradient id="sg18" x1="0" y1="0" x2="0" y2="1"><stop offset="0" stop-color="#7a8890" stop-opacity="0"/><stop offset="0.15" stop-color="#7a8890" stop-opacity="1"/><stop offset="1.00" stop-color="#7a8890" stop-opacity="1"/><stop offset="1" stop-color="#7a8890" stop-opacity="1"/></linearGradient>
<polygon points="315.0,395.0 323.0,395.0 309.7,555.0 299.0,555.0" fill="url(#sg18)" opacity="0.14" filter="url(#bl2_5)"/>
<linearGradient id="sg19" x1="0" y1="0" x2="0" y2="1"><stop offset="0" stop-color="#ffffff" stop-opacity="0"/><stop offset="0.15" stop-color="#ffffff" stop-opacity="1"/><stop offset="0.65" stop-color="#ffffff" stop-opacity="1"/><stop offset="1" stop-color="#ffffff" stop-opacity="0"/></linearGradient>
<polygon points="557.0,399.0 577.0,399.0 577.0,520.0 523.0,520.0" fill="url(#sg19)" opacity="0.20" filter="url(#bl3_5)"/>
<linearGradient id="sg20" x1="0" y1="0" x2="0" y2="1"><stop offset="0" stop-color="#77778a" stop-opacity="0"/><stop offset="0.45" stop-color="#77778a" stop-opacity="1"/><stop offset="0.70" stop-color="#77778a" stop-opacity="1"/><stop offset="1" stop-color="#77778a" stop-opacity="0"/></linearGradient>
<polygon points="579.0,405.0 609.0,405.0 619.0,537.0 577.0,537.0" fill="url(#sg20)" opacity="0.40" filter="url(#bl5_0)"/>
<linearGradient id="sg21" x1="0" y1="0" x2="0" y2="1"><stop offset="0" stop-color="#ffffff" stop-opacity="0"/><stop offset="0.20" stop-color="#ffffff" stop-opacity="1"/><stop offset="0.70" stop-color="#ffffff" stop-opacity="1"/><stop offset="1" stop-color="#ffffff" stop-opacity="0"/></linearGradient>
<polygon points="559.0,396.0 563.0,396.0 579.0,425.0 549.0,425.0" fill="url(#sg21)" opacity="0.22" filter="url(#bl2_0)"/>
<linearGradient id="sg22" x1="0" y1="0" x2="0" y2="1"><stop offset="0" stop-color="#808688" stop-opacity="0"/><stop offset="0.40" stop-color="#808688" stop-opacity="1"/><stop offset="0.60" stop-color="#808688" stop-opacity="1"/><stop offset="1" stop-color="#808688" stop-opacity="0"/></linearGradient>
<polygon points="575.0,397.0 601.0,397.0 597.0,435.0 583.0,435.0" fill="url(#sg22)" opacity="0.16" filter="url(#bl4_0)"/>
<linearGradient id="sg23" x1="0" y1="0" x2="0" y2="1"><stop offset="0" stop-color="#5a4a74" stop-opacity="0"/><stop offset="0.20" stop-color="#5a4a74" stop-opacity="1"/><stop offset="0.70" stop-color="#5a4a74" stop-opacity="1"/><stop offset="1" stop-color="#5a4a74" stop-opacity="0"/></linearGradient>
<polygon points="613.0,450.0 618.0,450.0 629.0,531.0 623.0,531.0" fill="url(#sg23)" opacity="0.16" filter="url(#bl2_0)"/>
<linearGradient id="sg24" x1="0" y1="0" x2="0" y2="1"><stop offset="0" stop-color="#5a4a74" stop-opacity="0"/><stop offset="0.20" stop-color="#5a4a74" stop-opacity="1"/><stop offset="0.70" stop-color="#5a4a74" stop-opacity="1"/><stop offset="1" stop-color="#5a4a74" stop-opacity="0"/></linearGradient>
<polygon points="657.0,471.0 662.0,471.0 684.0,515.0 678.0,515.0" fill="url(#sg24)" opacity="0.12" filter="url(#bl2_0)"/>
<linearGradient id="sg25" x1="0" y1="0" x2="0" y2="1"><stop offset="0" stop-color="#76768a" stop-opacity="0"/><stop offset="0.20" stop-color="#76768a" stop-opacity="1"/><stop offset="0.70" stop-color="#76768a" stop-opacity="1"/><stop offset="1" stop-color="#76768a" stop-opacity="0"/></linearGradient>
<polygon points="747.0,385.0 761.0,385.0 783.0,540.0 765.0,540.0" fill="url(#sg25)" opacity="0.24" filter="url(#bl5_0)"/>
<linearGradient id="sg26" x1="0" y1="0" x2="0" y2="1"><stop offset="0" stop-color="#ffffff" stop-opacity="0"/><stop offset="0.20" stop-color="#ffffff" stop-opacity="1"/><stop offset="0.70" stop-color="#ffffff" stop-opacity="1"/><stop offset="1" stop-color="#ffffff" stop-opacity="0"/></linearGradient>
<polygon points="761.0,385.0 773.0,385.0 797.0,540.0 783.0,540.0" fill="url(#sg26)" opacity="0.12" filter="url(#bl3_0)"/>
<linearGradient id="sg27" x1="0" y1="0" x2="0" y2="1"><stop offset="0" stop-color="#75758a" stop-opacity="0"/><stop offset="0.25" stop-color="#75758a" stop-opacity="1"/><stop offset="0.70" stop-color="#75758a" stop-opacity="1"/><stop offset="1" stop-color="#75758a" stop-opacity="0"/></linearGradient>
<polygon points="773.0,395.0 795.0,395.0 821.0,545.0 795.0,545.0" fill="url(#sg27)" opacity="0.26" filter="url(#bl6_0)"/>
<linearGradient id="sg28" x1="0" y1="0" x2="0" y2="1"><stop offset="0" stop-color="#5a4a74" stop-opacity="0"/><stop offset="0.20" stop-color="#5a4a74" stop-opacity="1"/><stop offset="0.70" stop-color="#5a4a74" stop-opacity="1"/><stop offset="1" stop-color="#5a4a74" stop-opacity="0"/></linearGradient>
<polygon points="833.0,483.0 835.0,483.0 858.0,533.0 855.0,533.0" fill="url(#sg28)" opacity="0.16" filter="url(#bl1_5)"/>
<linearGradient id="sg29" x1="0" y1="0" x2="0" y2="1"><stop offset="0" stop-color="#ffffff" stop-opacity="0"/><stop offset="0.30" stop-color="#ffffff" stop-opacity="1"/><stop offset="0.60" stop-color="#ffffff" stop-opacity="1"/><stop offset="1" stop-color="#ffffff" stop-opacity="0"/></linearGradient>
<polygon points="835.0,483.0 867.0,483.0 897.0,545.0 859.0,545.0" fill="url(#sg29)" opacity="0.10" filter="url(#bl4_0)"/>
<filter id="bv" x="-10%" y="-60%" width="120%" height="220%"><feGaussianBlur stdDeviation="3 3"/></filter>
<filter id="bv5" x="-20%" y="-60%" width="140%" height="220%"><feGaussianBlur stdDeviation="9 4"/></filter>
<polygon points="607.0,391.0 657.0,381.0 767.0,379.0 812.0,387.0 797.0,403.0 697.0,406.0 622.0,401.0" fill="#c2f4c2" opacity="0.42" filter="url(#bv5)"/>
<polygon points="763.6,368.0 791.7,370.7 807.0,375.6 826.0,380.3 841.6,380.0 855.0,387.3 884.5,390.5 887.6,393.6 908.0,395.7 932.0,406.4 932.0,418.4 908.0,407.7 887.6,405.6 884.5,402.5 855.0,399.3 841.6,392.0 826.0,392.3 807.0,387.6 791.7,382.7 763.6,380.0" fill="#b4f2b4" opacity="0.55" filter="url(#bv)"/>
<polygon points="932.0,406.4 943.0,423.0 954.0,429.8 979.6,439.7 989.0,440.0 1016.4,453.0 1057.5,466.3 1076.0,478.0 1076.0,492.0 1057.5,480.3 1016.4,467.0 989.0,454.0 979.6,453.7 954.0,443.8 943.0,437.0 932.0,420.4" fill="#6e6a80" opacity="0.30" filter="url(#bv)"/>
<polygon points="1043.0,467.0 1077.0,481.0 1077.0,507.0 1047.0,487.0" fill="#9c4c9c" opacity="0.40" filter="url(#bv)"/>
<polygon points="221.5,388.5 233.0,385.8 248.0,386.8 251.5,385.0 267.0,381.7 280.0,378.0 287.0,377.0 334.5,376.6 334.5,384.6 287.0,385.0 280.0,386.0 267.0,389.7 251.5,393.0 248.0,394.8 233.0,393.8 221.5,396.5" fill="#fffff6" opacity="0.55" filter="url(#bv)"/>
<polygon points="108.0,472.5 112.0,470.2 143.0,453.4 167.4,434.3 169.6,433.0 169.6,449.0 167.4,450.3 143.0,469.4 112.0,486.2 108.0,488.5" fill="#d48cc4" opacity="0.45" filter="url(#bv)"/>
</g>
</g>
</svg>
<svg class="abs" style="left:997px;top:803px" width="50" height="30" viewBox="0 0 50 30"><path fill-rule="evenodd" fill="#ffffff" d="M5.5,2 H41.5 Q45,2 45,5.5 V22.7 Q45,26.2 41.5,26.2 H27.2 L23.3,21.6 L19.6,26.2 H5.5 Q2,26.2 2,22.7 V5.5 Q2,2 5.5,2 Z M13.8,6.5 a7.2,7.2 0 1,0 0.01,0 Z M32.8,6.5 a7.2,7.2 0 1,0 0.01,0 Z"/></svg>
</div>
<div class="abs" id="bb"></div>
<div class="abs" id="ws"></div>
<div class="abs mono" id="wstext">2</div>
<div class="abs mono st" style="left:501px;color:#f00;">no IPv6</div>
<div class="abs sep" style="left:547px;"></div>
<div class="abs mono st" style="left:552px;color:#fff;">171.8 GiB</div>
<div class="abs sep" style="left:610px;"></div>
<div class="abs mono st" style="left:615px;color:#0f0;">W: ( 59% at QUT) 172.19.27.74</div>
<div class="abs sep" style="left:793px;"></div>
<div class="abs mono st" style="left:798px;color:#f00;">E: down</div>
<div class="abs sep" style="left:844px;"></div>
<div class="abs mono st" style="left:849px;color:#fff;">FULL 100.00%</div>
<div class="abs sep" style="left:925px;"></div>
<div class="abs mono st" style="left:930px;color:#fff;">2.23</div>
<div class="abs sep" style="left:958px;"></div>
<div class="abs mono st" style="left:963px;color:#fff;">2018-07-03 17:29:45</div>
</body>
</html>
